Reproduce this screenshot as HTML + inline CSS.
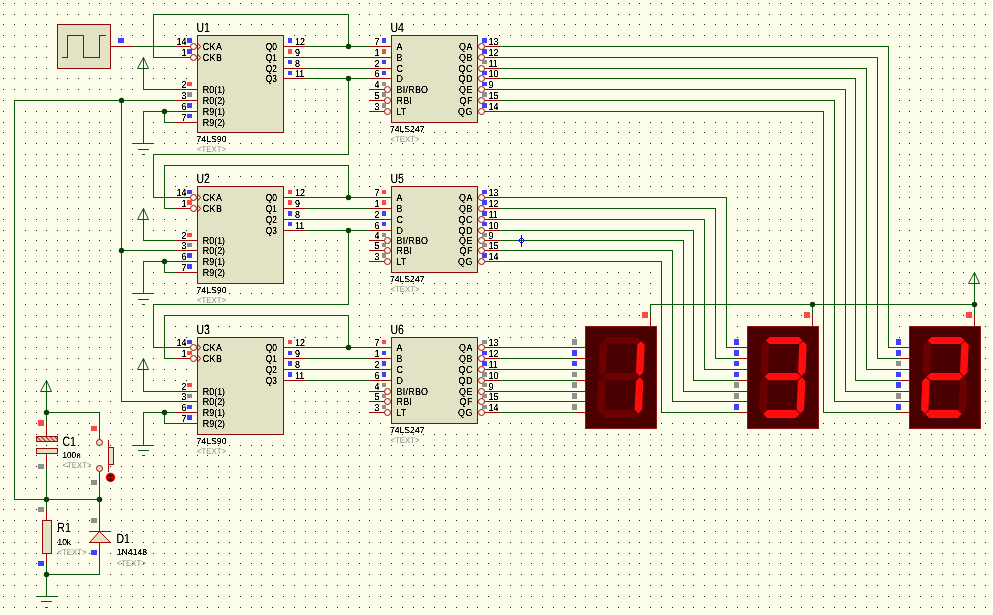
<!DOCTYPE html>
<html><head><meta charset="utf-8"><title>Schematic</title>
<style>
html,body{margin:0;padding:0;background:#fcfdea;}
body{width:993px;height:615px;overflow:hidden;}
svg{display:block;font-family:"Liberation Sans",sans-serif;}
text{text-rendering:geometricPrecision;}
</style></head><body>
<svg width="993" height="615" viewBox="0 0 993 615" shape-rendering="crispEdges">
<rect width="993" height="615" fill="#fcfdea"/>
<g id="dots" fill="#1c1c1c">
<path d="M3 3h1v1h-1zM3 14h1v1h-1zM3 24h1v1h-1zM3 35h1v1h-1zM3 46h1v1h-1zM3 57h1v1h-1zM3 68h1v1h-1zM3 78h1v1h-1zM3 89h1v1h-1zM3 100h1v1h-1zM3 111h1v1h-1zM3 122h1v1h-1zM3 132h1v1h-1zM3 143h1v1h-1zM3 154h1v1h-1zM3 165h1v1h-1zM3 176h1v1h-1zM3 186h1v1h-1zM3 197h1v1h-1zM3 208h1v1h-1zM3 219h1v1h-1zM3 230h1v1h-1zM3 240h1v1h-1zM3 250h1v1h-1zM3 261h1v1h-1zM3 272h1v1h-1zM3 283h1v1h-1zM3 293h1v1h-1zM3 304h1v1h-1zM3 315h1v1h-1zM3 326h1v1h-1zM3 337h1v1h-1zM3 347h1v1h-1zM3 358h1v1h-1zM3 369h1v1h-1zM3 380h1v1h-1zM3 391h1v1h-1zM3 401h1v1h-1zM3 412h1v1h-1zM3 423h1v1h-1zM3 434h1v1h-1zM3 445h1v1h-1zM3 455h1v1h-1zM3 466h1v1h-1zM3 477h1v1h-1zM3 488h1v1h-1zM3 499h1v1h-1zM3 509h1v1h-1zM3 520h1v1h-1zM3 531h1v1h-1zM3 542h1v1h-1zM3 553h1v1h-1zM3 563h1v1h-1zM3 574h1v1h-1zM3 585h1v1h-1zM3 596h1v1h-1zM3 607h1v1h-1zM14 3h1v1h-1zM14 14h1v1h-1zM14 24h1v1h-1zM14 35h1v1h-1zM14 46h1v1h-1zM14 57h1v1h-1zM14 68h1v1h-1zM14 78h1v1h-1zM14 89h1v1h-1zM14 100h1v1h-1zM14 111h1v1h-1zM14 122h1v1h-1zM14 132h1v1h-1zM14 143h1v1h-1zM14 154h1v1h-1zM14 165h1v1h-1zM14 176h1v1h-1zM14 186h1v1h-1zM14 197h1v1h-1zM14 208h1v1h-1zM14 219h1v1h-1zM14 230h1v1h-1zM14 240h1v1h-1zM14 250h1v1h-1zM14 261h1v1h-1zM14 272h1v1h-1zM14 283h1v1h-1zM14 293h1v1h-1zM14 304h1v1h-1zM14 315h1v1h-1zM14 326h1v1h-1zM14 337h1v1h-1zM14 347h1v1h-1zM14 358h1v1h-1zM14 369h1v1h-1zM14 380h1v1h-1zM14 391h1v1h-1zM14 401h1v1h-1zM14 412h1v1h-1zM14 423h1v1h-1zM14 434h1v1h-1zM14 445h1v1h-1zM14 455h1v1h-1zM14 466h1v1h-1zM14 477h1v1h-1zM14 488h1v1h-1zM14 499h1v1h-1zM14 509h1v1h-1zM14 520h1v1h-1zM14 531h1v1h-1zM14 542h1v1h-1zM14 553h1v1h-1zM14 563h1v1h-1zM14 574h1v1h-1zM14 585h1v1h-1zM14 596h1v1h-1zM14 607h1v1h-1zM25 3h1v1h-1zM25 14h1v1h-1zM25 24h1v1h-1zM25 35h1v1h-1zM25 46h1v1h-1zM25 57h1v1h-1zM25 68h1v1h-1zM25 78h1v1h-1zM25 89h1v1h-1zM25 100h1v1h-1zM25 111h1v1h-1zM25 122h1v1h-1zM25 132h1v1h-1zM25 143h1v1h-1zM25 154h1v1h-1zM25 165h1v1h-1zM25 176h1v1h-1zM25 186h1v1h-1zM25 197h1v1h-1zM25 208h1v1h-1zM25 219h1v1h-1zM25 230h1v1h-1zM25 240h1v1h-1zM25 250h1v1h-1zM25 261h1v1h-1zM25 272h1v1h-1zM25 283h1v1h-1zM25 293h1v1h-1zM25 304h1v1h-1zM25 315h1v1h-1zM25 326h1v1h-1zM25 337h1v1h-1zM25 347h1v1h-1zM25 358h1v1h-1zM25 369h1v1h-1zM25 380h1v1h-1zM25 391h1v1h-1zM25 401h1v1h-1zM25 412h1v1h-1zM25 423h1v1h-1zM25 434h1v1h-1zM25 445h1v1h-1zM25 455h1v1h-1zM25 466h1v1h-1zM25 477h1v1h-1zM25 488h1v1h-1zM25 499h1v1h-1zM25 509h1v1h-1zM25 520h1v1h-1zM25 531h1v1h-1zM25 542h1v1h-1zM25 553h1v1h-1zM25 563h1v1h-1zM25 574h1v1h-1zM25 585h1v1h-1zM25 596h1v1h-1zM25 607h1v1h-1zM36 3h1v1h-1zM36 14h1v1h-1zM36 24h1v1h-1zM36 35h1v1h-1zM36 46h1v1h-1zM36 57h1v1h-1zM36 68h1v1h-1zM36 78h1v1h-1zM36 89h1v1h-1zM36 100h1v1h-1zM36 111h1v1h-1zM36 122h1v1h-1zM36 132h1v1h-1zM36 143h1v1h-1zM36 154h1v1h-1zM36 165h1v1h-1zM36 176h1v1h-1zM36 186h1v1h-1zM36 197h1v1h-1zM36 208h1v1h-1zM36 219h1v1h-1zM36 230h1v1h-1zM36 240h1v1h-1zM36 250h1v1h-1zM36 261h1v1h-1zM36 272h1v1h-1zM36 283h1v1h-1zM36 293h1v1h-1zM36 304h1v1h-1zM36 315h1v1h-1zM36 326h1v1h-1zM36 337h1v1h-1zM36 347h1v1h-1zM36 358h1v1h-1zM36 369h1v1h-1zM36 380h1v1h-1zM36 391h1v1h-1zM36 401h1v1h-1zM36 412h1v1h-1zM36 423h1v1h-1zM36 434h1v1h-1zM36 445h1v1h-1zM36 455h1v1h-1zM36 466h1v1h-1zM36 477h1v1h-1zM36 488h1v1h-1zM36 499h1v1h-1zM36 509h1v1h-1zM36 520h1v1h-1zM36 531h1v1h-1zM36 542h1v1h-1zM36 553h1v1h-1zM36 563h1v1h-1zM36 574h1v1h-1zM36 585h1v1h-1zM36 596h1v1h-1zM36 607h1v1h-1zM46 3h1v1h-1zM46 14h1v1h-1zM46 24h1v1h-1zM46 35h1v1h-1zM46 46h1v1h-1zM46 57h1v1h-1zM46 68h1v1h-1zM46 78h1v1h-1zM46 89h1v1h-1zM46 100h1v1h-1zM46 111h1v1h-1zM46 122h1v1h-1zM46 132h1v1h-1zM46 143h1v1h-1zM46 154h1v1h-1zM46 165h1v1h-1zM46 176h1v1h-1zM46 186h1v1h-1zM46 197h1v1h-1zM46 208h1v1h-1zM46 219h1v1h-1zM46 230h1v1h-1zM46 240h1v1h-1zM46 250h1v1h-1zM46 261h1v1h-1zM46 272h1v1h-1zM46 283h1v1h-1zM46 293h1v1h-1zM46 304h1v1h-1zM46 315h1v1h-1zM46 326h1v1h-1zM46 337h1v1h-1zM46 347h1v1h-1zM46 358h1v1h-1zM46 369h1v1h-1zM46 380h1v1h-1zM46 391h1v1h-1zM46 401h1v1h-1zM46 412h1v1h-1zM46 423h1v1h-1zM46 434h1v1h-1zM46 445h1v1h-1zM46 455h1v1h-1zM46 466h1v1h-1zM46 477h1v1h-1zM46 488h1v1h-1zM46 499h1v1h-1zM46 509h1v1h-1zM46 520h1v1h-1zM46 531h1v1h-1zM46 542h1v1h-1zM46 553h1v1h-1zM46 563h1v1h-1zM46 574h1v1h-1zM46 585h1v1h-1zM46 596h1v1h-1zM46 607h1v1h-1zM57 3h1v1h-1zM57 14h1v1h-1zM57 24h1v1h-1zM57 35h1v1h-1zM57 46h1v1h-1zM57 57h1v1h-1zM57 68h1v1h-1zM57 78h1v1h-1zM57 89h1v1h-1zM57 100h1v1h-1zM57 111h1v1h-1zM57 122h1v1h-1zM57 132h1v1h-1zM57 143h1v1h-1zM57 154h1v1h-1zM57 165h1v1h-1zM57 176h1v1h-1zM57 186h1v1h-1zM57 197h1v1h-1zM57 208h1v1h-1zM57 219h1v1h-1zM57 230h1v1h-1zM57 240h1v1h-1zM57 250h1v1h-1zM57 261h1v1h-1zM57 272h1v1h-1zM57 283h1v1h-1zM57 293h1v1h-1zM57 304h1v1h-1zM57 315h1v1h-1zM57 326h1v1h-1zM57 337h1v1h-1zM57 347h1v1h-1zM57 358h1v1h-1zM57 369h1v1h-1zM57 380h1v1h-1zM57 391h1v1h-1zM57 401h1v1h-1zM57 412h1v1h-1zM57 423h1v1h-1zM57 434h1v1h-1zM57 445h1v1h-1zM57 455h1v1h-1zM57 466h1v1h-1zM57 477h1v1h-1zM57 488h1v1h-1zM57 499h1v1h-1zM57 509h1v1h-1zM57 520h1v1h-1zM57 531h1v1h-1zM57 542h1v1h-1zM57 553h1v1h-1zM57 563h1v1h-1zM57 574h1v1h-1zM57 585h1v1h-1zM57 596h1v1h-1zM57 607h1v1h-1zM67 3h1v1h-1zM67 14h1v1h-1zM67 24h1v1h-1zM67 35h1v1h-1zM67 46h1v1h-1zM67 57h1v1h-1zM67 68h1v1h-1zM67 78h1v1h-1zM67 89h1v1h-1zM67 100h1v1h-1zM67 111h1v1h-1zM67 122h1v1h-1zM67 132h1v1h-1zM67 143h1v1h-1zM67 154h1v1h-1zM67 165h1v1h-1zM67 176h1v1h-1zM67 186h1v1h-1zM67 197h1v1h-1zM67 208h1v1h-1zM67 219h1v1h-1zM67 230h1v1h-1zM67 240h1v1h-1zM67 250h1v1h-1zM67 261h1v1h-1zM67 272h1v1h-1zM67 283h1v1h-1zM67 293h1v1h-1zM67 304h1v1h-1zM67 315h1v1h-1zM67 326h1v1h-1zM67 337h1v1h-1zM67 347h1v1h-1zM67 358h1v1h-1zM67 369h1v1h-1zM67 380h1v1h-1zM67 391h1v1h-1zM67 401h1v1h-1zM67 412h1v1h-1zM67 423h1v1h-1zM67 434h1v1h-1zM67 445h1v1h-1zM67 455h1v1h-1zM67 466h1v1h-1zM67 477h1v1h-1zM67 488h1v1h-1zM67 499h1v1h-1zM67 509h1v1h-1zM67 520h1v1h-1zM67 531h1v1h-1zM67 542h1v1h-1zM67 553h1v1h-1zM67 563h1v1h-1zM67 574h1v1h-1zM67 585h1v1h-1zM67 596h1v1h-1zM67 607h1v1h-1zM78 3h1v1h-1zM78 14h1v1h-1zM78 24h1v1h-1zM78 35h1v1h-1zM78 46h1v1h-1zM78 57h1v1h-1zM78 68h1v1h-1zM78 78h1v1h-1zM78 89h1v1h-1zM78 100h1v1h-1zM78 111h1v1h-1zM78 122h1v1h-1zM78 132h1v1h-1zM78 143h1v1h-1zM78 154h1v1h-1zM78 165h1v1h-1zM78 176h1v1h-1zM78 186h1v1h-1zM78 197h1v1h-1zM78 208h1v1h-1zM78 219h1v1h-1zM78 230h1v1h-1zM78 240h1v1h-1zM78 250h1v1h-1zM78 261h1v1h-1zM78 272h1v1h-1zM78 283h1v1h-1zM78 293h1v1h-1zM78 304h1v1h-1zM78 315h1v1h-1zM78 326h1v1h-1zM78 337h1v1h-1zM78 347h1v1h-1zM78 358h1v1h-1zM78 369h1v1h-1zM78 380h1v1h-1zM78 391h1v1h-1zM78 401h1v1h-1zM78 412h1v1h-1zM78 423h1v1h-1zM78 434h1v1h-1zM78 445h1v1h-1zM78 455h1v1h-1zM78 466h1v1h-1zM78 477h1v1h-1zM78 488h1v1h-1zM78 499h1v1h-1zM78 509h1v1h-1zM78 520h1v1h-1zM78 531h1v1h-1zM78 542h1v1h-1zM78 553h1v1h-1zM78 563h1v1h-1zM78 574h1v1h-1zM78 585h1v1h-1zM78 596h1v1h-1zM78 607h1v1h-1zM89 3h1v1h-1zM89 14h1v1h-1zM89 24h1v1h-1zM89 35h1v1h-1zM89 46h1v1h-1zM89 57h1v1h-1zM89 68h1v1h-1zM89 78h1v1h-1zM89 89h1v1h-1zM89 100h1v1h-1zM89 111h1v1h-1zM89 122h1v1h-1zM89 132h1v1h-1zM89 143h1v1h-1zM89 154h1v1h-1zM89 165h1v1h-1zM89 176h1v1h-1zM89 186h1v1h-1zM89 197h1v1h-1zM89 208h1v1h-1zM89 219h1v1h-1zM89 230h1v1h-1zM89 240h1v1h-1zM89 250h1v1h-1zM89 261h1v1h-1zM89 272h1v1h-1zM89 283h1v1h-1zM89 293h1v1h-1zM89 304h1v1h-1zM89 315h1v1h-1zM89 326h1v1h-1zM89 337h1v1h-1zM89 347h1v1h-1zM89 358h1v1h-1zM89 369h1v1h-1zM89 380h1v1h-1zM89 391h1v1h-1zM89 401h1v1h-1zM89 412h1v1h-1zM89 423h1v1h-1zM89 434h1v1h-1zM89 445h1v1h-1zM89 455h1v1h-1zM89 466h1v1h-1zM89 477h1v1h-1zM89 488h1v1h-1zM89 499h1v1h-1zM89 509h1v1h-1zM89 520h1v1h-1zM89 531h1v1h-1zM89 542h1v1h-1zM89 553h1v1h-1zM89 563h1v1h-1zM89 574h1v1h-1zM89 585h1v1h-1zM89 596h1v1h-1zM89 607h1v1h-1zM99 3h1v1h-1zM99 14h1v1h-1zM99 24h1v1h-1zM99 35h1v1h-1zM99 46h1v1h-1zM99 57h1v1h-1zM99 68h1v1h-1zM99 78h1v1h-1zM99 89h1v1h-1zM99 100h1v1h-1zM99 111h1v1h-1zM99 122h1v1h-1zM99 132h1v1h-1zM99 143h1v1h-1zM99 154h1v1h-1zM99 165h1v1h-1zM99 176h1v1h-1zM99 186h1v1h-1zM99 197h1v1h-1zM99 208h1v1h-1zM99 219h1v1h-1zM99 230h1v1h-1zM99 240h1v1h-1zM99 250h1v1h-1zM99 261h1v1h-1zM99 272h1v1h-1zM99 283h1v1h-1zM99 293h1v1h-1zM99 304h1v1h-1zM99 315h1v1h-1zM99 326h1v1h-1zM99 337h1v1h-1zM99 347h1v1h-1zM99 358h1v1h-1zM99 369h1v1h-1zM99 380h1v1h-1zM99 391h1v1h-1zM99 401h1v1h-1zM99 412h1v1h-1zM99 423h1v1h-1zM99 434h1v1h-1zM99 445h1v1h-1zM99 455h1v1h-1zM99 466h1v1h-1zM99 477h1v1h-1zM99 488h1v1h-1zM99 499h1v1h-1zM99 509h1v1h-1zM99 520h1v1h-1zM99 531h1v1h-1zM99 542h1v1h-1zM99 553h1v1h-1zM99 563h1v1h-1zM99 574h1v1h-1zM99 585h1v1h-1zM99 596h1v1h-1zM99 607h1v1h-1zM110 3h1v1h-1zM110 14h1v1h-1zM110 24h1v1h-1zM110 35h1v1h-1zM110 46h1v1h-1zM110 57h1v1h-1zM110 68h1v1h-1zM110 78h1v1h-1zM110 89h1v1h-1zM110 100h1v1h-1zM110 111h1v1h-1zM110 122h1v1h-1zM110 132h1v1h-1zM110 143h1v1h-1zM110 154h1v1h-1zM110 165h1v1h-1zM110 176h1v1h-1zM110 186h1v1h-1zM110 197h1v1h-1zM110 208h1v1h-1zM110 219h1v1h-1zM110 230h1v1h-1zM110 240h1v1h-1zM110 250h1v1h-1zM110 261h1v1h-1zM110 272h1v1h-1zM110 283h1v1h-1zM110 293h1v1h-1zM110 304h1v1h-1zM110 315h1v1h-1zM110 326h1v1h-1zM110 337h1v1h-1zM110 347h1v1h-1zM110 358h1v1h-1zM110 369h1v1h-1zM110 380h1v1h-1zM110 391h1v1h-1zM110 401h1v1h-1zM110 412h1v1h-1zM110 423h1v1h-1zM110 434h1v1h-1zM110 445h1v1h-1zM110 455h1v1h-1zM110 466h1v1h-1zM110 477h1v1h-1zM110 488h1v1h-1zM110 499h1v1h-1zM110 509h1v1h-1zM110 520h1v1h-1zM110 531h1v1h-1zM110 542h1v1h-1zM110 553h1v1h-1zM110 563h1v1h-1zM110 574h1v1h-1zM110 585h1v1h-1zM110 596h1v1h-1zM110 607h1v1h-1zM121 3h1v1h-1zM121 14h1v1h-1zM121 24h1v1h-1zM121 35h1v1h-1zM121 46h1v1h-1zM121 57h1v1h-1zM121 68h1v1h-1zM121 78h1v1h-1zM121 89h1v1h-1zM121 100h1v1h-1zM121 111h1v1h-1zM121 122h1v1h-1zM121 132h1v1h-1zM121 143h1v1h-1zM121 154h1v1h-1zM121 165h1v1h-1zM121 176h1v1h-1zM121 186h1v1h-1zM121 197h1v1h-1zM121 208h1v1h-1zM121 219h1v1h-1zM121 230h1v1h-1zM121 240h1v1h-1zM121 250h1v1h-1zM121 261h1v1h-1zM121 272h1v1h-1zM121 283h1v1h-1zM121 293h1v1h-1zM121 304h1v1h-1zM121 315h1v1h-1zM121 326h1v1h-1zM121 337h1v1h-1zM121 347h1v1h-1zM121 358h1v1h-1zM121 369h1v1h-1zM121 380h1v1h-1zM121 391h1v1h-1zM121 401h1v1h-1zM121 412h1v1h-1zM121 423h1v1h-1zM121 434h1v1h-1zM121 445h1v1h-1zM121 455h1v1h-1zM121 466h1v1h-1zM121 477h1v1h-1zM121 488h1v1h-1zM121 499h1v1h-1zM121 509h1v1h-1zM121 520h1v1h-1zM121 531h1v1h-1zM121 542h1v1h-1zM121 553h1v1h-1zM121 563h1v1h-1zM121 574h1v1h-1zM121 585h1v1h-1zM121 596h1v1h-1zM121 607h1v1h-1zM132 3h1v1h-1zM132 14h1v1h-1zM132 24h1v1h-1zM132 35h1v1h-1zM132 46h1v1h-1zM132 57h1v1h-1zM132 68h1v1h-1zM132 78h1v1h-1zM132 89h1v1h-1zM132 100h1v1h-1zM132 111h1v1h-1zM132 122h1v1h-1zM132 132h1v1h-1zM132 143h1v1h-1zM132 154h1v1h-1zM132 165h1v1h-1zM132 176h1v1h-1zM132 186h1v1h-1zM132 197h1v1h-1zM132 208h1v1h-1zM132 219h1v1h-1zM132 230h1v1h-1zM132 240h1v1h-1zM132 250h1v1h-1zM132 261h1v1h-1zM132 272h1v1h-1zM132 283h1v1h-1zM132 293h1v1h-1zM132 304h1v1h-1zM132 315h1v1h-1zM132 326h1v1h-1zM132 337h1v1h-1zM132 347h1v1h-1zM132 358h1v1h-1zM132 369h1v1h-1zM132 380h1v1h-1zM132 391h1v1h-1zM132 401h1v1h-1zM132 412h1v1h-1zM132 423h1v1h-1zM132 434h1v1h-1zM132 445h1v1h-1zM132 455h1v1h-1zM132 466h1v1h-1zM132 477h1v1h-1zM132 488h1v1h-1zM132 499h1v1h-1zM132 509h1v1h-1zM132 520h1v1h-1zM132 531h1v1h-1zM132 542h1v1h-1zM132 553h1v1h-1zM132 563h1v1h-1zM132 574h1v1h-1zM132 585h1v1h-1zM132 596h1v1h-1zM132 607h1v1h-1zM143 3h1v1h-1zM143 14h1v1h-1zM143 24h1v1h-1zM143 35h1v1h-1zM143 46h1v1h-1zM143 57h1v1h-1zM143 68h1v1h-1zM143 78h1v1h-1zM143 89h1v1h-1zM143 100h1v1h-1zM143 111h1v1h-1zM143 122h1v1h-1zM143 132h1v1h-1zM143 143h1v1h-1zM143 154h1v1h-1zM143 165h1v1h-1zM143 176h1v1h-1zM143 186h1v1h-1zM143 197h1v1h-1zM143 208h1v1h-1zM143 219h1v1h-1zM143 230h1v1h-1zM143 240h1v1h-1zM143 250h1v1h-1zM143 261h1v1h-1zM143 272h1v1h-1zM143 283h1v1h-1zM143 293h1v1h-1zM143 304h1v1h-1zM143 315h1v1h-1zM143 326h1v1h-1zM143 337h1v1h-1zM143 347h1v1h-1zM143 358h1v1h-1zM143 369h1v1h-1zM143 380h1v1h-1zM143 391h1v1h-1zM143 401h1v1h-1zM143 412h1v1h-1zM143 423h1v1h-1zM143 434h1v1h-1zM143 445h1v1h-1zM143 455h1v1h-1zM143 466h1v1h-1zM143 477h1v1h-1zM143 488h1v1h-1zM143 499h1v1h-1zM143 509h1v1h-1zM143 520h1v1h-1zM143 531h1v1h-1zM143 542h1v1h-1zM143 553h1v1h-1zM143 563h1v1h-1zM143 574h1v1h-1zM143 585h1v1h-1zM143 596h1v1h-1zM143 607h1v1h-1zM153 3h1v1h-1zM153 14h1v1h-1zM153 24h1v1h-1zM153 35h1v1h-1zM153 46h1v1h-1zM153 57h1v1h-1zM153 68h1v1h-1zM153 78h1v1h-1zM153 89h1v1h-1zM153 100h1v1h-1zM153 111h1v1h-1zM153 122h1v1h-1zM153 132h1v1h-1zM153 143h1v1h-1zM153 154h1v1h-1zM153 165h1v1h-1zM153 176h1v1h-1zM153 186h1v1h-1zM153 197h1v1h-1zM153 208h1v1h-1zM153 219h1v1h-1zM153 230h1v1h-1zM153 240h1v1h-1zM153 250h1v1h-1zM153 261h1v1h-1zM153 272h1v1h-1zM153 283h1v1h-1zM153 293h1v1h-1zM153 304h1v1h-1zM153 315h1v1h-1zM153 326h1v1h-1zM153 337h1v1h-1zM153 347h1v1h-1zM153 358h1v1h-1zM153 369h1v1h-1zM153 380h1v1h-1zM153 391h1v1h-1zM153 401h1v1h-1zM153 412h1v1h-1zM153 423h1v1h-1zM153 434h1v1h-1zM153 445h1v1h-1zM153 455h1v1h-1zM153 466h1v1h-1zM153 477h1v1h-1zM153 488h1v1h-1zM153 499h1v1h-1zM153 509h1v1h-1zM153 520h1v1h-1zM153 531h1v1h-1zM153 542h1v1h-1zM153 553h1v1h-1zM153 563h1v1h-1zM153 574h1v1h-1zM153 585h1v1h-1zM153 596h1v1h-1zM153 607h1v1h-1zM164 3h1v1h-1zM164 14h1v1h-1zM164 24h1v1h-1zM164 35h1v1h-1zM164 46h1v1h-1zM164 57h1v1h-1zM164 68h1v1h-1zM164 78h1v1h-1zM164 89h1v1h-1zM164 100h1v1h-1zM164 111h1v1h-1zM164 122h1v1h-1zM164 132h1v1h-1zM164 143h1v1h-1zM164 154h1v1h-1zM164 165h1v1h-1zM164 176h1v1h-1zM164 186h1v1h-1zM164 197h1v1h-1zM164 208h1v1h-1zM164 219h1v1h-1zM164 230h1v1h-1zM164 240h1v1h-1zM164 250h1v1h-1zM164 261h1v1h-1zM164 272h1v1h-1zM164 283h1v1h-1zM164 293h1v1h-1zM164 304h1v1h-1zM164 315h1v1h-1zM164 326h1v1h-1zM164 337h1v1h-1zM164 347h1v1h-1zM164 358h1v1h-1zM164 369h1v1h-1zM164 380h1v1h-1zM164 391h1v1h-1zM164 401h1v1h-1zM164 412h1v1h-1zM164 423h1v1h-1zM164 434h1v1h-1zM164 445h1v1h-1zM164 455h1v1h-1zM164 466h1v1h-1zM164 477h1v1h-1zM164 488h1v1h-1zM164 499h1v1h-1zM164 509h1v1h-1zM164 520h1v1h-1zM164 531h1v1h-1zM164 542h1v1h-1zM164 553h1v1h-1zM164 563h1v1h-1zM164 574h1v1h-1zM164 585h1v1h-1zM164 596h1v1h-1zM164 607h1v1h-1zM175 3h1v1h-1zM175 14h1v1h-1zM175 24h1v1h-1zM175 35h1v1h-1zM175 46h1v1h-1zM175 57h1v1h-1zM175 68h1v1h-1zM175 78h1v1h-1zM175 89h1v1h-1zM175 100h1v1h-1zM175 111h1v1h-1zM175 122h1v1h-1zM175 132h1v1h-1zM175 143h1v1h-1zM175 154h1v1h-1zM175 165h1v1h-1zM175 176h1v1h-1zM175 186h1v1h-1zM175 197h1v1h-1zM175 208h1v1h-1zM175 219h1v1h-1zM175 230h1v1h-1zM175 240h1v1h-1zM175 250h1v1h-1zM175 261h1v1h-1zM175 272h1v1h-1zM175 283h1v1h-1zM175 293h1v1h-1zM175 304h1v1h-1zM175 315h1v1h-1zM175 326h1v1h-1zM175 337h1v1h-1zM175 347h1v1h-1zM175 358h1v1h-1zM175 369h1v1h-1zM175 380h1v1h-1zM175 391h1v1h-1zM175 401h1v1h-1zM175 412h1v1h-1zM175 423h1v1h-1zM175 434h1v1h-1zM175 445h1v1h-1zM175 455h1v1h-1zM175 466h1v1h-1zM175 477h1v1h-1zM175 488h1v1h-1zM175 499h1v1h-1zM175 509h1v1h-1zM175 520h1v1h-1zM175 531h1v1h-1zM175 542h1v1h-1zM175 553h1v1h-1zM175 563h1v1h-1zM175 574h1v1h-1zM175 585h1v1h-1zM175 596h1v1h-1zM175 607h1v1h-1zM186 3h1v1h-1zM186 14h1v1h-1zM186 24h1v1h-1zM186 35h1v1h-1zM186 46h1v1h-1zM186 57h1v1h-1zM186 68h1v1h-1zM186 78h1v1h-1zM186 89h1v1h-1zM186 100h1v1h-1zM186 111h1v1h-1zM186 122h1v1h-1zM186 132h1v1h-1zM186 143h1v1h-1zM186 154h1v1h-1zM186 165h1v1h-1zM186 176h1v1h-1zM186 186h1v1h-1zM186 197h1v1h-1zM186 208h1v1h-1zM186 219h1v1h-1zM186 230h1v1h-1zM186 240h1v1h-1zM186 250h1v1h-1zM186 261h1v1h-1zM186 272h1v1h-1zM186 283h1v1h-1zM186 293h1v1h-1zM186 304h1v1h-1zM186 315h1v1h-1zM186 326h1v1h-1zM186 337h1v1h-1zM186 347h1v1h-1zM186 358h1v1h-1zM186 369h1v1h-1zM186 380h1v1h-1zM186 391h1v1h-1zM186 401h1v1h-1zM186 412h1v1h-1zM186 423h1v1h-1zM186 434h1v1h-1zM186 445h1v1h-1zM186 455h1v1h-1zM186 466h1v1h-1zM186 477h1v1h-1zM186 488h1v1h-1zM186 499h1v1h-1zM186 509h1v1h-1zM186 520h1v1h-1zM186 531h1v1h-1zM186 542h1v1h-1zM186 553h1v1h-1zM186 563h1v1h-1zM186 574h1v1h-1zM186 585h1v1h-1zM186 596h1v1h-1zM186 607h1v1h-1zM197 3h1v1h-1zM197 14h1v1h-1zM197 24h1v1h-1zM197 35h1v1h-1zM197 46h1v1h-1zM197 57h1v1h-1zM197 68h1v1h-1zM197 78h1v1h-1zM197 89h1v1h-1zM197 100h1v1h-1zM197 111h1v1h-1zM197 122h1v1h-1zM197 132h1v1h-1zM197 143h1v1h-1zM197 154h1v1h-1zM197 165h1v1h-1zM197 176h1v1h-1zM197 186h1v1h-1zM197 197h1v1h-1zM197 208h1v1h-1zM197 219h1v1h-1zM197 230h1v1h-1zM197 240h1v1h-1zM197 250h1v1h-1zM197 261h1v1h-1zM197 272h1v1h-1zM197 283h1v1h-1zM197 293h1v1h-1zM197 304h1v1h-1zM197 315h1v1h-1zM197 326h1v1h-1zM197 337h1v1h-1zM197 347h1v1h-1zM197 358h1v1h-1zM197 369h1v1h-1zM197 380h1v1h-1zM197 391h1v1h-1zM197 401h1v1h-1zM197 412h1v1h-1zM197 423h1v1h-1zM197 434h1v1h-1zM197 445h1v1h-1zM197 455h1v1h-1zM197 466h1v1h-1zM197 477h1v1h-1zM197 488h1v1h-1zM197 499h1v1h-1zM197 509h1v1h-1zM197 520h1v1h-1zM197 531h1v1h-1zM197 542h1v1h-1zM197 553h1v1h-1zM197 563h1v1h-1zM197 574h1v1h-1zM197 585h1v1h-1zM197 596h1v1h-1zM197 607h1v1h-1zM207 3h1v1h-1zM207 14h1v1h-1zM207 24h1v1h-1zM207 35h1v1h-1zM207 46h1v1h-1zM207 57h1v1h-1zM207 68h1v1h-1zM207 78h1v1h-1zM207 89h1v1h-1zM207 100h1v1h-1zM207 111h1v1h-1zM207 122h1v1h-1zM207 132h1v1h-1zM207 143h1v1h-1zM207 154h1v1h-1zM207 165h1v1h-1zM207 176h1v1h-1zM207 186h1v1h-1zM207 197h1v1h-1zM207 208h1v1h-1zM207 219h1v1h-1zM207 230h1v1h-1zM207 240h1v1h-1zM207 250h1v1h-1zM207 261h1v1h-1zM207 272h1v1h-1zM207 283h1v1h-1zM207 293h1v1h-1zM207 304h1v1h-1zM207 315h1v1h-1zM207 326h1v1h-1zM207 337h1v1h-1zM207 347h1v1h-1zM207 358h1v1h-1zM207 369h1v1h-1zM207 380h1v1h-1zM207 391h1v1h-1zM207 401h1v1h-1zM207 412h1v1h-1zM207 423h1v1h-1zM207 434h1v1h-1zM207 445h1v1h-1zM207 455h1v1h-1zM207 466h1v1h-1zM207 477h1v1h-1zM207 488h1v1h-1zM207 499h1v1h-1zM207 509h1v1h-1zM207 520h1v1h-1zM207 531h1v1h-1zM207 542h1v1h-1zM207 553h1v1h-1zM207 563h1v1h-1zM207 574h1v1h-1zM207 585h1v1h-1zM207 596h1v1h-1zM207 607h1v1h-1zM218 3h1v1h-1zM218 14h1v1h-1zM218 24h1v1h-1zM218 35h1v1h-1zM218 46h1v1h-1zM218 57h1v1h-1zM218 68h1v1h-1zM218 78h1v1h-1zM218 89h1v1h-1zM218 100h1v1h-1zM218 111h1v1h-1zM218 122h1v1h-1zM218 132h1v1h-1zM218 143h1v1h-1zM218 154h1v1h-1zM218 165h1v1h-1zM218 176h1v1h-1zM218 186h1v1h-1zM218 197h1v1h-1zM218 208h1v1h-1zM218 219h1v1h-1zM218 230h1v1h-1zM218 240h1v1h-1zM218 250h1v1h-1zM218 261h1v1h-1zM218 272h1v1h-1zM218 283h1v1h-1zM218 293h1v1h-1zM218 304h1v1h-1zM218 315h1v1h-1zM218 326h1v1h-1zM218 337h1v1h-1zM218 347h1v1h-1zM218 358h1v1h-1zM218 369h1v1h-1zM218 380h1v1h-1zM218 391h1v1h-1zM218 401h1v1h-1zM218 412h1v1h-1zM218 423h1v1h-1zM218 434h1v1h-1zM218 445h1v1h-1zM218 455h1v1h-1zM218 466h1v1h-1zM218 477h1v1h-1zM218 488h1v1h-1zM218 499h1v1h-1zM218 509h1v1h-1zM218 520h1v1h-1zM218 531h1v1h-1zM218 542h1v1h-1zM218 553h1v1h-1zM218 563h1v1h-1zM218 574h1v1h-1zM218 585h1v1h-1zM218 596h1v1h-1zM218 607h1v1h-1zM229 3h1v1h-1zM229 14h1v1h-1zM229 24h1v1h-1zM229 35h1v1h-1zM229 46h1v1h-1zM229 57h1v1h-1zM229 68h1v1h-1zM229 78h1v1h-1zM229 89h1v1h-1zM229 100h1v1h-1zM229 111h1v1h-1zM229 122h1v1h-1zM229 132h1v1h-1zM229 143h1v1h-1zM229 154h1v1h-1zM229 165h1v1h-1zM229 176h1v1h-1zM229 186h1v1h-1zM229 197h1v1h-1zM229 208h1v1h-1zM229 219h1v1h-1zM229 230h1v1h-1zM229 240h1v1h-1zM229 250h1v1h-1zM229 261h1v1h-1zM229 272h1v1h-1zM229 283h1v1h-1zM229 293h1v1h-1zM229 304h1v1h-1zM229 315h1v1h-1zM229 326h1v1h-1zM229 337h1v1h-1zM229 347h1v1h-1zM229 358h1v1h-1zM229 369h1v1h-1zM229 380h1v1h-1zM229 391h1v1h-1zM229 401h1v1h-1zM229 412h1v1h-1zM229 423h1v1h-1zM229 434h1v1h-1zM229 445h1v1h-1zM229 455h1v1h-1zM229 466h1v1h-1zM229 477h1v1h-1zM229 488h1v1h-1zM229 499h1v1h-1zM229 509h1v1h-1zM229 520h1v1h-1zM229 531h1v1h-1zM229 542h1v1h-1zM229 553h1v1h-1zM229 563h1v1h-1zM229 574h1v1h-1zM229 585h1v1h-1zM229 596h1v1h-1zM229 607h1v1h-1zM240 3h1v1h-1zM240 14h1v1h-1zM240 24h1v1h-1zM240 35h1v1h-1zM240 46h1v1h-1zM240 57h1v1h-1zM240 68h1v1h-1zM240 78h1v1h-1zM240 89h1v1h-1zM240 100h1v1h-1zM240 111h1v1h-1zM240 122h1v1h-1zM240 132h1v1h-1zM240 143h1v1h-1zM240 154h1v1h-1zM240 165h1v1h-1zM240 176h1v1h-1zM240 186h1v1h-1zM240 197h1v1h-1zM240 208h1v1h-1zM240 219h1v1h-1zM240 230h1v1h-1zM240 240h1v1h-1zM240 250h1v1h-1zM240 261h1v1h-1zM240 272h1v1h-1zM240 283h1v1h-1zM240 293h1v1h-1zM240 304h1v1h-1zM240 315h1v1h-1zM240 326h1v1h-1zM240 337h1v1h-1zM240 347h1v1h-1zM240 358h1v1h-1zM240 369h1v1h-1zM240 380h1v1h-1zM240 391h1v1h-1zM240 401h1v1h-1zM240 412h1v1h-1zM240 423h1v1h-1zM240 434h1v1h-1zM240 445h1v1h-1zM240 455h1v1h-1zM240 466h1v1h-1zM240 477h1v1h-1zM240 488h1v1h-1zM240 499h1v1h-1zM240 509h1v1h-1zM240 520h1v1h-1zM240 531h1v1h-1zM240 542h1v1h-1zM240 553h1v1h-1zM240 563h1v1h-1zM240 574h1v1h-1zM240 585h1v1h-1zM240 596h1v1h-1zM240 607h1v1h-1zM251 3h1v1h-1zM251 14h1v1h-1zM251 24h1v1h-1zM251 35h1v1h-1zM251 46h1v1h-1zM251 57h1v1h-1zM251 68h1v1h-1zM251 78h1v1h-1zM251 89h1v1h-1zM251 100h1v1h-1zM251 111h1v1h-1zM251 122h1v1h-1zM251 132h1v1h-1zM251 143h1v1h-1zM251 154h1v1h-1zM251 165h1v1h-1zM251 176h1v1h-1zM251 186h1v1h-1zM251 197h1v1h-1zM251 208h1v1h-1zM251 219h1v1h-1zM251 230h1v1h-1zM251 240h1v1h-1zM251 250h1v1h-1zM251 261h1v1h-1zM251 272h1v1h-1zM251 283h1v1h-1zM251 293h1v1h-1zM251 304h1v1h-1zM251 315h1v1h-1zM251 326h1v1h-1zM251 337h1v1h-1zM251 347h1v1h-1zM251 358h1v1h-1zM251 369h1v1h-1zM251 380h1v1h-1zM251 391h1v1h-1zM251 401h1v1h-1zM251 412h1v1h-1zM251 423h1v1h-1zM251 434h1v1h-1zM251 445h1v1h-1zM251 455h1v1h-1zM251 466h1v1h-1zM251 477h1v1h-1zM251 488h1v1h-1zM251 499h1v1h-1zM251 509h1v1h-1zM251 520h1v1h-1zM251 531h1v1h-1zM251 542h1v1h-1zM251 553h1v1h-1zM251 563h1v1h-1zM251 574h1v1h-1zM251 585h1v1h-1zM251 596h1v1h-1zM251 607h1v1h-1zM261 3h1v1h-1zM261 14h1v1h-1zM261 24h1v1h-1zM261 35h1v1h-1zM261 46h1v1h-1zM261 57h1v1h-1zM261 68h1v1h-1zM261 78h1v1h-1zM261 89h1v1h-1zM261 100h1v1h-1zM261 111h1v1h-1zM261 122h1v1h-1zM261 132h1v1h-1zM261 143h1v1h-1zM261 154h1v1h-1zM261 165h1v1h-1zM261 176h1v1h-1zM261 186h1v1h-1zM261 197h1v1h-1zM261 208h1v1h-1zM261 219h1v1h-1zM261 230h1v1h-1zM261 240h1v1h-1zM261 250h1v1h-1zM261 261h1v1h-1zM261 272h1v1h-1zM261 283h1v1h-1zM261 293h1v1h-1zM261 304h1v1h-1zM261 315h1v1h-1zM261 326h1v1h-1zM261 337h1v1h-1zM261 347h1v1h-1zM261 358h1v1h-1zM261 369h1v1h-1zM261 380h1v1h-1zM261 391h1v1h-1zM261 401h1v1h-1zM261 412h1v1h-1zM261 423h1v1h-1zM261 434h1v1h-1zM261 445h1v1h-1zM261 455h1v1h-1zM261 466h1v1h-1zM261 477h1v1h-1zM261 488h1v1h-1zM261 499h1v1h-1zM261 509h1v1h-1zM261 520h1v1h-1zM261 531h1v1h-1zM261 542h1v1h-1zM261 553h1v1h-1zM261 563h1v1h-1zM261 574h1v1h-1zM261 585h1v1h-1zM261 596h1v1h-1zM261 607h1v1h-1zM272 3h1v1h-1zM272 14h1v1h-1zM272 24h1v1h-1zM272 35h1v1h-1zM272 46h1v1h-1zM272 57h1v1h-1zM272 68h1v1h-1zM272 78h1v1h-1zM272 89h1v1h-1zM272 100h1v1h-1zM272 111h1v1h-1zM272 122h1v1h-1zM272 132h1v1h-1zM272 143h1v1h-1zM272 154h1v1h-1zM272 165h1v1h-1zM272 176h1v1h-1zM272 186h1v1h-1zM272 197h1v1h-1zM272 208h1v1h-1zM272 219h1v1h-1zM272 230h1v1h-1zM272 240h1v1h-1zM272 250h1v1h-1zM272 261h1v1h-1zM272 272h1v1h-1zM272 283h1v1h-1zM272 293h1v1h-1zM272 304h1v1h-1zM272 315h1v1h-1zM272 326h1v1h-1zM272 337h1v1h-1zM272 347h1v1h-1zM272 358h1v1h-1zM272 369h1v1h-1zM272 380h1v1h-1zM272 391h1v1h-1zM272 401h1v1h-1zM272 412h1v1h-1zM272 423h1v1h-1zM272 434h1v1h-1zM272 445h1v1h-1zM272 455h1v1h-1zM272 466h1v1h-1zM272 477h1v1h-1zM272 488h1v1h-1zM272 499h1v1h-1zM272 509h1v1h-1zM272 520h1v1h-1zM272 531h1v1h-1zM272 542h1v1h-1zM272 553h1v1h-1zM272 563h1v1h-1zM272 574h1v1h-1zM272 585h1v1h-1zM272 596h1v1h-1zM272 607h1v1h-1zM283 3h1v1h-1zM283 14h1v1h-1zM283 24h1v1h-1zM283 35h1v1h-1zM283 46h1v1h-1zM283 57h1v1h-1zM283 68h1v1h-1zM283 78h1v1h-1zM283 89h1v1h-1zM283 100h1v1h-1zM283 111h1v1h-1zM283 122h1v1h-1zM283 132h1v1h-1zM283 143h1v1h-1zM283 154h1v1h-1zM283 165h1v1h-1zM283 176h1v1h-1zM283 186h1v1h-1zM283 197h1v1h-1zM283 208h1v1h-1zM283 219h1v1h-1zM283 230h1v1h-1zM283 240h1v1h-1zM283 250h1v1h-1zM283 261h1v1h-1zM283 272h1v1h-1zM283 283h1v1h-1zM283 293h1v1h-1zM283 304h1v1h-1zM283 315h1v1h-1zM283 326h1v1h-1zM283 337h1v1h-1zM283 347h1v1h-1zM283 358h1v1h-1zM283 369h1v1h-1zM283 380h1v1h-1zM283 391h1v1h-1zM283 401h1v1h-1zM283 412h1v1h-1zM283 423h1v1h-1zM283 434h1v1h-1zM283 445h1v1h-1zM283 455h1v1h-1zM283 466h1v1h-1zM283 477h1v1h-1zM283 488h1v1h-1zM283 499h1v1h-1zM283 509h1v1h-1zM283 520h1v1h-1zM283 531h1v1h-1zM283 542h1v1h-1zM283 553h1v1h-1zM283 563h1v1h-1zM283 574h1v1h-1zM283 585h1v1h-1zM283 596h1v1h-1zM283 607h1v1h-1zM294 3h1v1h-1zM294 14h1v1h-1zM294 24h1v1h-1zM294 35h1v1h-1zM294 46h1v1h-1zM294 57h1v1h-1zM294 68h1v1h-1zM294 78h1v1h-1zM294 89h1v1h-1zM294 100h1v1h-1zM294 111h1v1h-1zM294 122h1v1h-1zM294 132h1v1h-1zM294 143h1v1h-1zM294 154h1v1h-1zM294 165h1v1h-1zM294 176h1v1h-1zM294 186h1v1h-1zM294 197h1v1h-1zM294 208h1v1h-1zM294 219h1v1h-1zM294 230h1v1h-1zM294 240h1v1h-1zM294 250h1v1h-1zM294 261h1v1h-1zM294 272h1v1h-1zM294 283h1v1h-1zM294 293h1v1h-1zM294 304h1v1h-1zM294 315h1v1h-1zM294 326h1v1h-1zM294 337h1v1h-1zM294 347h1v1h-1zM294 358h1v1h-1zM294 369h1v1h-1zM294 380h1v1h-1zM294 391h1v1h-1zM294 401h1v1h-1zM294 412h1v1h-1zM294 423h1v1h-1zM294 434h1v1h-1zM294 445h1v1h-1zM294 455h1v1h-1zM294 466h1v1h-1zM294 477h1v1h-1zM294 488h1v1h-1zM294 499h1v1h-1zM294 509h1v1h-1zM294 520h1v1h-1zM294 531h1v1h-1zM294 542h1v1h-1zM294 553h1v1h-1zM294 563h1v1h-1zM294 574h1v1h-1zM294 585h1v1h-1zM294 596h1v1h-1zM294 607h1v1h-1zM305 3h1v1h-1zM305 14h1v1h-1zM305 24h1v1h-1zM305 35h1v1h-1zM305 46h1v1h-1zM305 57h1v1h-1zM305 68h1v1h-1zM305 78h1v1h-1zM305 89h1v1h-1zM305 100h1v1h-1zM305 111h1v1h-1zM305 122h1v1h-1zM305 132h1v1h-1zM305 143h1v1h-1zM305 154h1v1h-1zM305 165h1v1h-1zM305 176h1v1h-1zM305 186h1v1h-1zM305 197h1v1h-1zM305 208h1v1h-1zM305 219h1v1h-1zM305 230h1v1h-1zM305 240h1v1h-1zM305 250h1v1h-1zM305 261h1v1h-1zM305 272h1v1h-1zM305 283h1v1h-1zM305 293h1v1h-1zM305 304h1v1h-1zM305 315h1v1h-1zM305 326h1v1h-1zM305 337h1v1h-1zM305 347h1v1h-1zM305 358h1v1h-1zM305 369h1v1h-1zM305 380h1v1h-1zM305 391h1v1h-1zM305 401h1v1h-1zM305 412h1v1h-1zM305 423h1v1h-1zM305 434h1v1h-1zM305 445h1v1h-1zM305 455h1v1h-1zM305 466h1v1h-1zM305 477h1v1h-1zM305 488h1v1h-1zM305 499h1v1h-1zM305 509h1v1h-1zM305 520h1v1h-1zM305 531h1v1h-1zM305 542h1v1h-1zM305 553h1v1h-1zM305 563h1v1h-1zM305 574h1v1h-1zM305 585h1v1h-1zM305 596h1v1h-1zM305 607h1v1h-1zM315 3h1v1h-1zM315 14h1v1h-1zM315 24h1v1h-1zM315 35h1v1h-1zM315 46h1v1h-1zM315 57h1v1h-1zM315 68h1v1h-1zM315 78h1v1h-1zM315 89h1v1h-1zM315 100h1v1h-1zM315 111h1v1h-1zM315 122h1v1h-1zM315 132h1v1h-1zM315 143h1v1h-1zM315 154h1v1h-1zM315 165h1v1h-1zM315 176h1v1h-1zM315 186h1v1h-1zM315 197h1v1h-1zM315 208h1v1h-1zM315 219h1v1h-1zM315 230h1v1h-1zM315 240h1v1h-1zM315 250h1v1h-1zM315 261h1v1h-1zM315 272h1v1h-1zM315 283h1v1h-1zM315 293h1v1h-1zM315 304h1v1h-1zM315 315h1v1h-1zM315 326h1v1h-1zM315 337h1v1h-1zM315 347h1v1h-1zM315 358h1v1h-1zM315 369h1v1h-1zM315 380h1v1h-1zM315 391h1v1h-1zM315 401h1v1h-1zM315 412h1v1h-1zM315 423h1v1h-1zM315 434h1v1h-1zM315 445h1v1h-1zM315 455h1v1h-1zM315 466h1v1h-1zM315 477h1v1h-1zM315 488h1v1h-1zM315 499h1v1h-1zM315 509h1v1h-1zM315 520h1v1h-1zM315 531h1v1h-1zM315 542h1v1h-1zM315 553h1v1h-1zM315 563h1v1h-1zM315 574h1v1h-1zM315 585h1v1h-1zM315 596h1v1h-1zM315 607h1v1h-1zM326 3h1v1h-1zM326 14h1v1h-1zM326 24h1v1h-1zM326 35h1v1h-1zM326 46h1v1h-1zM326 57h1v1h-1zM326 68h1v1h-1zM326 78h1v1h-1zM326 89h1v1h-1zM326 100h1v1h-1zM326 111h1v1h-1zM326 122h1v1h-1zM326 132h1v1h-1zM326 143h1v1h-1zM326 154h1v1h-1zM326 165h1v1h-1zM326 176h1v1h-1zM326 186h1v1h-1zM326 197h1v1h-1zM326 208h1v1h-1zM326 219h1v1h-1zM326 230h1v1h-1zM326 240h1v1h-1zM326 250h1v1h-1zM326 261h1v1h-1zM326 272h1v1h-1zM326 283h1v1h-1zM326 293h1v1h-1zM326 304h1v1h-1zM326 315h1v1h-1zM326 326h1v1h-1zM326 337h1v1h-1zM326 347h1v1h-1zM326 358h1v1h-1zM326 369h1v1h-1zM326 380h1v1h-1zM326 391h1v1h-1zM326 401h1v1h-1zM326 412h1v1h-1zM326 423h1v1h-1zM326 434h1v1h-1zM326 445h1v1h-1zM326 455h1v1h-1zM326 466h1v1h-1zM326 477h1v1h-1zM326 488h1v1h-1zM326 499h1v1h-1zM326 509h1v1h-1zM326 520h1v1h-1zM326 531h1v1h-1zM326 542h1v1h-1zM326 553h1v1h-1zM326 563h1v1h-1zM326 574h1v1h-1zM326 585h1v1h-1zM326 596h1v1h-1zM326 607h1v1h-1zM337 3h1v1h-1zM337 14h1v1h-1zM337 24h1v1h-1zM337 35h1v1h-1zM337 46h1v1h-1zM337 57h1v1h-1zM337 68h1v1h-1zM337 78h1v1h-1zM337 89h1v1h-1zM337 100h1v1h-1zM337 111h1v1h-1zM337 122h1v1h-1zM337 132h1v1h-1zM337 143h1v1h-1zM337 154h1v1h-1zM337 165h1v1h-1zM337 176h1v1h-1zM337 186h1v1h-1zM337 197h1v1h-1zM337 208h1v1h-1zM337 219h1v1h-1zM337 230h1v1h-1zM337 240h1v1h-1zM337 250h1v1h-1zM337 261h1v1h-1zM337 272h1v1h-1zM337 283h1v1h-1zM337 293h1v1h-1zM337 304h1v1h-1zM337 315h1v1h-1zM337 326h1v1h-1zM337 337h1v1h-1zM337 347h1v1h-1zM337 358h1v1h-1zM337 369h1v1h-1zM337 380h1v1h-1zM337 391h1v1h-1zM337 401h1v1h-1zM337 412h1v1h-1zM337 423h1v1h-1zM337 434h1v1h-1zM337 445h1v1h-1zM337 455h1v1h-1zM337 466h1v1h-1zM337 477h1v1h-1zM337 488h1v1h-1zM337 499h1v1h-1zM337 509h1v1h-1zM337 520h1v1h-1zM337 531h1v1h-1zM337 542h1v1h-1zM337 553h1v1h-1zM337 563h1v1h-1zM337 574h1v1h-1zM337 585h1v1h-1zM337 596h1v1h-1zM337 607h1v1h-1zM348 3h1v1h-1zM348 14h1v1h-1zM348 24h1v1h-1zM348 35h1v1h-1zM348 46h1v1h-1zM348 57h1v1h-1zM348 68h1v1h-1zM348 78h1v1h-1zM348 89h1v1h-1zM348 100h1v1h-1zM348 111h1v1h-1zM348 122h1v1h-1zM348 132h1v1h-1zM348 143h1v1h-1zM348 154h1v1h-1zM348 165h1v1h-1zM348 176h1v1h-1zM348 186h1v1h-1zM348 197h1v1h-1zM348 208h1v1h-1zM348 219h1v1h-1zM348 230h1v1h-1zM348 240h1v1h-1zM348 250h1v1h-1zM348 261h1v1h-1zM348 272h1v1h-1zM348 283h1v1h-1zM348 293h1v1h-1zM348 304h1v1h-1zM348 315h1v1h-1zM348 326h1v1h-1zM348 337h1v1h-1zM348 347h1v1h-1zM348 358h1v1h-1zM348 369h1v1h-1zM348 380h1v1h-1zM348 391h1v1h-1zM348 401h1v1h-1zM348 412h1v1h-1zM348 423h1v1h-1zM348 434h1v1h-1zM348 445h1v1h-1zM348 455h1v1h-1zM348 466h1v1h-1zM348 477h1v1h-1zM348 488h1v1h-1zM348 499h1v1h-1zM348 509h1v1h-1zM348 520h1v1h-1zM348 531h1v1h-1zM348 542h1v1h-1zM348 553h1v1h-1zM348 563h1v1h-1zM348 574h1v1h-1zM348 585h1v1h-1zM348 596h1v1h-1zM348 607h1v1h-1zM359 3h1v1h-1zM359 14h1v1h-1zM359 24h1v1h-1zM359 35h1v1h-1zM359 46h1v1h-1zM359 57h1v1h-1zM359 68h1v1h-1zM359 78h1v1h-1zM359 89h1v1h-1zM359 100h1v1h-1zM359 111h1v1h-1zM359 122h1v1h-1zM359 132h1v1h-1zM359 143h1v1h-1zM359 154h1v1h-1zM359 165h1v1h-1zM359 176h1v1h-1zM359 186h1v1h-1zM359 197h1v1h-1zM359 208h1v1h-1zM359 219h1v1h-1zM359 230h1v1h-1zM359 240h1v1h-1zM359 250h1v1h-1zM359 261h1v1h-1zM359 272h1v1h-1zM359 283h1v1h-1zM359 293h1v1h-1zM359 304h1v1h-1zM359 315h1v1h-1zM359 326h1v1h-1zM359 337h1v1h-1zM359 347h1v1h-1zM359 358h1v1h-1zM359 369h1v1h-1zM359 380h1v1h-1zM359 391h1v1h-1zM359 401h1v1h-1zM359 412h1v1h-1zM359 423h1v1h-1zM359 434h1v1h-1zM359 445h1v1h-1zM359 455h1v1h-1zM359 466h1v1h-1zM359 477h1v1h-1zM359 488h1v1h-1zM359 499h1v1h-1zM359 509h1v1h-1zM359 520h1v1h-1zM359 531h1v1h-1zM359 542h1v1h-1zM359 553h1v1h-1zM359 563h1v1h-1zM359 574h1v1h-1zM359 585h1v1h-1zM359 596h1v1h-1zM359 607h1v1h-1zM369 3h1v1h-1zM369 14h1v1h-1zM369 24h1v1h-1zM369 35h1v1h-1zM369 46h1v1h-1zM369 57h1v1h-1zM369 68h1v1h-1zM369 78h1v1h-1zM369 89h1v1h-1zM369 100h1v1h-1zM369 111h1v1h-1zM369 122h1v1h-1zM369 132h1v1h-1zM369 143h1v1h-1zM369 154h1v1h-1zM369 165h1v1h-1zM369 176h1v1h-1zM369 186h1v1h-1zM369 197h1v1h-1zM369 208h1v1h-1zM369 219h1v1h-1zM369 230h1v1h-1zM369 240h1v1h-1zM369 250h1v1h-1zM369 261h1v1h-1zM369 272h1v1h-1zM369 283h1v1h-1zM369 293h1v1h-1zM369 304h1v1h-1zM369 315h1v1h-1zM369 326h1v1h-1zM369 337h1v1h-1zM369 347h1v1h-1zM369 358h1v1h-1zM369 369h1v1h-1zM369 380h1v1h-1zM369 391h1v1h-1zM369 401h1v1h-1zM369 412h1v1h-1zM369 423h1v1h-1zM369 434h1v1h-1zM369 445h1v1h-1zM369 455h1v1h-1zM369 466h1v1h-1zM369 477h1v1h-1zM369 488h1v1h-1zM369 499h1v1h-1zM369 509h1v1h-1zM369 520h1v1h-1zM369 531h1v1h-1zM369 542h1v1h-1zM369 553h1v1h-1zM369 563h1v1h-1zM369 574h1v1h-1zM369 585h1v1h-1zM369 596h1v1h-1zM369 607h1v1h-1zM380 3h1v1h-1zM380 14h1v1h-1zM380 24h1v1h-1zM380 35h1v1h-1zM380 46h1v1h-1zM380 57h1v1h-1zM380 68h1v1h-1zM380 78h1v1h-1zM380 89h1v1h-1zM380 100h1v1h-1zM380 111h1v1h-1zM380 122h1v1h-1zM380 132h1v1h-1zM380 143h1v1h-1zM380 154h1v1h-1zM380 165h1v1h-1zM380 176h1v1h-1zM380 186h1v1h-1zM380 197h1v1h-1zM380 208h1v1h-1zM380 219h1v1h-1zM380 230h1v1h-1zM380 240h1v1h-1zM380 250h1v1h-1zM380 261h1v1h-1zM380 272h1v1h-1zM380 283h1v1h-1zM380 293h1v1h-1zM380 304h1v1h-1zM380 315h1v1h-1zM380 326h1v1h-1zM380 337h1v1h-1zM380 347h1v1h-1zM380 358h1v1h-1zM380 369h1v1h-1zM380 380h1v1h-1zM380 391h1v1h-1zM380 401h1v1h-1zM380 412h1v1h-1zM380 423h1v1h-1zM380 434h1v1h-1zM380 445h1v1h-1zM380 455h1v1h-1zM380 466h1v1h-1zM380 477h1v1h-1zM380 488h1v1h-1zM380 499h1v1h-1zM380 509h1v1h-1zM380 520h1v1h-1zM380 531h1v1h-1zM380 542h1v1h-1zM380 553h1v1h-1zM380 563h1v1h-1zM380 574h1v1h-1zM380 585h1v1h-1zM380 596h1v1h-1zM380 607h1v1h-1zM391 3h1v1h-1zM391 14h1v1h-1zM391 24h1v1h-1zM391 35h1v1h-1zM391 46h1v1h-1zM391 57h1v1h-1zM391 68h1v1h-1zM391 78h1v1h-1zM391 89h1v1h-1zM391 100h1v1h-1zM391 111h1v1h-1zM391 122h1v1h-1zM391 132h1v1h-1zM391 143h1v1h-1zM391 154h1v1h-1zM391 165h1v1h-1zM391 176h1v1h-1zM391 186h1v1h-1zM391 197h1v1h-1zM391 208h1v1h-1zM391 219h1v1h-1zM391 230h1v1h-1zM391 240h1v1h-1zM391 250h1v1h-1zM391 261h1v1h-1zM391 272h1v1h-1zM391 283h1v1h-1zM391 293h1v1h-1zM391 304h1v1h-1zM391 315h1v1h-1zM391 326h1v1h-1zM391 337h1v1h-1zM391 347h1v1h-1zM391 358h1v1h-1zM391 369h1v1h-1zM391 380h1v1h-1zM391 391h1v1h-1zM391 401h1v1h-1zM391 412h1v1h-1zM391 423h1v1h-1zM391 434h1v1h-1zM391 445h1v1h-1zM391 455h1v1h-1zM391 466h1v1h-1zM391 477h1v1h-1zM391 488h1v1h-1zM391 499h1v1h-1zM391 509h1v1h-1zM391 520h1v1h-1zM391 531h1v1h-1zM391 542h1v1h-1zM391 553h1v1h-1zM391 563h1v1h-1zM391 574h1v1h-1zM391 585h1v1h-1zM391 596h1v1h-1zM391 607h1v1h-1zM402 3h1v1h-1zM402 14h1v1h-1zM402 24h1v1h-1zM402 35h1v1h-1zM402 46h1v1h-1zM402 57h1v1h-1zM402 68h1v1h-1zM402 78h1v1h-1zM402 89h1v1h-1zM402 100h1v1h-1zM402 111h1v1h-1zM402 122h1v1h-1zM402 132h1v1h-1zM402 143h1v1h-1zM402 154h1v1h-1zM402 165h1v1h-1zM402 176h1v1h-1zM402 186h1v1h-1zM402 197h1v1h-1zM402 208h1v1h-1zM402 219h1v1h-1zM402 230h1v1h-1zM402 240h1v1h-1zM402 250h1v1h-1zM402 261h1v1h-1zM402 272h1v1h-1zM402 283h1v1h-1zM402 293h1v1h-1zM402 304h1v1h-1zM402 315h1v1h-1zM402 326h1v1h-1zM402 337h1v1h-1zM402 347h1v1h-1zM402 358h1v1h-1zM402 369h1v1h-1zM402 380h1v1h-1zM402 391h1v1h-1zM402 401h1v1h-1zM402 412h1v1h-1zM402 423h1v1h-1zM402 434h1v1h-1zM402 445h1v1h-1zM402 455h1v1h-1zM402 466h1v1h-1zM402 477h1v1h-1zM402 488h1v1h-1zM402 499h1v1h-1zM402 509h1v1h-1zM402 520h1v1h-1zM402 531h1v1h-1zM402 542h1v1h-1zM402 553h1v1h-1zM402 563h1v1h-1zM402 574h1v1h-1zM402 585h1v1h-1zM402 596h1v1h-1zM402 607h1v1h-1zM413 3h1v1h-1zM413 14h1v1h-1zM413 24h1v1h-1zM413 35h1v1h-1zM413 46h1v1h-1zM413 57h1v1h-1zM413 68h1v1h-1zM413 78h1v1h-1zM413 89h1v1h-1zM413 100h1v1h-1zM413 111h1v1h-1zM413 122h1v1h-1zM413 132h1v1h-1zM413 143h1v1h-1zM413 154h1v1h-1zM413 165h1v1h-1zM413 176h1v1h-1zM413 186h1v1h-1zM413 197h1v1h-1zM413 208h1v1h-1zM413 219h1v1h-1zM413 230h1v1h-1zM413 240h1v1h-1zM413 250h1v1h-1zM413 261h1v1h-1zM413 272h1v1h-1zM413 283h1v1h-1zM413 293h1v1h-1zM413 304h1v1h-1zM413 315h1v1h-1zM413 326h1v1h-1zM413 337h1v1h-1zM413 347h1v1h-1zM413 358h1v1h-1zM413 369h1v1h-1zM413 380h1v1h-1zM413 391h1v1h-1zM413 401h1v1h-1zM413 412h1v1h-1zM413 423h1v1h-1zM413 434h1v1h-1zM413 445h1v1h-1zM413 455h1v1h-1zM413 466h1v1h-1zM413 477h1v1h-1zM413 488h1v1h-1zM413 499h1v1h-1zM413 509h1v1h-1zM413 520h1v1h-1zM413 531h1v1h-1zM413 542h1v1h-1zM413 553h1v1h-1zM413 563h1v1h-1zM413 574h1v1h-1zM413 585h1v1h-1zM413 596h1v1h-1zM413 607h1v1h-1zM423 3h1v1h-1zM423 14h1v1h-1zM423 24h1v1h-1zM423 35h1v1h-1zM423 46h1v1h-1zM423 57h1v1h-1zM423 68h1v1h-1zM423 78h1v1h-1zM423 89h1v1h-1zM423 100h1v1h-1zM423 111h1v1h-1zM423 122h1v1h-1zM423 132h1v1h-1zM423 143h1v1h-1zM423 154h1v1h-1zM423 165h1v1h-1zM423 176h1v1h-1zM423 186h1v1h-1zM423 197h1v1h-1zM423 208h1v1h-1zM423 219h1v1h-1zM423 230h1v1h-1zM423 240h1v1h-1zM423 250h1v1h-1zM423 261h1v1h-1zM423 272h1v1h-1zM423 283h1v1h-1zM423 293h1v1h-1zM423 304h1v1h-1zM423 315h1v1h-1zM423 326h1v1h-1zM423 337h1v1h-1zM423 347h1v1h-1zM423 358h1v1h-1zM423 369h1v1h-1zM423 380h1v1h-1zM423 391h1v1h-1zM423 401h1v1h-1zM423 412h1v1h-1zM423 423h1v1h-1zM423 434h1v1h-1zM423 445h1v1h-1zM423 455h1v1h-1zM423 466h1v1h-1zM423 477h1v1h-1zM423 488h1v1h-1zM423 499h1v1h-1zM423 509h1v1h-1zM423 520h1v1h-1zM423 531h1v1h-1zM423 542h1v1h-1zM423 553h1v1h-1zM423 563h1v1h-1zM423 574h1v1h-1zM423 585h1v1h-1zM423 596h1v1h-1zM423 607h1v1h-1zM434 3h1v1h-1zM434 14h1v1h-1zM434 24h1v1h-1zM434 35h1v1h-1zM434 46h1v1h-1zM434 57h1v1h-1zM434 68h1v1h-1zM434 78h1v1h-1zM434 89h1v1h-1zM434 100h1v1h-1zM434 111h1v1h-1zM434 122h1v1h-1zM434 132h1v1h-1zM434 143h1v1h-1zM434 154h1v1h-1zM434 165h1v1h-1zM434 176h1v1h-1zM434 186h1v1h-1zM434 197h1v1h-1zM434 208h1v1h-1zM434 219h1v1h-1zM434 230h1v1h-1zM434 240h1v1h-1zM434 250h1v1h-1zM434 261h1v1h-1zM434 272h1v1h-1zM434 283h1v1h-1zM434 293h1v1h-1zM434 304h1v1h-1zM434 315h1v1h-1zM434 326h1v1h-1zM434 337h1v1h-1zM434 347h1v1h-1zM434 358h1v1h-1zM434 369h1v1h-1zM434 380h1v1h-1zM434 391h1v1h-1zM434 401h1v1h-1zM434 412h1v1h-1zM434 423h1v1h-1zM434 434h1v1h-1zM434 445h1v1h-1zM434 455h1v1h-1zM434 466h1v1h-1zM434 477h1v1h-1zM434 488h1v1h-1zM434 499h1v1h-1zM434 509h1v1h-1zM434 520h1v1h-1zM434 531h1v1h-1zM434 542h1v1h-1zM434 553h1v1h-1zM434 563h1v1h-1zM434 574h1v1h-1zM434 585h1v1h-1zM434 596h1v1h-1zM434 607h1v1h-1zM445 3h1v1h-1zM445 14h1v1h-1zM445 24h1v1h-1zM445 35h1v1h-1zM445 46h1v1h-1zM445 57h1v1h-1zM445 68h1v1h-1zM445 78h1v1h-1zM445 89h1v1h-1zM445 100h1v1h-1zM445 111h1v1h-1zM445 122h1v1h-1zM445 132h1v1h-1zM445 143h1v1h-1zM445 154h1v1h-1zM445 165h1v1h-1zM445 176h1v1h-1zM445 186h1v1h-1zM445 197h1v1h-1zM445 208h1v1h-1zM445 219h1v1h-1zM445 230h1v1h-1zM445 240h1v1h-1zM445 250h1v1h-1zM445 261h1v1h-1zM445 272h1v1h-1zM445 283h1v1h-1zM445 293h1v1h-1zM445 304h1v1h-1zM445 315h1v1h-1zM445 326h1v1h-1zM445 337h1v1h-1zM445 347h1v1h-1zM445 358h1v1h-1zM445 369h1v1h-1zM445 380h1v1h-1zM445 391h1v1h-1zM445 401h1v1h-1zM445 412h1v1h-1zM445 423h1v1h-1zM445 434h1v1h-1zM445 445h1v1h-1zM445 455h1v1h-1zM445 466h1v1h-1zM445 477h1v1h-1zM445 488h1v1h-1zM445 499h1v1h-1zM445 509h1v1h-1zM445 520h1v1h-1zM445 531h1v1h-1zM445 542h1v1h-1zM445 553h1v1h-1zM445 563h1v1h-1zM445 574h1v1h-1zM445 585h1v1h-1zM445 596h1v1h-1zM445 607h1v1h-1zM456 3h1v1h-1zM456 14h1v1h-1zM456 24h1v1h-1zM456 35h1v1h-1zM456 46h1v1h-1zM456 57h1v1h-1zM456 68h1v1h-1zM456 78h1v1h-1zM456 89h1v1h-1zM456 100h1v1h-1zM456 111h1v1h-1zM456 122h1v1h-1zM456 132h1v1h-1zM456 143h1v1h-1zM456 154h1v1h-1zM456 165h1v1h-1zM456 176h1v1h-1zM456 186h1v1h-1zM456 197h1v1h-1zM456 208h1v1h-1zM456 219h1v1h-1zM456 230h1v1h-1zM456 240h1v1h-1zM456 250h1v1h-1zM456 261h1v1h-1zM456 272h1v1h-1zM456 283h1v1h-1zM456 293h1v1h-1zM456 304h1v1h-1zM456 315h1v1h-1zM456 326h1v1h-1zM456 337h1v1h-1zM456 347h1v1h-1zM456 358h1v1h-1zM456 369h1v1h-1zM456 380h1v1h-1zM456 391h1v1h-1zM456 401h1v1h-1zM456 412h1v1h-1zM456 423h1v1h-1zM456 434h1v1h-1zM456 445h1v1h-1zM456 455h1v1h-1zM456 466h1v1h-1zM456 477h1v1h-1zM456 488h1v1h-1zM456 499h1v1h-1zM456 509h1v1h-1zM456 520h1v1h-1zM456 531h1v1h-1zM456 542h1v1h-1zM456 553h1v1h-1zM456 563h1v1h-1zM456 574h1v1h-1zM456 585h1v1h-1zM456 596h1v1h-1zM456 607h1v1h-1zM467 3h1v1h-1zM467 14h1v1h-1zM467 24h1v1h-1zM467 35h1v1h-1zM467 46h1v1h-1zM467 57h1v1h-1zM467 68h1v1h-1zM467 78h1v1h-1zM467 89h1v1h-1zM467 100h1v1h-1zM467 111h1v1h-1zM467 122h1v1h-1zM467 132h1v1h-1zM467 143h1v1h-1zM467 154h1v1h-1zM467 165h1v1h-1zM467 176h1v1h-1zM467 186h1v1h-1zM467 197h1v1h-1zM467 208h1v1h-1zM467 219h1v1h-1zM467 230h1v1h-1zM467 240h1v1h-1zM467 250h1v1h-1zM467 261h1v1h-1zM467 272h1v1h-1zM467 283h1v1h-1zM467 293h1v1h-1zM467 304h1v1h-1zM467 315h1v1h-1zM467 326h1v1h-1zM467 337h1v1h-1zM467 347h1v1h-1zM467 358h1v1h-1zM467 369h1v1h-1zM467 380h1v1h-1zM467 391h1v1h-1zM467 401h1v1h-1zM467 412h1v1h-1zM467 423h1v1h-1zM467 434h1v1h-1zM467 445h1v1h-1zM467 455h1v1h-1zM467 466h1v1h-1zM467 477h1v1h-1zM467 488h1v1h-1zM467 499h1v1h-1zM467 509h1v1h-1zM467 520h1v1h-1zM467 531h1v1h-1zM467 542h1v1h-1zM467 553h1v1h-1zM467 563h1v1h-1zM467 574h1v1h-1zM467 585h1v1h-1zM467 596h1v1h-1zM467 607h1v1h-1zM477 3h1v1h-1zM477 14h1v1h-1zM477 24h1v1h-1zM477 35h1v1h-1zM477 46h1v1h-1zM477 57h1v1h-1zM477 68h1v1h-1zM477 78h1v1h-1zM477 89h1v1h-1zM477 100h1v1h-1zM477 111h1v1h-1zM477 122h1v1h-1zM477 132h1v1h-1zM477 143h1v1h-1zM477 154h1v1h-1zM477 165h1v1h-1zM477 176h1v1h-1zM477 186h1v1h-1zM477 197h1v1h-1zM477 208h1v1h-1zM477 219h1v1h-1zM477 230h1v1h-1zM477 240h1v1h-1zM477 250h1v1h-1zM477 261h1v1h-1zM477 272h1v1h-1zM477 283h1v1h-1zM477 293h1v1h-1zM477 304h1v1h-1zM477 315h1v1h-1zM477 326h1v1h-1zM477 337h1v1h-1zM477 347h1v1h-1zM477 358h1v1h-1zM477 369h1v1h-1zM477 380h1v1h-1zM477 391h1v1h-1zM477 401h1v1h-1zM477 412h1v1h-1zM477 423h1v1h-1zM477 434h1v1h-1zM477 445h1v1h-1zM477 455h1v1h-1zM477 466h1v1h-1zM477 477h1v1h-1zM477 488h1v1h-1zM477 499h1v1h-1zM477 509h1v1h-1zM477 520h1v1h-1zM477 531h1v1h-1zM477 542h1v1h-1zM477 553h1v1h-1zM477 563h1v1h-1zM477 574h1v1h-1zM477 585h1v1h-1zM477 596h1v1h-1zM477 607h1v1h-1zM488 3h1v1h-1zM488 14h1v1h-1zM488 24h1v1h-1zM488 35h1v1h-1zM488 46h1v1h-1zM488 57h1v1h-1zM488 68h1v1h-1zM488 78h1v1h-1zM488 89h1v1h-1zM488 100h1v1h-1zM488 111h1v1h-1zM488 122h1v1h-1zM488 132h1v1h-1zM488 143h1v1h-1zM488 154h1v1h-1zM488 165h1v1h-1zM488 176h1v1h-1zM488 186h1v1h-1zM488 197h1v1h-1zM488 208h1v1h-1zM488 219h1v1h-1zM488 230h1v1h-1zM488 240h1v1h-1zM488 250h1v1h-1zM488 261h1v1h-1zM488 272h1v1h-1zM488 283h1v1h-1zM488 293h1v1h-1zM488 304h1v1h-1zM488 315h1v1h-1zM488 326h1v1h-1zM488 337h1v1h-1zM488 347h1v1h-1zM488 358h1v1h-1zM488 369h1v1h-1zM488 380h1v1h-1zM488 391h1v1h-1zM488 401h1v1h-1zM488 412h1v1h-1zM488 423h1v1h-1zM488 434h1v1h-1zM488 445h1v1h-1zM488 455h1v1h-1zM488 466h1v1h-1zM488 477h1v1h-1zM488 488h1v1h-1zM488 499h1v1h-1zM488 509h1v1h-1zM488 520h1v1h-1zM488 531h1v1h-1zM488 542h1v1h-1zM488 553h1v1h-1zM488 563h1v1h-1zM488 574h1v1h-1zM488 585h1v1h-1zM488 596h1v1h-1zM488 607h1v1h-1zM499 3h1v1h-1zM499 14h1v1h-1zM499 24h1v1h-1zM499 35h1v1h-1zM499 46h1v1h-1zM499 57h1v1h-1zM499 68h1v1h-1zM499 78h1v1h-1zM499 89h1v1h-1zM499 100h1v1h-1zM499 111h1v1h-1zM499 122h1v1h-1zM499 132h1v1h-1zM499 143h1v1h-1zM499 154h1v1h-1zM499 165h1v1h-1zM499 176h1v1h-1zM499 186h1v1h-1zM499 197h1v1h-1zM499 208h1v1h-1zM499 219h1v1h-1zM499 230h1v1h-1zM499 240h1v1h-1zM499 250h1v1h-1zM499 261h1v1h-1zM499 272h1v1h-1zM499 283h1v1h-1zM499 293h1v1h-1zM499 304h1v1h-1zM499 315h1v1h-1zM499 326h1v1h-1zM499 337h1v1h-1zM499 347h1v1h-1zM499 358h1v1h-1zM499 369h1v1h-1zM499 380h1v1h-1zM499 391h1v1h-1zM499 401h1v1h-1zM499 412h1v1h-1zM499 423h1v1h-1zM499 434h1v1h-1zM499 445h1v1h-1zM499 455h1v1h-1zM499 466h1v1h-1zM499 477h1v1h-1zM499 488h1v1h-1zM499 499h1v1h-1zM499 509h1v1h-1zM499 520h1v1h-1zM499 531h1v1h-1zM499 542h1v1h-1zM499 553h1v1h-1zM499 563h1v1h-1zM499 574h1v1h-1zM499 585h1v1h-1zM499 596h1v1h-1zM499 607h1v1h-1zM510 3h1v1h-1zM510 14h1v1h-1zM510 24h1v1h-1zM510 35h1v1h-1zM510 46h1v1h-1zM510 57h1v1h-1zM510 68h1v1h-1zM510 78h1v1h-1zM510 89h1v1h-1zM510 100h1v1h-1zM510 111h1v1h-1zM510 122h1v1h-1zM510 132h1v1h-1zM510 143h1v1h-1zM510 154h1v1h-1zM510 165h1v1h-1zM510 176h1v1h-1zM510 186h1v1h-1zM510 197h1v1h-1zM510 208h1v1h-1zM510 219h1v1h-1zM510 230h1v1h-1zM510 240h1v1h-1zM510 250h1v1h-1zM510 261h1v1h-1zM510 272h1v1h-1zM510 283h1v1h-1zM510 293h1v1h-1zM510 304h1v1h-1zM510 315h1v1h-1zM510 326h1v1h-1zM510 337h1v1h-1zM510 347h1v1h-1zM510 358h1v1h-1zM510 369h1v1h-1zM510 380h1v1h-1zM510 391h1v1h-1zM510 401h1v1h-1zM510 412h1v1h-1zM510 423h1v1h-1zM510 434h1v1h-1zM510 445h1v1h-1zM510 455h1v1h-1zM510 466h1v1h-1zM510 477h1v1h-1zM510 488h1v1h-1zM510 499h1v1h-1zM510 509h1v1h-1zM510 520h1v1h-1zM510 531h1v1h-1zM510 542h1v1h-1zM510 553h1v1h-1zM510 563h1v1h-1zM510 574h1v1h-1zM510 585h1v1h-1zM510 596h1v1h-1zM510 607h1v1h-1zM521 3h1v1h-1zM521 14h1v1h-1zM521 24h1v1h-1zM521 35h1v1h-1zM521 46h1v1h-1zM521 57h1v1h-1zM521 68h1v1h-1zM521 78h1v1h-1zM521 89h1v1h-1zM521 100h1v1h-1zM521 111h1v1h-1zM521 122h1v1h-1zM521 132h1v1h-1zM521 143h1v1h-1zM521 154h1v1h-1zM521 165h1v1h-1zM521 176h1v1h-1zM521 186h1v1h-1zM521 197h1v1h-1zM521 208h1v1h-1zM521 219h1v1h-1zM521 230h1v1h-1zM521 240h1v1h-1zM521 250h1v1h-1zM521 261h1v1h-1zM521 272h1v1h-1zM521 283h1v1h-1zM521 293h1v1h-1zM521 304h1v1h-1zM521 315h1v1h-1zM521 326h1v1h-1zM521 337h1v1h-1zM521 347h1v1h-1zM521 358h1v1h-1zM521 369h1v1h-1zM521 380h1v1h-1zM521 391h1v1h-1zM521 401h1v1h-1zM521 412h1v1h-1zM521 423h1v1h-1zM521 434h1v1h-1zM521 445h1v1h-1zM521 455h1v1h-1zM521 466h1v1h-1zM521 477h1v1h-1zM521 488h1v1h-1zM521 499h1v1h-1zM521 509h1v1h-1zM521 520h1v1h-1zM521 531h1v1h-1zM521 542h1v1h-1zM521 553h1v1h-1zM521 563h1v1h-1zM521 574h1v1h-1zM521 585h1v1h-1zM521 596h1v1h-1zM521 607h1v1h-1zM531 3h1v1h-1zM531 14h1v1h-1zM531 24h1v1h-1zM531 35h1v1h-1zM531 46h1v1h-1zM531 57h1v1h-1zM531 68h1v1h-1zM531 78h1v1h-1zM531 89h1v1h-1zM531 100h1v1h-1zM531 111h1v1h-1zM531 122h1v1h-1zM531 132h1v1h-1zM531 143h1v1h-1zM531 154h1v1h-1zM531 165h1v1h-1zM531 176h1v1h-1zM531 186h1v1h-1zM531 197h1v1h-1zM531 208h1v1h-1zM531 219h1v1h-1zM531 230h1v1h-1zM531 240h1v1h-1zM531 250h1v1h-1zM531 261h1v1h-1zM531 272h1v1h-1zM531 283h1v1h-1zM531 293h1v1h-1zM531 304h1v1h-1zM531 315h1v1h-1zM531 326h1v1h-1zM531 337h1v1h-1zM531 347h1v1h-1zM531 358h1v1h-1zM531 369h1v1h-1zM531 380h1v1h-1zM531 391h1v1h-1zM531 401h1v1h-1zM531 412h1v1h-1zM531 423h1v1h-1zM531 434h1v1h-1zM531 445h1v1h-1zM531 455h1v1h-1zM531 466h1v1h-1zM531 477h1v1h-1zM531 488h1v1h-1zM531 499h1v1h-1zM531 509h1v1h-1zM531 520h1v1h-1zM531 531h1v1h-1zM531 542h1v1h-1zM531 553h1v1h-1zM531 563h1v1h-1zM531 574h1v1h-1zM531 585h1v1h-1zM531 596h1v1h-1zM531 607h1v1h-1zM542 3h1v1h-1zM542 14h1v1h-1zM542 24h1v1h-1zM542 35h1v1h-1zM542 46h1v1h-1zM542 57h1v1h-1zM542 68h1v1h-1zM542 78h1v1h-1zM542 89h1v1h-1zM542 100h1v1h-1zM542 111h1v1h-1zM542 122h1v1h-1zM542 132h1v1h-1zM542 143h1v1h-1zM542 154h1v1h-1zM542 165h1v1h-1zM542 176h1v1h-1zM542 186h1v1h-1zM542 197h1v1h-1zM542 208h1v1h-1zM542 219h1v1h-1zM542 230h1v1h-1zM542 240h1v1h-1zM542 250h1v1h-1zM542 261h1v1h-1zM542 272h1v1h-1zM542 283h1v1h-1zM542 293h1v1h-1zM542 304h1v1h-1zM542 315h1v1h-1zM542 326h1v1h-1zM542 337h1v1h-1zM542 347h1v1h-1zM542 358h1v1h-1zM542 369h1v1h-1zM542 380h1v1h-1zM542 391h1v1h-1zM542 401h1v1h-1zM542 412h1v1h-1zM542 423h1v1h-1zM542 434h1v1h-1zM542 445h1v1h-1zM542 455h1v1h-1zM542 466h1v1h-1zM542 477h1v1h-1zM542 488h1v1h-1zM542 499h1v1h-1zM542 509h1v1h-1zM542 520h1v1h-1zM542 531h1v1h-1zM542 542h1v1h-1zM542 553h1v1h-1zM542 563h1v1h-1zM542 574h1v1h-1zM542 585h1v1h-1zM542 596h1v1h-1zM542 607h1v1h-1zM553 3h1v1h-1zM553 14h1v1h-1zM553 24h1v1h-1zM553 35h1v1h-1zM553 46h1v1h-1zM553 57h1v1h-1zM553 68h1v1h-1zM553 78h1v1h-1zM553 89h1v1h-1zM553 100h1v1h-1zM553 111h1v1h-1zM553 122h1v1h-1zM553 132h1v1h-1zM553 143h1v1h-1zM553 154h1v1h-1zM553 165h1v1h-1zM553 176h1v1h-1zM553 186h1v1h-1zM553 197h1v1h-1zM553 208h1v1h-1zM553 219h1v1h-1zM553 230h1v1h-1zM553 240h1v1h-1zM553 250h1v1h-1zM553 261h1v1h-1zM553 272h1v1h-1zM553 283h1v1h-1zM553 293h1v1h-1zM553 304h1v1h-1zM553 315h1v1h-1zM553 326h1v1h-1zM553 337h1v1h-1zM553 347h1v1h-1zM553 358h1v1h-1zM553 369h1v1h-1zM553 380h1v1h-1zM553 391h1v1h-1zM553 401h1v1h-1zM553 412h1v1h-1zM553 423h1v1h-1zM553 434h1v1h-1zM553 445h1v1h-1zM553 455h1v1h-1zM553 466h1v1h-1zM553 477h1v1h-1zM553 488h1v1h-1zM553 499h1v1h-1zM553 509h1v1h-1zM553 520h1v1h-1zM553 531h1v1h-1zM553 542h1v1h-1zM553 553h1v1h-1zM553 563h1v1h-1zM553 574h1v1h-1zM553 585h1v1h-1zM553 596h1v1h-1zM553 607h1v1h-1zM564 3h1v1h-1zM564 14h1v1h-1zM564 24h1v1h-1zM564 35h1v1h-1zM564 46h1v1h-1zM564 57h1v1h-1zM564 68h1v1h-1zM564 78h1v1h-1zM564 89h1v1h-1zM564 100h1v1h-1zM564 111h1v1h-1zM564 122h1v1h-1zM564 132h1v1h-1zM564 143h1v1h-1zM564 154h1v1h-1zM564 165h1v1h-1zM564 176h1v1h-1zM564 186h1v1h-1zM564 197h1v1h-1zM564 208h1v1h-1zM564 219h1v1h-1zM564 230h1v1h-1zM564 240h1v1h-1zM564 250h1v1h-1zM564 261h1v1h-1zM564 272h1v1h-1zM564 283h1v1h-1zM564 293h1v1h-1zM564 304h1v1h-1zM564 315h1v1h-1zM564 326h1v1h-1zM564 337h1v1h-1zM564 347h1v1h-1zM564 358h1v1h-1zM564 369h1v1h-1zM564 380h1v1h-1zM564 391h1v1h-1zM564 401h1v1h-1zM564 412h1v1h-1zM564 423h1v1h-1zM564 434h1v1h-1zM564 445h1v1h-1zM564 455h1v1h-1zM564 466h1v1h-1zM564 477h1v1h-1zM564 488h1v1h-1zM564 499h1v1h-1zM564 509h1v1h-1zM564 520h1v1h-1zM564 531h1v1h-1zM564 542h1v1h-1zM564 553h1v1h-1zM564 563h1v1h-1zM564 574h1v1h-1zM564 585h1v1h-1zM564 596h1v1h-1zM564 607h1v1h-1zM575 3h1v1h-1zM575 14h1v1h-1zM575 24h1v1h-1zM575 35h1v1h-1zM575 46h1v1h-1zM575 57h1v1h-1zM575 68h1v1h-1zM575 78h1v1h-1zM575 89h1v1h-1zM575 100h1v1h-1zM575 111h1v1h-1zM575 122h1v1h-1zM575 132h1v1h-1zM575 143h1v1h-1zM575 154h1v1h-1zM575 165h1v1h-1zM575 176h1v1h-1zM575 186h1v1h-1zM575 197h1v1h-1zM575 208h1v1h-1zM575 219h1v1h-1zM575 230h1v1h-1zM575 240h1v1h-1zM575 250h1v1h-1zM575 261h1v1h-1zM575 272h1v1h-1zM575 283h1v1h-1zM575 293h1v1h-1zM575 304h1v1h-1zM575 315h1v1h-1zM575 326h1v1h-1zM575 337h1v1h-1zM575 347h1v1h-1zM575 358h1v1h-1zM575 369h1v1h-1zM575 380h1v1h-1zM575 391h1v1h-1zM575 401h1v1h-1zM575 412h1v1h-1zM575 423h1v1h-1zM575 434h1v1h-1zM575 445h1v1h-1zM575 455h1v1h-1zM575 466h1v1h-1zM575 477h1v1h-1zM575 488h1v1h-1zM575 499h1v1h-1zM575 509h1v1h-1zM575 520h1v1h-1zM575 531h1v1h-1zM575 542h1v1h-1zM575 553h1v1h-1zM575 563h1v1h-1zM575 574h1v1h-1zM575 585h1v1h-1zM575 596h1v1h-1zM575 607h1v1h-1zM585 3h1v1h-1zM585 14h1v1h-1zM585 24h1v1h-1zM585 35h1v1h-1zM585 46h1v1h-1zM585 57h1v1h-1zM585 68h1v1h-1zM585 78h1v1h-1zM585 89h1v1h-1zM585 100h1v1h-1zM585 111h1v1h-1zM585 122h1v1h-1zM585 132h1v1h-1zM585 143h1v1h-1zM585 154h1v1h-1zM585 165h1v1h-1zM585 176h1v1h-1zM585 186h1v1h-1zM585 197h1v1h-1zM585 208h1v1h-1zM585 219h1v1h-1zM585 230h1v1h-1zM585 240h1v1h-1zM585 250h1v1h-1zM585 261h1v1h-1zM585 272h1v1h-1zM585 283h1v1h-1zM585 293h1v1h-1zM585 304h1v1h-1zM585 315h1v1h-1zM585 326h1v1h-1zM585 337h1v1h-1zM585 347h1v1h-1zM585 358h1v1h-1zM585 369h1v1h-1zM585 380h1v1h-1zM585 391h1v1h-1zM585 401h1v1h-1zM585 412h1v1h-1zM585 423h1v1h-1zM585 434h1v1h-1zM585 445h1v1h-1zM585 455h1v1h-1zM585 466h1v1h-1zM585 477h1v1h-1zM585 488h1v1h-1zM585 499h1v1h-1zM585 509h1v1h-1zM585 520h1v1h-1zM585 531h1v1h-1zM585 542h1v1h-1zM585 553h1v1h-1zM585 563h1v1h-1zM585 574h1v1h-1zM585 585h1v1h-1zM585 596h1v1h-1zM585 607h1v1h-1zM596 3h1v1h-1zM596 14h1v1h-1zM596 24h1v1h-1zM596 35h1v1h-1zM596 46h1v1h-1zM596 57h1v1h-1zM596 68h1v1h-1zM596 78h1v1h-1zM596 89h1v1h-1zM596 100h1v1h-1zM596 111h1v1h-1zM596 122h1v1h-1zM596 132h1v1h-1zM596 143h1v1h-1zM596 154h1v1h-1zM596 165h1v1h-1zM596 176h1v1h-1zM596 186h1v1h-1zM596 197h1v1h-1zM596 208h1v1h-1zM596 219h1v1h-1zM596 230h1v1h-1zM596 240h1v1h-1zM596 250h1v1h-1zM596 261h1v1h-1zM596 272h1v1h-1zM596 283h1v1h-1zM596 293h1v1h-1zM596 304h1v1h-1zM596 315h1v1h-1zM596 326h1v1h-1zM596 337h1v1h-1zM596 347h1v1h-1zM596 358h1v1h-1zM596 369h1v1h-1zM596 380h1v1h-1zM596 391h1v1h-1zM596 401h1v1h-1zM596 412h1v1h-1zM596 423h1v1h-1zM596 434h1v1h-1zM596 445h1v1h-1zM596 455h1v1h-1zM596 466h1v1h-1zM596 477h1v1h-1zM596 488h1v1h-1zM596 499h1v1h-1zM596 509h1v1h-1zM596 520h1v1h-1zM596 531h1v1h-1zM596 542h1v1h-1zM596 553h1v1h-1zM596 563h1v1h-1zM596 574h1v1h-1zM596 585h1v1h-1zM596 596h1v1h-1zM596 607h1v1h-1zM607 3h1v1h-1zM607 14h1v1h-1zM607 24h1v1h-1zM607 35h1v1h-1zM607 46h1v1h-1zM607 57h1v1h-1zM607 68h1v1h-1zM607 78h1v1h-1zM607 89h1v1h-1zM607 100h1v1h-1zM607 111h1v1h-1zM607 122h1v1h-1zM607 132h1v1h-1zM607 143h1v1h-1zM607 154h1v1h-1zM607 165h1v1h-1zM607 176h1v1h-1zM607 186h1v1h-1zM607 197h1v1h-1zM607 208h1v1h-1zM607 219h1v1h-1zM607 230h1v1h-1zM607 240h1v1h-1zM607 250h1v1h-1zM607 261h1v1h-1zM607 272h1v1h-1zM607 283h1v1h-1zM607 293h1v1h-1zM607 304h1v1h-1zM607 315h1v1h-1zM607 326h1v1h-1zM607 337h1v1h-1zM607 347h1v1h-1zM607 358h1v1h-1zM607 369h1v1h-1zM607 380h1v1h-1zM607 391h1v1h-1zM607 401h1v1h-1zM607 412h1v1h-1zM607 423h1v1h-1zM607 434h1v1h-1zM607 445h1v1h-1zM607 455h1v1h-1zM607 466h1v1h-1zM607 477h1v1h-1zM607 488h1v1h-1zM607 499h1v1h-1zM607 509h1v1h-1zM607 520h1v1h-1zM607 531h1v1h-1zM607 542h1v1h-1zM607 553h1v1h-1zM607 563h1v1h-1zM607 574h1v1h-1zM607 585h1v1h-1zM607 596h1v1h-1zM607 607h1v1h-1zM618 3h1v1h-1zM618 14h1v1h-1zM618 24h1v1h-1zM618 35h1v1h-1zM618 46h1v1h-1zM618 57h1v1h-1zM618 68h1v1h-1zM618 78h1v1h-1zM618 89h1v1h-1zM618 100h1v1h-1zM618 111h1v1h-1zM618 122h1v1h-1zM618 132h1v1h-1zM618 143h1v1h-1zM618 154h1v1h-1zM618 165h1v1h-1zM618 176h1v1h-1zM618 186h1v1h-1zM618 197h1v1h-1zM618 208h1v1h-1zM618 219h1v1h-1zM618 230h1v1h-1zM618 240h1v1h-1zM618 250h1v1h-1zM618 261h1v1h-1zM618 272h1v1h-1zM618 283h1v1h-1zM618 293h1v1h-1zM618 304h1v1h-1zM618 315h1v1h-1zM618 326h1v1h-1zM618 337h1v1h-1zM618 347h1v1h-1zM618 358h1v1h-1zM618 369h1v1h-1zM618 380h1v1h-1zM618 391h1v1h-1zM618 401h1v1h-1zM618 412h1v1h-1zM618 423h1v1h-1zM618 434h1v1h-1zM618 445h1v1h-1zM618 455h1v1h-1zM618 466h1v1h-1zM618 477h1v1h-1zM618 488h1v1h-1zM618 499h1v1h-1zM618 509h1v1h-1zM618 520h1v1h-1zM618 531h1v1h-1zM618 542h1v1h-1zM618 553h1v1h-1zM618 563h1v1h-1zM618 574h1v1h-1zM618 585h1v1h-1zM618 596h1v1h-1zM618 607h1v1h-1zM629 3h1v1h-1zM629 14h1v1h-1zM629 24h1v1h-1zM629 35h1v1h-1zM629 46h1v1h-1zM629 57h1v1h-1zM629 68h1v1h-1zM629 78h1v1h-1zM629 89h1v1h-1zM629 100h1v1h-1zM629 111h1v1h-1zM629 122h1v1h-1zM629 132h1v1h-1zM629 143h1v1h-1zM629 154h1v1h-1zM629 165h1v1h-1zM629 176h1v1h-1zM629 186h1v1h-1zM629 197h1v1h-1zM629 208h1v1h-1zM629 219h1v1h-1zM629 230h1v1h-1zM629 240h1v1h-1zM629 250h1v1h-1zM629 261h1v1h-1zM629 272h1v1h-1zM629 283h1v1h-1zM629 293h1v1h-1zM629 304h1v1h-1zM629 315h1v1h-1zM629 326h1v1h-1zM629 337h1v1h-1zM629 347h1v1h-1zM629 358h1v1h-1zM629 369h1v1h-1zM629 380h1v1h-1zM629 391h1v1h-1zM629 401h1v1h-1zM629 412h1v1h-1zM629 423h1v1h-1zM629 434h1v1h-1zM629 445h1v1h-1zM629 455h1v1h-1zM629 466h1v1h-1zM629 477h1v1h-1zM629 488h1v1h-1zM629 499h1v1h-1zM629 509h1v1h-1zM629 520h1v1h-1zM629 531h1v1h-1zM629 542h1v1h-1zM629 553h1v1h-1zM629 563h1v1h-1zM629 574h1v1h-1zM629 585h1v1h-1zM629 596h1v1h-1zM629 607h1v1h-1zM639 3h1v1h-1zM639 14h1v1h-1zM639 24h1v1h-1zM639 35h1v1h-1zM639 46h1v1h-1zM639 57h1v1h-1zM639 68h1v1h-1zM639 78h1v1h-1zM639 89h1v1h-1zM639 100h1v1h-1zM639 111h1v1h-1zM639 122h1v1h-1zM639 132h1v1h-1zM639 143h1v1h-1zM639 154h1v1h-1zM639 165h1v1h-1zM639 176h1v1h-1zM639 186h1v1h-1zM639 197h1v1h-1zM639 208h1v1h-1zM639 219h1v1h-1zM639 230h1v1h-1zM639 240h1v1h-1zM639 250h1v1h-1zM639 261h1v1h-1zM639 272h1v1h-1zM639 283h1v1h-1zM639 293h1v1h-1zM639 304h1v1h-1zM639 315h1v1h-1zM639 326h1v1h-1zM639 337h1v1h-1zM639 347h1v1h-1zM639 358h1v1h-1zM639 369h1v1h-1zM639 380h1v1h-1zM639 391h1v1h-1zM639 401h1v1h-1zM639 412h1v1h-1zM639 423h1v1h-1zM639 434h1v1h-1zM639 445h1v1h-1zM639 455h1v1h-1zM639 466h1v1h-1zM639 477h1v1h-1zM639 488h1v1h-1zM639 499h1v1h-1zM639 509h1v1h-1zM639 520h1v1h-1zM639 531h1v1h-1zM639 542h1v1h-1zM639 553h1v1h-1zM639 563h1v1h-1zM639 574h1v1h-1zM639 585h1v1h-1zM639 596h1v1h-1zM639 607h1v1h-1zM650 3h1v1h-1zM650 14h1v1h-1zM650 24h1v1h-1zM650 35h1v1h-1zM650 46h1v1h-1zM650 57h1v1h-1zM650 68h1v1h-1zM650 78h1v1h-1zM650 89h1v1h-1zM650 100h1v1h-1zM650 111h1v1h-1zM650 122h1v1h-1zM650 132h1v1h-1zM650 143h1v1h-1zM650 154h1v1h-1zM650 165h1v1h-1zM650 176h1v1h-1zM650 186h1v1h-1zM650 197h1v1h-1zM650 208h1v1h-1zM650 219h1v1h-1zM650 230h1v1h-1zM650 240h1v1h-1zM650 250h1v1h-1zM650 261h1v1h-1zM650 272h1v1h-1zM650 283h1v1h-1zM650 293h1v1h-1zM650 304h1v1h-1zM650 315h1v1h-1zM650 326h1v1h-1zM650 337h1v1h-1zM650 347h1v1h-1zM650 358h1v1h-1zM650 369h1v1h-1zM650 380h1v1h-1zM650 391h1v1h-1zM650 401h1v1h-1zM650 412h1v1h-1zM650 423h1v1h-1zM650 434h1v1h-1zM650 445h1v1h-1zM650 455h1v1h-1zM650 466h1v1h-1zM650 477h1v1h-1zM650 488h1v1h-1zM650 499h1v1h-1zM650 509h1v1h-1zM650 520h1v1h-1zM650 531h1v1h-1zM650 542h1v1h-1zM650 553h1v1h-1zM650 563h1v1h-1zM650 574h1v1h-1zM650 585h1v1h-1zM650 596h1v1h-1zM650 607h1v1h-1zM661 3h1v1h-1zM661 14h1v1h-1zM661 24h1v1h-1zM661 35h1v1h-1zM661 46h1v1h-1zM661 57h1v1h-1zM661 68h1v1h-1zM661 78h1v1h-1zM661 89h1v1h-1zM661 100h1v1h-1zM661 111h1v1h-1zM661 122h1v1h-1zM661 132h1v1h-1zM661 143h1v1h-1zM661 154h1v1h-1zM661 165h1v1h-1zM661 176h1v1h-1zM661 186h1v1h-1zM661 197h1v1h-1zM661 208h1v1h-1zM661 219h1v1h-1zM661 230h1v1h-1zM661 240h1v1h-1zM661 250h1v1h-1zM661 261h1v1h-1zM661 272h1v1h-1zM661 283h1v1h-1zM661 293h1v1h-1zM661 304h1v1h-1zM661 315h1v1h-1zM661 326h1v1h-1zM661 337h1v1h-1zM661 347h1v1h-1zM661 358h1v1h-1zM661 369h1v1h-1zM661 380h1v1h-1zM661 391h1v1h-1zM661 401h1v1h-1zM661 412h1v1h-1zM661 423h1v1h-1zM661 434h1v1h-1zM661 445h1v1h-1zM661 455h1v1h-1zM661 466h1v1h-1zM661 477h1v1h-1zM661 488h1v1h-1zM661 499h1v1h-1zM661 509h1v1h-1zM661 520h1v1h-1zM661 531h1v1h-1zM661 542h1v1h-1zM661 553h1v1h-1zM661 563h1v1h-1zM661 574h1v1h-1zM661 585h1v1h-1zM661 596h1v1h-1zM661 607h1v1h-1zM672 3h1v1h-1zM672 14h1v1h-1zM672 24h1v1h-1zM672 35h1v1h-1zM672 46h1v1h-1zM672 57h1v1h-1zM672 68h1v1h-1zM672 78h1v1h-1zM672 89h1v1h-1zM672 100h1v1h-1zM672 111h1v1h-1zM672 122h1v1h-1zM672 132h1v1h-1zM672 143h1v1h-1zM672 154h1v1h-1zM672 165h1v1h-1zM672 176h1v1h-1zM672 186h1v1h-1zM672 197h1v1h-1zM672 208h1v1h-1zM672 219h1v1h-1zM672 230h1v1h-1zM672 240h1v1h-1zM672 250h1v1h-1zM672 261h1v1h-1zM672 272h1v1h-1zM672 283h1v1h-1zM672 293h1v1h-1zM672 304h1v1h-1zM672 315h1v1h-1zM672 326h1v1h-1zM672 337h1v1h-1zM672 347h1v1h-1zM672 358h1v1h-1zM672 369h1v1h-1zM672 380h1v1h-1zM672 391h1v1h-1zM672 401h1v1h-1zM672 412h1v1h-1zM672 423h1v1h-1zM672 434h1v1h-1zM672 445h1v1h-1zM672 455h1v1h-1zM672 466h1v1h-1zM672 477h1v1h-1zM672 488h1v1h-1zM672 499h1v1h-1zM672 509h1v1h-1zM672 520h1v1h-1zM672 531h1v1h-1zM672 542h1v1h-1zM672 553h1v1h-1zM672 563h1v1h-1zM672 574h1v1h-1zM672 585h1v1h-1zM672 596h1v1h-1zM672 607h1v1h-1zM683 3h1v1h-1zM683 14h1v1h-1zM683 24h1v1h-1zM683 35h1v1h-1zM683 46h1v1h-1zM683 57h1v1h-1zM683 68h1v1h-1zM683 78h1v1h-1zM683 89h1v1h-1zM683 100h1v1h-1zM683 111h1v1h-1zM683 122h1v1h-1zM683 132h1v1h-1zM683 143h1v1h-1zM683 154h1v1h-1zM683 165h1v1h-1zM683 176h1v1h-1zM683 186h1v1h-1zM683 197h1v1h-1zM683 208h1v1h-1zM683 219h1v1h-1zM683 230h1v1h-1zM683 240h1v1h-1zM683 250h1v1h-1zM683 261h1v1h-1zM683 272h1v1h-1zM683 283h1v1h-1zM683 293h1v1h-1zM683 304h1v1h-1zM683 315h1v1h-1zM683 326h1v1h-1zM683 337h1v1h-1zM683 347h1v1h-1zM683 358h1v1h-1zM683 369h1v1h-1zM683 380h1v1h-1zM683 391h1v1h-1zM683 401h1v1h-1zM683 412h1v1h-1zM683 423h1v1h-1zM683 434h1v1h-1zM683 445h1v1h-1zM683 455h1v1h-1zM683 466h1v1h-1zM683 477h1v1h-1zM683 488h1v1h-1zM683 499h1v1h-1zM683 509h1v1h-1zM683 520h1v1h-1zM683 531h1v1h-1zM683 542h1v1h-1zM683 553h1v1h-1zM683 563h1v1h-1zM683 574h1v1h-1zM683 585h1v1h-1zM683 596h1v1h-1zM683 607h1v1h-1zM693 3h1v1h-1zM693 14h1v1h-1zM693 24h1v1h-1zM693 35h1v1h-1zM693 46h1v1h-1zM693 57h1v1h-1zM693 68h1v1h-1zM693 78h1v1h-1zM693 89h1v1h-1zM693 100h1v1h-1zM693 111h1v1h-1zM693 122h1v1h-1zM693 132h1v1h-1zM693 143h1v1h-1zM693 154h1v1h-1zM693 165h1v1h-1zM693 176h1v1h-1zM693 186h1v1h-1zM693 197h1v1h-1zM693 208h1v1h-1zM693 219h1v1h-1zM693 230h1v1h-1zM693 240h1v1h-1zM693 250h1v1h-1zM693 261h1v1h-1zM693 272h1v1h-1zM693 283h1v1h-1zM693 293h1v1h-1zM693 304h1v1h-1zM693 315h1v1h-1zM693 326h1v1h-1zM693 337h1v1h-1zM693 347h1v1h-1zM693 358h1v1h-1zM693 369h1v1h-1zM693 380h1v1h-1zM693 391h1v1h-1zM693 401h1v1h-1zM693 412h1v1h-1zM693 423h1v1h-1zM693 434h1v1h-1zM693 445h1v1h-1zM693 455h1v1h-1zM693 466h1v1h-1zM693 477h1v1h-1zM693 488h1v1h-1zM693 499h1v1h-1zM693 509h1v1h-1zM693 520h1v1h-1zM693 531h1v1h-1zM693 542h1v1h-1zM693 553h1v1h-1zM693 563h1v1h-1zM693 574h1v1h-1zM693 585h1v1h-1zM693 596h1v1h-1zM693 607h1v1h-1zM704 3h1v1h-1zM704 14h1v1h-1zM704 24h1v1h-1zM704 35h1v1h-1zM704 46h1v1h-1zM704 57h1v1h-1zM704 68h1v1h-1zM704 78h1v1h-1zM704 89h1v1h-1zM704 100h1v1h-1zM704 111h1v1h-1zM704 122h1v1h-1zM704 132h1v1h-1zM704 143h1v1h-1zM704 154h1v1h-1zM704 165h1v1h-1zM704 176h1v1h-1zM704 186h1v1h-1zM704 197h1v1h-1zM704 208h1v1h-1zM704 219h1v1h-1zM704 230h1v1h-1zM704 240h1v1h-1zM704 250h1v1h-1zM704 261h1v1h-1zM704 272h1v1h-1zM704 283h1v1h-1zM704 293h1v1h-1zM704 304h1v1h-1zM704 315h1v1h-1zM704 326h1v1h-1zM704 337h1v1h-1zM704 347h1v1h-1zM704 358h1v1h-1zM704 369h1v1h-1zM704 380h1v1h-1zM704 391h1v1h-1zM704 401h1v1h-1zM704 412h1v1h-1zM704 423h1v1h-1zM704 434h1v1h-1zM704 445h1v1h-1zM704 455h1v1h-1zM704 466h1v1h-1zM704 477h1v1h-1zM704 488h1v1h-1zM704 499h1v1h-1zM704 509h1v1h-1zM704 520h1v1h-1zM704 531h1v1h-1zM704 542h1v1h-1zM704 553h1v1h-1zM704 563h1v1h-1zM704 574h1v1h-1zM704 585h1v1h-1zM704 596h1v1h-1zM704 607h1v1h-1zM715 3h1v1h-1zM715 14h1v1h-1zM715 24h1v1h-1zM715 35h1v1h-1zM715 46h1v1h-1zM715 57h1v1h-1zM715 68h1v1h-1zM715 78h1v1h-1zM715 89h1v1h-1zM715 100h1v1h-1zM715 111h1v1h-1zM715 122h1v1h-1zM715 132h1v1h-1zM715 143h1v1h-1zM715 154h1v1h-1zM715 165h1v1h-1zM715 176h1v1h-1zM715 186h1v1h-1zM715 197h1v1h-1zM715 208h1v1h-1zM715 219h1v1h-1zM715 230h1v1h-1zM715 240h1v1h-1zM715 250h1v1h-1zM715 261h1v1h-1zM715 272h1v1h-1zM715 283h1v1h-1zM715 293h1v1h-1zM715 304h1v1h-1zM715 315h1v1h-1zM715 326h1v1h-1zM715 337h1v1h-1zM715 347h1v1h-1zM715 358h1v1h-1zM715 369h1v1h-1zM715 380h1v1h-1zM715 391h1v1h-1zM715 401h1v1h-1zM715 412h1v1h-1zM715 423h1v1h-1zM715 434h1v1h-1zM715 445h1v1h-1zM715 455h1v1h-1zM715 466h1v1h-1zM715 477h1v1h-1zM715 488h1v1h-1zM715 499h1v1h-1zM715 509h1v1h-1zM715 520h1v1h-1zM715 531h1v1h-1zM715 542h1v1h-1zM715 553h1v1h-1zM715 563h1v1h-1zM715 574h1v1h-1zM715 585h1v1h-1zM715 596h1v1h-1zM715 607h1v1h-1zM726 3h1v1h-1zM726 14h1v1h-1zM726 24h1v1h-1zM726 35h1v1h-1zM726 46h1v1h-1zM726 57h1v1h-1zM726 68h1v1h-1zM726 78h1v1h-1zM726 89h1v1h-1zM726 100h1v1h-1zM726 111h1v1h-1zM726 122h1v1h-1zM726 132h1v1h-1zM726 143h1v1h-1zM726 154h1v1h-1zM726 165h1v1h-1zM726 176h1v1h-1zM726 186h1v1h-1zM726 197h1v1h-1zM726 208h1v1h-1zM726 219h1v1h-1zM726 230h1v1h-1zM726 240h1v1h-1zM726 250h1v1h-1zM726 261h1v1h-1zM726 272h1v1h-1zM726 283h1v1h-1zM726 293h1v1h-1zM726 304h1v1h-1zM726 315h1v1h-1zM726 326h1v1h-1zM726 337h1v1h-1zM726 347h1v1h-1zM726 358h1v1h-1zM726 369h1v1h-1zM726 380h1v1h-1zM726 391h1v1h-1zM726 401h1v1h-1zM726 412h1v1h-1zM726 423h1v1h-1zM726 434h1v1h-1zM726 445h1v1h-1zM726 455h1v1h-1zM726 466h1v1h-1zM726 477h1v1h-1zM726 488h1v1h-1zM726 499h1v1h-1zM726 509h1v1h-1zM726 520h1v1h-1zM726 531h1v1h-1zM726 542h1v1h-1zM726 553h1v1h-1zM726 563h1v1h-1zM726 574h1v1h-1zM726 585h1v1h-1zM726 596h1v1h-1zM726 607h1v1h-1zM737 3h1v1h-1zM737 14h1v1h-1zM737 24h1v1h-1zM737 35h1v1h-1zM737 46h1v1h-1zM737 57h1v1h-1zM737 68h1v1h-1zM737 78h1v1h-1zM737 89h1v1h-1zM737 100h1v1h-1zM737 111h1v1h-1zM737 122h1v1h-1zM737 132h1v1h-1zM737 143h1v1h-1zM737 154h1v1h-1zM737 165h1v1h-1zM737 176h1v1h-1zM737 186h1v1h-1zM737 197h1v1h-1zM737 208h1v1h-1zM737 219h1v1h-1zM737 230h1v1h-1zM737 240h1v1h-1zM737 250h1v1h-1zM737 261h1v1h-1zM737 272h1v1h-1zM737 283h1v1h-1zM737 293h1v1h-1zM737 304h1v1h-1zM737 315h1v1h-1zM737 326h1v1h-1zM737 337h1v1h-1zM737 347h1v1h-1zM737 358h1v1h-1zM737 369h1v1h-1zM737 380h1v1h-1zM737 391h1v1h-1zM737 401h1v1h-1zM737 412h1v1h-1zM737 423h1v1h-1zM737 434h1v1h-1zM737 445h1v1h-1zM737 455h1v1h-1zM737 466h1v1h-1zM737 477h1v1h-1zM737 488h1v1h-1zM737 499h1v1h-1zM737 509h1v1h-1zM737 520h1v1h-1zM737 531h1v1h-1zM737 542h1v1h-1zM737 553h1v1h-1zM737 563h1v1h-1zM737 574h1v1h-1zM737 585h1v1h-1zM737 596h1v1h-1zM737 607h1v1h-1zM747 3h1v1h-1zM747 14h1v1h-1zM747 24h1v1h-1zM747 35h1v1h-1zM747 46h1v1h-1zM747 57h1v1h-1zM747 68h1v1h-1zM747 78h1v1h-1zM747 89h1v1h-1zM747 100h1v1h-1zM747 111h1v1h-1zM747 122h1v1h-1zM747 132h1v1h-1zM747 143h1v1h-1zM747 154h1v1h-1zM747 165h1v1h-1zM747 176h1v1h-1zM747 186h1v1h-1zM747 197h1v1h-1zM747 208h1v1h-1zM747 219h1v1h-1zM747 230h1v1h-1zM747 240h1v1h-1zM747 250h1v1h-1zM747 261h1v1h-1zM747 272h1v1h-1zM747 283h1v1h-1zM747 293h1v1h-1zM747 304h1v1h-1zM747 315h1v1h-1zM747 326h1v1h-1zM747 337h1v1h-1zM747 347h1v1h-1zM747 358h1v1h-1zM747 369h1v1h-1zM747 380h1v1h-1zM747 391h1v1h-1zM747 401h1v1h-1zM747 412h1v1h-1zM747 423h1v1h-1zM747 434h1v1h-1zM747 445h1v1h-1zM747 455h1v1h-1zM747 466h1v1h-1zM747 477h1v1h-1zM747 488h1v1h-1zM747 499h1v1h-1zM747 509h1v1h-1zM747 520h1v1h-1zM747 531h1v1h-1zM747 542h1v1h-1zM747 553h1v1h-1zM747 563h1v1h-1zM747 574h1v1h-1zM747 585h1v1h-1zM747 596h1v1h-1zM747 607h1v1h-1zM758 3h1v1h-1zM758 14h1v1h-1zM758 24h1v1h-1zM758 35h1v1h-1zM758 46h1v1h-1zM758 57h1v1h-1zM758 68h1v1h-1zM758 78h1v1h-1zM758 89h1v1h-1zM758 100h1v1h-1zM758 111h1v1h-1zM758 122h1v1h-1zM758 132h1v1h-1zM758 143h1v1h-1zM758 154h1v1h-1zM758 165h1v1h-1zM758 176h1v1h-1zM758 186h1v1h-1zM758 197h1v1h-1zM758 208h1v1h-1zM758 219h1v1h-1zM758 230h1v1h-1zM758 240h1v1h-1zM758 250h1v1h-1zM758 261h1v1h-1zM758 272h1v1h-1zM758 283h1v1h-1zM758 293h1v1h-1zM758 304h1v1h-1zM758 315h1v1h-1zM758 326h1v1h-1zM758 337h1v1h-1zM758 347h1v1h-1zM758 358h1v1h-1zM758 369h1v1h-1zM758 380h1v1h-1zM758 391h1v1h-1zM758 401h1v1h-1zM758 412h1v1h-1zM758 423h1v1h-1zM758 434h1v1h-1zM758 445h1v1h-1zM758 455h1v1h-1zM758 466h1v1h-1zM758 477h1v1h-1zM758 488h1v1h-1zM758 499h1v1h-1zM758 509h1v1h-1zM758 520h1v1h-1zM758 531h1v1h-1zM758 542h1v1h-1zM758 553h1v1h-1zM758 563h1v1h-1zM758 574h1v1h-1zM758 585h1v1h-1zM758 596h1v1h-1zM758 607h1v1h-1zM769 3h1v1h-1zM769 14h1v1h-1zM769 24h1v1h-1zM769 35h1v1h-1zM769 46h1v1h-1zM769 57h1v1h-1zM769 68h1v1h-1zM769 78h1v1h-1zM769 89h1v1h-1zM769 100h1v1h-1zM769 111h1v1h-1zM769 122h1v1h-1zM769 132h1v1h-1zM769 143h1v1h-1zM769 154h1v1h-1zM769 165h1v1h-1zM769 176h1v1h-1zM769 186h1v1h-1zM769 197h1v1h-1zM769 208h1v1h-1zM769 219h1v1h-1zM769 230h1v1h-1zM769 240h1v1h-1zM769 250h1v1h-1zM769 261h1v1h-1zM769 272h1v1h-1zM769 283h1v1h-1zM769 293h1v1h-1zM769 304h1v1h-1zM769 315h1v1h-1zM769 326h1v1h-1zM769 337h1v1h-1zM769 347h1v1h-1zM769 358h1v1h-1zM769 369h1v1h-1zM769 380h1v1h-1zM769 391h1v1h-1zM769 401h1v1h-1zM769 412h1v1h-1zM769 423h1v1h-1zM769 434h1v1h-1zM769 445h1v1h-1zM769 455h1v1h-1zM769 466h1v1h-1zM769 477h1v1h-1zM769 488h1v1h-1zM769 499h1v1h-1zM769 509h1v1h-1zM769 520h1v1h-1zM769 531h1v1h-1zM769 542h1v1h-1zM769 553h1v1h-1zM769 563h1v1h-1zM769 574h1v1h-1zM769 585h1v1h-1zM769 596h1v1h-1zM769 607h1v1h-1zM780 3h1v1h-1zM780 14h1v1h-1zM780 24h1v1h-1zM780 35h1v1h-1zM780 46h1v1h-1zM780 57h1v1h-1zM780 68h1v1h-1zM780 78h1v1h-1zM780 89h1v1h-1zM780 100h1v1h-1zM780 111h1v1h-1zM780 122h1v1h-1zM780 132h1v1h-1zM780 143h1v1h-1zM780 154h1v1h-1zM780 165h1v1h-1zM780 176h1v1h-1zM780 186h1v1h-1zM780 197h1v1h-1zM780 208h1v1h-1zM780 219h1v1h-1zM780 230h1v1h-1zM780 240h1v1h-1zM780 250h1v1h-1zM780 261h1v1h-1zM780 272h1v1h-1zM780 283h1v1h-1zM780 293h1v1h-1zM780 304h1v1h-1zM780 315h1v1h-1zM780 326h1v1h-1zM780 337h1v1h-1zM780 347h1v1h-1zM780 358h1v1h-1zM780 369h1v1h-1zM780 380h1v1h-1zM780 391h1v1h-1zM780 401h1v1h-1zM780 412h1v1h-1zM780 423h1v1h-1zM780 434h1v1h-1zM780 445h1v1h-1zM780 455h1v1h-1zM780 466h1v1h-1zM780 477h1v1h-1zM780 488h1v1h-1zM780 499h1v1h-1zM780 509h1v1h-1zM780 520h1v1h-1zM780 531h1v1h-1zM780 542h1v1h-1zM780 553h1v1h-1zM780 563h1v1h-1zM780 574h1v1h-1zM780 585h1v1h-1zM780 596h1v1h-1zM780 607h1v1h-1zM791 3h1v1h-1zM791 14h1v1h-1zM791 24h1v1h-1zM791 35h1v1h-1zM791 46h1v1h-1zM791 57h1v1h-1zM791 68h1v1h-1zM791 78h1v1h-1zM791 89h1v1h-1zM791 100h1v1h-1zM791 111h1v1h-1zM791 122h1v1h-1zM791 132h1v1h-1zM791 143h1v1h-1zM791 154h1v1h-1zM791 165h1v1h-1zM791 176h1v1h-1zM791 186h1v1h-1zM791 197h1v1h-1zM791 208h1v1h-1zM791 219h1v1h-1zM791 230h1v1h-1zM791 240h1v1h-1zM791 250h1v1h-1zM791 261h1v1h-1zM791 272h1v1h-1zM791 283h1v1h-1zM791 293h1v1h-1zM791 304h1v1h-1zM791 315h1v1h-1zM791 326h1v1h-1zM791 337h1v1h-1zM791 347h1v1h-1zM791 358h1v1h-1zM791 369h1v1h-1zM791 380h1v1h-1zM791 391h1v1h-1zM791 401h1v1h-1zM791 412h1v1h-1zM791 423h1v1h-1zM791 434h1v1h-1zM791 445h1v1h-1zM791 455h1v1h-1zM791 466h1v1h-1zM791 477h1v1h-1zM791 488h1v1h-1zM791 499h1v1h-1zM791 509h1v1h-1zM791 520h1v1h-1zM791 531h1v1h-1zM791 542h1v1h-1zM791 553h1v1h-1zM791 563h1v1h-1zM791 574h1v1h-1zM791 585h1v1h-1zM791 596h1v1h-1zM791 607h1v1h-1zM801 3h1v1h-1zM801 14h1v1h-1zM801 24h1v1h-1zM801 35h1v1h-1zM801 46h1v1h-1zM801 57h1v1h-1zM801 68h1v1h-1zM801 78h1v1h-1zM801 89h1v1h-1zM801 100h1v1h-1zM801 111h1v1h-1zM801 122h1v1h-1zM801 132h1v1h-1zM801 143h1v1h-1zM801 154h1v1h-1zM801 165h1v1h-1zM801 176h1v1h-1zM801 186h1v1h-1zM801 197h1v1h-1zM801 208h1v1h-1zM801 219h1v1h-1zM801 230h1v1h-1zM801 240h1v1h-1zM801 250h1v1h-1zM801 261h1v1h-1zM801 272h1v1h-1zM801 283h1v1h-1zM801 293h1v1h-1zM801 304h1v1h-1zM801 315h1v1h-1zM801 326h1v1h-1zM801 337h1v1h-1zM801 347h1v1h-1zM801 358h1v1h-1zM801 369h1v1h-1zM801 380h1v1h-1zM801 391h1v1h-1zM801 401h1v1h-1zM801 412h1v1h-1zM801 423h1v1h-1zM801 434h1v1h-1zM801 445h1v1h-1zM801 455h1v1h-1zM801 466h1v1h-1zM801 477h1v1h-1zM801 488h1v1h-1zM801 499h1v1h-1zM801 509h1v1h-1zM801 520h1v1h-1zM801 531h1v1h-1zM801 542h1v1h-1zM801 553h1v1h-1zM801 563h1v1h-1zM801 574h1v1h-1zM801 585h1v1h-1zM801 596h1v1h-1zM801 607h1v1h-1zM812 3h1v1h-1zM812 14h1v1h-1zM812 24h1v1h-1zM812 35h1v1h-1zM812 46h1v1h-1zM812 57h1v1h-1zM812 68h1v1h-1zM812 78h1v1h-1zM812 89h1v1h-1zM812 100h1v1h-1zM812 111h1v1h-1zM812 122h1v1h-1zM812 132h1v1h-1zM812 143h1v1h-1zM812 154h1v1h-1zM812 165h1v1h-1zM812 176h1v1h-1zM812 186h1v1h-1zM812 197h1v1h-1zM812 208h1v1h-1zM812 219h1v1h-1zM812 230h1v1h-1zM812 240h1v1h-1zM812 250h1v1h-1zM812 261h1v1h-1zM812 272h1v1h-1zM812 283h1v1h-1zM812 293h1v1h-1zM812 304h1v1h-1zM812 315h1v1h-1zM812 326h1v1h-1zM812 337h1v1h-1zM812 347h1v1h-1zM812 358h1v1h-1zM812 369h1v1h-1zM812 380h1v1h-1zM812 391h1v1h-1zM812 401h1v1h-1zM812 412h1v1h-1zM812 423h1v1h-1zM812 434h1v1h-1zM812 445h1v1h-1zM812 455h1v1h-1zM812 466h1v1h-1zM812 477h1v1h-1zM812 488h1v1h-1zM812 499h1v1h-1zM812 509h1v1h-1zM812 520h1v1h-1zM812 531h1v1h-1zM812 542h1v1h-1zM812 553h1v1h-1zM812 563h1v1h-1zM812 574h1v1h-1zM812 585h1v1h-1zM812 596h1v1h-1zM812 607h1v1h-1zM823 3h1v1h-1zM823 14h1v1h-1zM823 24h1v1h-1zM823 35h1v1h-1zM823 46h1v1h-1zM823 57h1v1h-1zM823 68h1v1h-1zM823 78h1v1h-1zM823 89h1v1h-1zM823 100h1v1h-1zM823 111h1v1h-1zM823 122h1v1h-1zM823 132h1v1h-1zM823 143h1v1h-1zM823 154h1v1h-1zM823 165h1v1h-1zM823 176h1v1h-1zM823 186h1v1h-1zM823 197h1v1h-1zM823 208h1v1h-1zM823 219h1v1h-1zM823 230h1v1h-1zM823 240h1v1h-1zM823 250h1v1h-1zM823 261h1v1h-1zM823 272h1v1h-1zM823 283h1v1h-1zM823 293h1v1h-1zM823 304h1v1h-1zM823 315h1v1h-1zM823 326h1v1h-1zM823 337h1v1h-1zM823 347h1v1h-1zM823 358h1v1h-1zM823 369h1v1h-1zM823 380h1v1h-1zM823 391h1v1h-1zM823 401h1v1h-1zM823 412h1v1h-1zM823 423h1v1h-1zM823 434h1v1h-1zM823 445h1v1h-1zM823 455h1v1h-1zM823 466h1v1h-1zM823 477h1v1h-1zM823 488h1v1h-1zM823 499h1v1h-1zM823 509h1v1h-1zM823 520h1v1h-1zM823 531h1v1h-1zM823 542h1v1h-1zM823 553h1v1h-1zM823 563h1v1h-1zM823 574h1v1h-1zM823 585h1v1h-1zM823 596h1v1h-1zM823 607h1v1h-1zM834 3h1v1h-1zM834 14h1v1h-1zM834 24h1v1h-1zM834 35h1v1h-1zM834 46h1v1h-1zM834 57h1v1h-1zM834 68h1v1h-1zM834 78h1v1h-1zM834 89h1v1h-1zM834 100h1v1h-1zM834 111h1v1h-1zM834 122h1v1h-1zM834 132h1v1h-1zM834 143h1v1h-1zM834 154h1v1h-1zM834 165h1v1h-1zM834 176h1v1h-1zM834 186h1v1h-1zM834 197h1v1h-1zM834 208h1v1h-1zM834 219h1v1h-1zM834 230h1v1h-1zM834 240h1v1h-1zM834 250h1v1h-1zM834 261h1v1h-1zM834 272h1v1h-1zM834 283h1v1h-1zM834 293h1v1h-1zM834 304h1v1h-1zM834 315h1v1h-1zM834 326h1v1h-1zM834 337h1v1h-1zM834 347h1v1h-1zM834 358h1v1h-1zM834 369h1v1h-1zM834 380h1v1h-1zM834 391h1v1h-1zM834 401h1v1h-1zM834 412h1v1h-1zM834 423h1v1h-1zM834 434h1v1h-1zM834 445h1v1h-1zM834 455h1v1h-1zM834 466h1v1h-1zM834 477h1v1h-1zM834 488h1v1h-1zM834 499h1v1h-1zM834 509h1v1h-1zM834 520h1v1h-1zM834 531h1v1h-1zM834 542h1v1h-1zM834 553h1v1h-1zM834 563h1v1h-1zM834 574h1v1h-1zM834 585h1v1h-1zM834 596h1v1h-1zM834 607h1v1h-1zM845 3h1v1h-1zM845 14h1v1h-1zM845 24h1v1h-1zM845 35h1v1h-1zM845 46h1v1h-1zM845 57h1v1h-1zM845 68h1v1h-1zM845 78h1v1h-1zM845 89h1v1h-1zM845 100h1v1h-1zM845 111h1v1h-1zM845 122h1v1h-1zM845 132h1v1h-1zM845 143h1v1h-1zM845 154h1v1h-1zM845 165h1v1h-1zM845 176h1v1h-1zM845 186h1v1h-1zM845 197h1v1h-1zM845 208h1v1h-1zM845 219h1v1h-1zM845 230h1v1h-1zM845 240h1v1h-1zM845 250h1v1h-1zM845 261h1v1h-1zM845 272h1v1h-1zM845 283h1v1h-1zM845 293h1v1h-1zM845 304h1v1h-1zM845 315h1v1h-1zM845 326h1v1h-1zM845 337h1v1h-1zM845 347h1v1h-1zM845 358h1v1h-1zM845 369h1v1h-1zM845 380h1v1h-1zM845 391h1v1h-1zM845 401h1v1h-1zM845 412h1v1h-1zM845 423h1v1h-1zM845 434h1v1h-1zM845 445h1v1h-1zM845 455h1v1h-1zM845 466h1v1h-1zM845 477h1v1h-1zM845 488h1v1h-1zM845 499h1v1h-1zM845 509h1v1h-1zM845 520h1v1h-1zM845 531h1v1h-1zM845 542h1v1h-1zM845 553h1v1h-1zM845 563h1v1h-1zM845 574h1v1h-1zM845 585h1v1h-1zM845 596h1v1h-1zM845 607h1v1h-1zM855 3h1v1h-1zM855 14h1v1h-1zM855 24h1v1h-1zM855 35h1v1h-1zM855 46h1v1h-1zM855 57h1v1h-1zM855 68h1v1h-1zM855 78h1v1h-1zM855 89h1v1h-1zM855 100h1v1h-1zM855 111h1v1h-1zM855 122h1v1h-1zM855 132h1v1h-1zM855 143h1v1h-1zM855 154h1v1h-1zM855 165h1v1h-1zM855 176h1v1h-1zM855 186h1v1h-1zM855 197h1v1h-1zM855 208h1v1h-1zM855 219h1v1h-1zM855 230h1v1h-1zM855 240h1v1h-1zM855 250h1v1h-1zM855 261h1v1h-1zM855 272h1v1h-1zM855 283h1v1h-1zM855 293h1v1h-1zM855 304h1v1h-1zM855 315h1v1h-1zM855 326h1v1h-1zM855 337h1v1h-1zM855 347h1v1h-1zM855 358h1v1h-1zM855 369h1v1h-1zM855 380h1v1h-1zM855 391h1v1h-1zM855 401h1v1h-1zM855 412h1v1h-1zM855 423h1v1h-1zM855 434h1v1h-1zM855 445h1v1h-1zM855 455h1v1h-1zM855 466h1v1h-1zM855 477h1v1h-1zM855 488h1v1h-1zM855 499h1v1h-1zM855 509h1v1h-1zM855 520h1v1h-1zM855 531h1v1h-1zM855 542h1v1h-1zM855 553h1v1h-1zM855 563h1v1h-1zM855 574h1v1h-1zM855 585h1v1h-1zM855 596h1v1h-1zM855 607h1v1h-1zM866 3h1v1h-1zM866 14h1v1h-1zM866 24h1v1h-1zM866 35h1v1h-1zM866 46h1v1h-1zM866 57h1v1h-1zM866 68h1v1h-1zM866 78h1v1h-1zM866 89h1v1h-1zM866 100h1v1h-1zM866 111h1v1h-1zM866 122h1v1h-1zM866 132h1v1h-1zM866 143h1v1h-1zM866 154h1v1h-1zM866 165h1v1h-1zM866 176h1v1h-1zM866 186h1v1h-1zM866 197h1v1h-1zM866 208h1v1h-1zM866 219h1v1h-1zM866 230h1v1h-1zM866 240h1v1h-1zM866 250h1v1h-1zM866 261h1v1h-1zM866 272h1v1h-1zM866 283h1v1h-1zM866 293h1v1h-1zM866 304h1v1h-1zM866 315h1v1h-1zM866 326h1v1h-1zM866 337h1v1h-1zM866 347h1v1h-1zM866 358h1v1h-1zM866 369h1v1h-1zM866 380h1v1h-1zM866 391h1v1h-1zM866 401h1v1h-1zM866 412h1v1h-1zM866 423h1v1h-1zM866 434h1v1h-1zM866 445h1v1h-1zM866 455h1v1h-1zM866 466h1v1h-1zM866 477h1v1h-1zM866 488h1v1h-1zM866 499h1v1h-1zM866 509h1v1h-1zM866 520h1v1h-1zM866 531h1v1h-1zM866 542h1v1h-1zM866 553h1v1h-1zM866 563h1v1h-1zM866 574h1v1h-1zM866 585h1v1h-1zM866 596h1v1h-1zM866 607h1v1h-1zM877 3h1v1h-1zM877 14h1v1h-1zM877 24h1v1h-1zM877 35h1v1h-1zM877 46h1v1h-1zM877 57h1v1h-1zM877 68h1v1h-1zM877 78h1v1h-1zM877 89h1v1h-1zM877 100h1v1h-1zM877 111h1v1h-1zM877 122h1v1h-1zM877 132h1v1h-1zM877 143h1v1h-1zM877 154h1v1h-1zM877 165h1v1h-1zM877 176h1v1h-1zM877 186h1v1h-1zM877 197h1v1h-1zM877 208h1v1h-1zM877 219h1v1h-1zM877 230h1v1h-1zM877 240h1v1h-1zM877 250h1v1h-1zM877 261h1v1h-1zM877 272h1v1h-1zM877 283h1v1h-1zM877 293h1v1h-1zM877 304h1v1h-1zM877 315h1v1h-1zM877 326h1v1h-1zM877 337h1v1h-1zM877 347h1v1h-1zM877 358h1v1h-1zM877 369h1v1h-1zM877 380h1v1h-1zM877 391h1v1h-1zM877 401h1v1h-1zM877 412h1v1h-1zM877 423h1v1h-1zM877 434h1v1h-1zM877 445h1v1h-1zM877 455h1v1h-1zM877 466h1v1h-1zM877 477h1v1h-1zM877 488h1v1h-1zM877 499h1v1h-1zM877 509h1v1h-1zM877 520h1v1h-1zM877 531h1v1h-1zM877 542h1v1h-1zM877 553h1v1h-1zM877 563h1v1h-1zM877 574h1v1h-1zM877 585h1v1h-1zM877 596h1v1h-1zM877 607h1v1h-1zM888 3h1v1h-1zM888 14h1v1h-1zM888 24h1v1h-1zM888 35h1v1h-1zM888 46h1v1h-1zM888 57h1v1h-1zM888 68h1v1h-1zM888 78h1v1h-1zM888 89h1v1h-1zM888 100h1v1h-1zM888 111h1v1h-1zM888 122h1v1h-1zM888 132h1v1h-1zM888 143h1v1h-1zM888 154h1v1h-1zM888 165h1v1h-1zM888 176h1v1h-1zM888 186h1v1h-1zM888 197h1v1h-1zM888 208h1v1h-1zM888 219h1v1h-1zM888 230h1v1h-1zM888 240h1v1h-1zM888 250h1v1h-1zM888 261h1v1h-1zM888 272h1v1h-1zM888 283h1v1h-1zM888 293h1v1h-1zM888 304h1v1h-1zM888 315h1v1h-1zM888 326h1v1h-1zM888 337h1v1h-1zM888 347h1v1h-1zM888 358h1v1h-1zM888 369h1v1h-1zM888 380h1v1h-1zM888 391h1v1h-1zM888 401h1v1h-1zM888 412h1v1h-1zM888 423h1v1h-1zM888 434h1v1h-1zM888 445h1v1h-1zM888 455h1v1h-1zM888 466h1v1h-1zM888 477h1v1h-1zM888 488h1v1h-1zM888 499h1v1h-1zM888 509h1v1h-1zM888 520h1v1h-1zM888 531h1v1h-1zM888 542h1v1h-1zM888 553h1v1h-1zM888 563h1v1h-1zM888 574h1v1h-1zM888 585h1v1h-1zM888 596h1v1h-1zM888 607h1v1h-1zM899 3h1v1h-1zM899 14h1v1h-1zM899 24h1v1h-1zM899 35h1v1h-1zM899 46h1v1h-1zM899 57h1v1h-1zM899 68h1v1h-1zM899 78h1v1h-1zM899 89h1v1h-1zM899 100h1v1h-1zM899 111h1v1h-1zM899 122h1v1h-1zM899 132h1v1h-1zM899 143h1v1h-1zM899 154h1v1h-1zM899 165h1v1h-1zM899 176h1v1h-1zM899 186h1v1h-1zM899 197h1v1h-1zM899 208h1v1h-1zM899 219h1v1h-1zM899 230h1v1h-1zM899 240h1v1h-1zM899 250h1v1h-1zM899 261h1v1h-1zM899 272h1v1h-1zM899 283h1v1h-1zM899 293h1v1h-1zM899 304h1v1h-1zM899 315h1v1h-1zM899 326h1v1h-1zM899 337h1v1h-1zM899 347h1v1h-1zM899 358h1v1h-1zM899 369h1v1h-1zM899 380h1v1h-1zM899 391h1v1h-1zM899 401h1v1h-1zM899 412h1v1h-1zM899 423h1v1h-1zM899 434h1v1h-1zM899 445h1v1h-1zM899 455h1v1h-1zM899 466h1v1h-1zM899 477h1v1h-1zM899 488h1v1h-1zM899 499h1v1h-1zM899 509h1v1h-1zM899 520h1v1h-1zM899 531h1v1h-1zM899 542h1v1h-1zM899 553h1v1h-1zM899 563h1v1h-1zM899 574h1v1h-1zM899 585h1v1h-1zM899 596h1v1h-1zM899 607h1v1h-1zM909 3h1v1h-1zM909 14h1v1h-1zM909 24h1v1h-1zM909 35h1v1h-1zM909 46h1v1h-1zM909 57h1v1h-1zM909 68h1v1h-1zM909 78h1v1h-1zM909 89h1v1h-1zM909 100h1v1h-1zM909 111h1v1h-1zM909 122h1v1h-1zM909 132h1v1h-1zM909 143h1v1h-1zM909 154h1v1h-1zM909 165h1v1h-1zM909 176h1v1h-1zM909 186h1v1h-1zM909 197h1v1h-1zM909 208h1v1h-1zM909 219h1v1h-1zM909 230h1v1h-1zM909 240h1v1h-1zM909 250h1v1h-1zM909 261h1v1h-1zM909 272h1v1h-1zM909 283h1v1h-1zM909 293h1v1h-1zM909 304h1v1h-1zM909 315h1v1h-1zM909 326h1v1h-1zM909 337h1v1h-1zM909 347h1v1h-1zM909 358h1v1h-1zM909 369h1v1h-1zM909 380h1v1h-1zM909 391h1v1h-1zM909 401h1v1h-1zM909 412h1v1h-1zM909 423h1v1h-1zM909 434h1v1h-1zM909 445h1v1h-1zM909 455h1v1h-1zM909 466h1v1h-1zM909 477h1v1h-1zM909 488h1v1h-1zM909 499h1v1h-1zM909 509h1v1h-1zM909 520h1v1h-1zM909 531h1v1h-1zM909 542h1v1h-1zM909 553h1v1h-1zM909 563h1v1h-1zM909 574h1v1h-1zM909 585h1v1h-1zM909 596h1v1h-1zM909 607h1v1h-1zM920 3h1v1h-1zM920 14h1v1h-1zM920 24h1v1h-1zM920 35h1v1h-1zM920 46h1v1h-1zM920 57h1v1h-1zM920 68h1v1h-1zM920 78h1v1h-1zM920 89h1v1h-1zM920 100h1v1h-1zM920 111h1v1h-1zM920 122h1v1h-1zM920 132h1v1h-1zM920 143h1v1h-1zM920 154h1v1h-1zM920 165h1v1h-1zM920 176h1v1h-1zM920 186h1v1h-1zM920 197h1v1h-1zM920 208h1v1h-1zM920 219h1v1h-1zM920 230h1v1h-1zM920 240h1v1h-1zM920 250h1v1h-1zM920 261h1v1h-1zM920 272h1v1h-1zM920 283h1v1h-1zM920 293h1v1h-1zM920 304h1v1h-1zM920 315h1v1h-1zM920 326h1v1h-1zM920 337h1v1h-1zM920 347h1v1h-1zM920 358h1v1h-1zM920 369h1v1h-1zM920 380h1v1h-1zM920 391h1v1h-1zM920 401h1v1h-1zM920 412h1v1h-1zM920 423h1v1h-1zM920 434h1v1h-1zM920 445h1v1h-1zM920 455h1v1h-1zM920 466h1v1h-1zM920 477h1v1h-1zM920 488h1v1h-1zM920 499h1v1h-1zM920 509h1v1h-1zM920 520h1v1h-1zM920 531h1v1h-1zM920 542h1v1h-1zM920 553h1v1h-1zM920 563h1v1h-1zM920 574h1v1h-1zM920 585h1v1h-1zM920 596h1v1h-1zM920 607h1v1h-1zM931 3h1v1h-1zM931 14h1v1h-1zM931 24h1v1h-1zM931 35h1v1h-1zM931 46h1v1h-1zM931 57h1v1h-1zM931 68h1v1h-1zM931 78h1v1h-1zM931 89h1v1h-1zM931 100h1v1h-1zM931 111h1v1h-1zM931 122h1v1h-1zM931 132h1v1h-1zM931 143h1v1h-1zM931 154h1v1h-1zM931 165h1v1h-1zM931 176h1v1h-1zM931 186h1v1h-1zM931 197h1v1h-1zM931 208h1v1h-1zM931 219h1v1h-1zM931 230h1v1h-1zM931 240h1v1h-1zM931 250h1v1h-1zM931 261h1v1h-1zM931 272h1v1h-1zM931 283h1v1h-1zM931 293h1v1h-1zM931 304h1v1h-1zM931 315h1v1h-1zM931 326h1v1h-1zM931 337h1v1h-1zM931 347h1v1h-1zM931 358h1v1h-1zM931 369h1v1h-1zM931 380h1v1h-1zM931 391h1v1h-1zM931 401h1v1h-1zM931 412h1v1h-1zM931 423h1v1h-1zM931 434h1v1h-1zM931 445h1v1h-1zM931 455h1v1h-1zM931 466h1v1h-1zM931 477h1v1h-1zM931 488h1v1h-1zM931 499h1v1h-1zM931 509h1v1h-1zM931 520h1v1h-1zM931 531h1v1h-1zM931 542h1v1h-1zM931 553h1v1h-1zM931 563h1v1h-1zM931 574h1v1h-1zM931 585h1v1h-1zM931 596h1v1h-1zM931 607h1v1h-1zM942 3h1v1h-1zM942 14h1v1h-1zM942 24h1v1h-1zM942 35h1v1h-1zM942 46h1v1h-1zM942 57h1v1h-1zM942 68h1v1h-1zM942 78h1v1h-1zM942 89h1v1h-1zM942 100h1v1h-1zM942 111h1v1h-1zM942 122h1v1h-1zM942 132h1v1h-1zM942 143h1v1h-1zM942 154h1v1h-1zM942 165h1v1h-1zM942 176h1v1h-1zM942 186h1v1h-1zM942 197h1v1h-1zM942 208h1v1h-1zM942 219h1v1h-1zM942 230h1v1h-1zM942 240h1v1h-1zM942 250h1v1h-1zM942 261h1v1h-1zM942 272h1v1h-1zM942 283h1v1h-1zM942 293h1v1h-1zM942 304h1v1h-1zM942 315h1v1h-1zM942 326h1v1h-1zM942 337h1v1h-1zM942 347h1v1h-1zM942 358h1v1h-1zM942 369h1v1h-1zM942 380h1v1h-1zM942 391h1v1h-1zM942 401h1v1h-1zM942 412h1v1h-1zM942 423h1v1h-1zM942 434h1v1h-1zM942 445h1v1h-1zM942 455h1v1h-1zM942 466h1v1h-1zM942 477h1v1h-1zM942 488h1v1h-1zM942 499h1v1h-1zM942 509h1v1h-1zM942 520h1v1h-1zM942 531h1v1h-1zM942 542h1v1h-1zM942 553h1v1h-1zM942 563h1v1h-1zM942 574h1v1h-1zM942 585h1v1h-1zM942 596h1v1h-1zM942 607h1v1h-1zM953 3h1v1h-1zM953 14h1v1h-1zM953 24h1v1h-1zM953 35h1v1h-1zM953 46h1v1h-1zM953 57h1v1h-1zM953 68h1v1h-1zM953 78h1v1h-1zM953 89h1v1h-1zM953 100h1v1h-1zM953 111h1v1h-1zM953 122h1v1h-1zM953 132h1v1h-1zM953 143h1v1h-1zM953 154h1v1h-1zM953 165h1v1h-1zM953 176h1v1h-1zM953 186h1v1h-1zM953 197h1v1h-1zM953 208h1v1h-1zM953 219h1v1h-1zM953 230h1v1h-1zM953 240h1v1h-1zM953 250h1v1h-1zM953 261h1v1h-1zM953 272h1v1h-1zM953 283h1v1h-1zM953 293h1v1h-1zM953 304h1v1h-1zM953 315h1v1h-1zM953 326h1v1h-1zM953 337h1v1h-1zM953 347h1v1h-1zM953 358h1v1h-1zM953 369h1v1h-1zM953 380h1v1h-1zM953 391h1v1h-1zM953 401h1v1h-1zM953 412h1v1h-1zM953 423h1v1h-1zM953 434h1v1h-1zM953 445h1v1h-1zM953 455h1v1h-1zM953 466h1v1h-1zM953 477h1v1h-1zM953 488h1v1h-1zM953 499h1v1h-1zM953 509h1v1h-1zM953 520h1v1h-1zM953 531h1v1h-1zM953 542h1v1h-1zM953 553h1v1h-1zM953 563h1v1h-1zM953 574h1v1h-1zM953 585h1v1h-1zM953 596h1v1h-1zM953 607h1v1h-1zM963 3h1v1h-1zM963 14h1v1h-1zM963 24h1v1h-1zM963 35h1v1h-1zM963 46h1v1h-1zM963 57h1v1h-1zM963 68h1v1h-1zM963 78h1v1h-1zM963 89h1v1h-1zM963 100h1v1h-1zM963 111h1v1h-1zM963 122h1v1h-1zM963 132h1v1h-1zM963 143h1v1h-1zM963 154h1v1h-1zM963 165h1v1h-1zM963 176h1v1h-1zM963 186h1v1h-1zM963 197h1v1h-1zM963 208h1v1h-1zM963 219h1v1h-1zM963 230h1v1h-1zM963 240h1v1h-1zM963 250h1v1h-1zM963 261h1v1h-1zM963 272h1v1h-1zM963 283h1v1h-1zM963 293h1v1h-1zM963 304h1v1h-1zM963 315h1v1h-1zM963 326h1v1h-1zM963 337h1v1h-1zM963 347h1v1h-1zM963 358h1v1h-1zM963 369h1v1h-1zM963 380h1v1h-1zM963 391h1v1h-1zM963 401h1v1h-1zM963 412h1v1h-1zM963 423h1v1h-1zM963 434h1v1h-1zM963 445h1v1h-1zM963 455h1v1h-1zM963 466h1v1h-1zM963 477h1v1h-1zM963 488h1v1h-1zM963 499h1v1h-1zM963 509h1v1h-1zM963 520h1v1h-1zM963 531h1v1h-1zM963 542h1v1h-1zM963 553h1v1h-1zM963 563h1v1h-1zM963 574h1v1h-1zM963 585h1v1h-1zM963 596h1v1h-1zM963 607h1v1h-1zM974 3h1v1h-1zM974 14h1v1h-1zM974 24h1v1h-1zM974 35h1v1h-1zM974 46h1v1h-1zM974 57h1v1h-1zM974 68h1v1h-1zM974 78h1v1h-1zM974 89h1v1h-1zM974 100h1v1h-1zM974 111h1v1h-1zM974 122h1v1h-1zM974 132h1v1h-1zM974 143h1v1h-1zM974 154h1v1h-1zM974 165h1v1h-1zM974 176h1v1h-1zM974 186h1v1h-1zM974 197h1v1h-1zM974 208h1v1h-1zM974 219h1v1h-1zM974 230h1v1h-1zM974 240h1v1h-1zM974 250h1v1h-1zM974 261h1v1h-1zM974 272h1v1h-1zM974 283h1v1h-1zM974 293h1v1h-1zM974 304h1v1h-1zM974 315h1v1h-1zM974 326h1v1h-1zM974 337h1v1h-1zM974 347h1v1h-1zM974 358h1v1h-1zM974 369h1v1h-1zM974 380h1v1h-1zM974 391h1v1h-1zM974 401h1v1h-1zM974 412h1v1h-1zM974 423h1v1h-1zM974 434h1v1h-1zM974 445h1v1h-1zM974 455h1v1h-1zM974 466h1v1h-1zM974 477h1v1h-1zM974 488h1v1h-1zM974 499h1v1h-1zM974 509h1v1h-1zM974 520h1v1h-1zM974 531h1v1h-1zM974 542h1v1h-1zM974 553h1v1h-1zM974 563h1v1h-1zM974 574h1v1h-1zM974 585h1v1h-1zM974 596h1v1h-1zM974 607h1v1h-1zM985 3h1v1h-1zM985 14h1v1h-1zM985 24h1v1h-1zM985 35h1v1h-1zM985 46h1v1h-1zM985 57h1v1h-1zM985 68h1v1h-1zM985 78h1v1h-1zM985 89h1v1h-1zM985 100h1v1h-1zM985 111h1v1h-1zM985 122h1v1h-1zM985 132h1v1h-1zM985 143h1v1h-1zM985 154h1v1h-1zM985 165h1v1h-1zM985 176h1v1h-1zM985 186h1v1h-1zM985 197h1v1h-1zM985 208h1v1h-1zM985 219h1v1h-1zM985 230h1v1h-1zM985 240h1v1h-1zM985 250h1v1h-1zM985 261h1v1h-1zM985 272h1v1h-1zM985 283h1v1h-1zM985 293h1v1h-1zM985 304h1v1h-1zM985 315h1v1h-1zM985 326h1v1h-1zM985 337h1v1h-1zM985 347h1v1h-1zM985 358h1v1h-1zM985 369h1v1h-1zM985 380h1v1h-1zM985 391h1v1h-1zM985 401h1v1h-1zM985 412h1v1h-1zM985 423h1v1h-1zM985 434h1v1h-1zM985 445h1v1h-1zM985 455h1v1h-1zM985 466h1v1h-1zM985 477h1v1h-1zM985 488h1v1h-1zM985 499h1v1h-1zM985 509h1v1h-1zM985 520h1v1h-1zM985 531h1v1h-1zM985 542h1v1h-1zM985 553h1v1h-1zM985 563h1v1h-1zM985 574h1v1h-1zM985 585h1v1h-1zM985 596h1v1h-1zM985 607h1v1h-1z"/>
</g>
<rect x="110" y="46" width="23" height="1" fill="#a00808" />
<rect x="133" y="46" width="42" height="1" fill="#0a5a0a" />
<rect x="306" y="46" width="63" height="1" fill="#0a5a0a" />
<rect x="306" y="57" width="63" height="1" fill="#0a5a0a" />
<rect x="306" y="68" width="63" height="1" fill="#0a5a0a" />
<rect x="306" y="78" width="63" height="1" fill="#0a5a0a" />
<path d="M143.5 57.5 L137.5 68.5 L148.5 68.5 Z" fill="none" stroke="#0a5a0a" stroke-width="1" shape-rendering="auto"/>
<rect x="143" y="57" width="1" height="33" fill="#0a5a0a" />
<rect x="143" y="89" width="32" height="1" fill="#0a5a0a" />
<rect x="143" y="111" width="32" height="1" fill="#0a5a0a" />
<rect x="164" y="111" width="1" height="12" fill="#0a5a0a" />
<rect x="164" y="122" width="11" height="1" fill="#0a5a0a" />
<rect x="143" y="111" width="1" height="33" fill="#0a5a0a" />
<rect x="132" y="143" width="22" height="1" fill="#0a5a0a" />
<rect x="138" y="149" width="11" height="1" fill="#0a5a0a" />
<rect x="142" y="154" width="3" height="1" fill="#0a5a0a" />
<circle cx="164.5" cy="111.5" r="2.7" fill="#054005" shape-rendering="auto"/>
<rect x="306" y="197" width="63" height="1" fill="#0a5a0a" />
<rect x="306" y="208" width="63" height="1" fill="#0a5a0a" />
<rect x="306" y="219" width="63" height="1" fill="#0a5a0a" />
<rect x="306" y="230" width="63" height="1" fill="#0a5a0a" />
<path d="M143.5 208.5 L137.5 219.5 L148.5 219.5 Z" fill="none" stroke="#0a5a0a" stroke-width="1" shape-rendering="auto"/>
<rect x="143" y="208" width="1" height="33" fill="#0a5a0a" />
<rect x="143" y="240" width="32" height="1" fill="#0a5a0a" />
<rect x="143" y="261" width="32" height="1" fill="#0a5a0a" />
<rect x="164" y="261" width="1" height="12" fill="#0a5a0a" />
<rect x="164" y="272" width="11" height="1" fill="#0a5a0a" />
<rect x="143" y="261" width="1" height="33" fill="#0a5a0a" />
<rect x="132" y="293" width="22" height="1" fill="#0a5a0a" />
<rect x="138" y="299" width="11" height="1" fill="#0a5a0a" />
<rect x="142" y="304" width="3" height="1" fill="#0a5a0a" />
<circle cx="164.5" cy="261.5" r="2.7" fill="#054005" shape-rendering="auto"/>
<rect x="306" y="347" width="63" height="1" fill="#0a5a0a" />
<rect x="306" y="358" width="63" height="1" fill="#0a5a0a" />
<rect x="306" y="369" width="63" height="1" fill="#0a5a0a" />
<rect x="306" y="380" width="63" height="1" fill="#0a5a0a" />
<path d="M143.5 358.5 L137.5 369.5 L148.5 369.5 Z" fill="none" stroke="#0a5a0a" stroke-width="1" shape-rendering="auto"/>
<rect x="143" y="358" width="1" height="34" fill="#0a5a0a" />
<rect x="143" y="391" width="32" height="1" fill="#0a5a0a" />
<rect x="143" y="412" width="32" height="1" fill="#0a5a0a" />
<rect x="164" y="412" width="1" height="12" fill="#0a5a0a" />
<rect x="164" y="423" width="11" height="1" fill="#0a5a0a" />
<rect x="143" y="412" width="1" height="34" fill="#0a5a0a" />
<rect x="132" y="445" width="22" height="1" fill="#0a5a0a" />
<rect x="138" y="450" width="11" height="1" fill="#0a5a0a" />
<rect x="142" y="455" width="3" height="1" fill="#0a5a0a" />
<circle cx="164.5" cy="412.5" r="2.7" fill="#054005" shape-rendering="auto"/>
<rect x="348" y="14" width="1" height="33" fill="#0a5a0a" />
<rect x="153" y="14" width="196" height="1" fill="#0a5a0a" />
<rect x="153" y="14" width="1" height="44" fill="#0a5a0a" />
<rect x="153" y="57" width="22" height="1" fill="#0a5a0a" />
<circle cx="348.5" cy="46.5" r="2.7" fill="#054005" shape-rendering="auto"/>
<rect x="348" y="78" width="1" height="77" fill="#0a5a0a" />
<rect x="153" y="154" width="196" height="1" fill="#0a5a0a" />
<rect x="153" y="154" width="1" height="44" fill="#0a5a0a" />
<rect x="153" y="197" width="22" height="1" fill="#0a5a0a" />
<circle cx="348.5" cy="78.5" r="2.7" fill="#054005" shape-rendering="auto"/>
<rect x="348" y="165" width="1" height="33" fill="#0a5a0a" />
<rect x="164" y="165" width="185" height="1" fill="#0a5a0a" />
<rect x="164" y="165" width="1" height="44" fill="#0a5a0a" />
<rect x="164" y="208" width="11" height="1" fill="#0a5a0a" />
<circle cx="348.5" cy="197.5" r="2.7" fill="#054005" shape-rendering="auto"/>
<rect x="348" y="230" width="1" height="75" fill="#0a5a0a" />
<rect x="153" y="304" width="196" height="1" fill="#0a5a0a" />
<rect x="153" y="304" width="1" height="44" fill="#0a5a0a" />
<rect x="153" y="347" width="22" height="1" fill="#0a5a0a" />
<circle cx="348.5" cy="230.5" r="2.7" fill="#054005" shape-rendering="auto"/>
<rect x="348" y="315" width="1" height="33" fill="#0a5a0a" />
<rect x="164" y="315" width="185" height="1" fill="#0a5a0a" />
<rect x="164" y="315" width="1" height="44" fill="#0a5a0a" />
<rect x="164" y="358" width="11" height="1" fill="#0a5a0a" />
<circle cx="348.5" cy="347.5" r="2.7" fill="#054005" shape-rendering="auto"/>
<rect x="14" y="100" width="161" height="1" fill="#0a5a0a" />
<rect x="14" y="100" width="1" height="400" fill="#0a5a0a" />
<rect x="14" y="499" width="86" height="1" fill="#0a5a0a" />
<rect x="121" y="100" width="1" height="302" fill="#0a5a0a" />
<rect x="121" y="401" width="54" height="1" fill="#0a5a0a" />
<rect x="121" y="250" width="54" height="1" fill="#0a5a0a" />
<circle cx="121.5" cy="100.5" r="2.7" fill="#054005" shape-rendering="auto"/>
<circle cx="121.5" cy="250.5" r="2.7" fill="#054005" shape-rendering="auto"/>
<rect x="500" y="46" width="389" height="1" fill="#0a5a0a" />
<rect x="888" y="46" width="1" height="302" fill="#0a5a0a" />
<rect x="888" y="347" width="11" height="1" fill="#0a5a0a" />
<rect x="500" y="197" width="227" height="1" fill="#0a5a0a" />
<rect x="726" y="197" width="1" height="151" fill="#0a5a0a" />
<rect x="726" y="347" width="11" height="1" fill="#0a5a0a" />
<rect x="500" y="347" width="75" height="1" fill="#0a5a0a" />
<rect x="500" y="57" width="378" height="1" fill="#0a5a0a" />
<rect x="877" y="57" width="1" height="302" fill="#0a5a0a" />
<rect x="877" y="358" width="22" height="1" fill="#0a5a0a" />
<rect x="500" y="208" width="216" height="1" fill="#0a5a0a" />
<rect x="715" y="208" width="1" height="151" fill="#0a5a0a" />
<rect x="715" y="358" width="22" height="1" fill="#0a5a0a" />
<rect x="500" y="358" width="75" height="1" fill="#0a5a0a" />
<rect x="500" y="68" width="367" height="1" fill="#0a5a0a" />
<rect x="866" y="68" width="1" height="302" fill="#0a5a0a" />
<rect x="866" y="369" width="33" height="1" fill="#0a5a0a" />
<rect x="500" y="219" width="205" height="1" fill="#0a5a0a" />
<rect x="704" y="219" width="1" height="151" fill="#0a5a0a" />
<rect x="704" y="369" width="33" height="1" fill="#0a5a0a" />
<rect x="500" y="369" width="75" height="1" fill="#0a5a0a" />
<rect x="500" y="78" width="356" height="1" fill="#0a5a0a" />
<rect x="855" y="78" width="1" height="303" fill="#0a5a0a" />
<rect x="855" y="380" width="44" height="1" fill="#0a5a0a" />
<rect x="500" y="230" width="194" height="1" fill="#0a5a0a" />
<rect x="693" y="230" width="1" height="151" fill="#0a5a0a" />
<rect x="693" y="380" width="44" height="1" fill="#0a5a0a" />
<rect x="500" y="380" width="75" height="1" fill="#0a5a0a" />
<rect x="500" y="89" width="346" height="1" fill="#0a5a0a" />
<rect x="845" y="89" width="1" height="303" fill="#0a5a0a" />
<rect x="845" y="391" width="54" height="1" fill="#0a5a0a" />
<rect x="500" y="240" width="184" height="1" fill="#0a5a0a" />
<rect x="683" y="240" width="1" height="152" fill="#0a5a0a" />
<rect x="683" y="391" width="54" height="1" fill="#0a5a0a" />
<rect x="500" y="391" width="75" height="1" fill="#0a5a0a" />
<rect x="500" y="100" width="335" height="1" fill="#0a5a0a" />
<rect x="834" y="100" width="1" height="302" fill="#0a5a0a" />
<rect x="834" y="401" width="65" height="1" fill="#0a5a0a" />
<rect x="500" y="250" width="173" height="1" fill="#0a5a0a" />
<rect x="672" y="250" width="1" height="152" fill="#0a5a0a" />
<rect x="672" y="401" width="65" height="1" fill="#0a5a0a" />
<rect x="500" y="401" width="75" height="1" fill="#0a5a0a" />
<rect x="500" y="111" width="324" height="1" fill="#0a5a0a" />
<rect x="823" y="111" width="1" height="302" fill="#0a5a0a" />
<rect x="823" y="412" width="76" height="1" fill="#0a5a0a" />
<rect x="500" y="261" width="162" height="1" fill="#0a5a0a" />
<rect x="661" y="261" width="1" height="152" fill="#0a5a0a" />
<rect x="661" y="412" width="76" height="1" fill="#0a5a0a" />
<rect x="500" y="412" width="75" height="1" fill="#0a5a0a" />
<rect x="650" y="304" width="1" height="12" fill="#0a5a0a" />
<rect x="650" y="304" width="325" height="1" fill="#0a5a0a" />
<rect x="812" y="304" width="1" height="12" fill="#0a5a0a" />
<rect x="974" y="272" width="1" height="44" fill="#0a5a0a" />
<rect x="650" y="315" width="1" height="12" fill="#a00808" />
<rect x="812" y="315" width="1" height="12" fill="#a00808" />
<rect x="974" y="315" width="1" height="12" fill="#a00808" />
<circle cx="812.5" cy="304.5" r="2.7" fill="#054005" shape-rendering="auto"/>
<circle cx="974.5" cy="304.5" r="2.7" fill="#054005" shape-rendering="auto"/>
<path d="M974.5 272.5 L968.5 283.5 L979.5 283.5 Z" fill="none" stroke="#0a5a0a" stroke-width="1" shape-rendering="auto"/>
<path d="M46.5 380.5 L40.5 391.5 L51.5 391.5 Z" fill="none" stroke="#0a5a0a" stroke-width="1" shape-rendering="auto"/>
<rect x="46" y="380" width="1" height="44" fill="#0a5a0a" />
<rect x="46" y="412" width="54" height="1" fill="#0a5a0a" />
<rect x="99" y="412" width="1" height="16" fill="#0a5a0a" />
<circle cx="46.5" cy="412.5" r="2.7" fill="#054005" shape-rendering="auto"/>
<rect x="46" y="423" width="1" height="13" fill="#a00808" />
<rect x="46" y="454" width="1" height="13" fill="#a00808" />
<rect x="46" y="467" width="1" height="33" fill="#0a5a0a" />
<defs><pattern id="hat" x="37" y="437" width="4.5" height="4.5" patternUnits="userSpaceOnUse"><rect width="4.5" height="4.5" fill="#e2e2c4"/><path d="M-1 -1 L5.5 5.5 M-1 3.5 L1 5.5 M3.5 -1 L5.5 1" stroke="#a00808" stroke-width="1.1" shape-rendering="auto"/></pattern></defs>
<rect x="36.5" y="436.5" width="21" height="5" fill="url(#hat)" stroke="#a00808" stroke-width="1"/>
<rect x="36.5" y="448.5" width="21" height="5" fill="#e2e2c4" stroke="#a00808" stroke-width="1"/>
<rect x="38" y="420" width="6" height="6" fill="#ff4848" />
<rect x="38" y="464" width="6" height="5" fill="#909090" />
<rect x="99" y="428" width="1" height="12" fill="#a00808" />
<rect x="99" y="472" width="1" height="11" fill="#a00808" />
<rect x="99" y="483" width="1" height="17" fill="#0a5a0a" />
<circle cx="99.5" cy="442.5" r="3" fill="#e2e2c4" stroke="#a00808" stroke-width="1" shape-rendering="auto"/>
<circle cx="99.5" cy="468.5" r="3" fill="#e2e2c4" stroke="#a00808" stroke-width="1" shape-rendering="auto"/>
<rect x="108" y="440" width="1" height="32" fill="#a00808" />
<rect x="108.5" y="447.5" width="5" height="17" fill="#e2e2c4" stroke="#a00808" stroke-width="1"/>
<rect x="91" y="426" width="6" height="5" fill="#ff4848" />
<rect x="91" y="480" width="6" height="5" fill="#909090" />
<circle cx="110.5" cy="477.5" r="4.7" fill="#ff0000" shape-rendering="auto"/><circle cx="110.5" cy="477.5" r="3" fill="#ff0000" stroke="#4a0000" stroke-width="1.1" shape-rendering="auto"/><rect x="110" y="475" width="1" height="5" fill="#4a0000"/><rect x="109" y="476" width="3" height="1" fill="#4a0000"/><rect x="109" y="478" width="3" height="1" fill="#4a0000"/><rect x="108" y="477" width="5" height="1" fill="#ff0000"/>
<circle cx="46.5" cy="499.5" r="2.7" fill="#054005" shape-rendering="auto"/>
<circle cx="99.5" cy="499.5" r="2.7" fill="#054005" shape-rendering="auto"/>
<rect x="46" y="499" width="1" height="10" fill="#0a5a0a" />
<rect x="46" y="509" width="1" height="12" fill="#a00808" />
<rect x="46" y="553" width="1" height="11" fill="#a00808" />
<rect x="46" y="564" width="1" height="33" fill="#0a5a0a" />
<rect x="42.5" y="520.5" width="9" height="33" fill="#e2e2c4" stroke="#a00808" stroke-width="1"/>
<rect x="38" y="507" width="6" height="5" fill="#909090" />
<rect x="38" y="561" width="6" height="5" fill="#4040ff" />
<rect x="46" y="574" width="54" height="1" fill="#0a5a0a" />
<circle cx="46.5" cy="574.5" r="2.7" fill="#054005" shape-rendering="auto"/>
<rect x="36" y="596" width="22" height="1" fill="#0a5a0a" />
<rect x="41" y="601" width="11" height="1" fill="#0a5a0a" />
<rect x="45" y="607" width="3" height="1" fill="#0a5a0a" />
<rect x="99" y="499" width="1" height="21" fill="#0a5a0a" />
<rect x="99" y="520" width="1" height="12" fill="#a00808" />
<rect x="99" y="542" width="1" height="12" fill="#a00808" />
<rect x="99" y="554" width="1" height="21" fill="#0a5a0a" />
<path d="M99.5 531.5 L110.5 542.5 L89.5 542.5 Z" fill="#e2e2c4" stroke="#a00808" stroke-width="1" shape-rendering="auto"/>
<rect x="89" y="531" width="22" height="1" fill="#a00808" />
<rect x="91" y="518" width="6" height="5" fill="#909090" />
<rect x="91" y="550" width="6" height="5" fill="#4040ff" />
<rect x="57.5" y="24.5" width="53" height="44" fill="#e2e2c4" stroke="#900808" stroke-width="1"/>
<rect x="62" y="57" width="6" height="1" fill="#a00808" />
<rect x="67" y="35" width="1" height="23" fill="#a00808" />
<rect x="67" y="35" width="17" height="1" fill="#a00808" />
<rect x="83" y="35" width="1" height="23" fill="#a00808" />
<rect x="83" y="57" width="17" height="1" fill="#a00808" />
<rect x="99" y="35" width="1" height="23" fill="#a00808" />
<rect x="99" y="35" width="7" height="1" fill="#a00808" />
<rect x="118" y="38" width="6" height="5" fill="#4040ff" />
<rect x="197.5" y="35.5" width="86" height="97" fill="#e2e2c4" stroke="#900808" stroke-width="1"/>
<rect x="175" y="46" width="16" height="1" fill="#a00808" />
<circle cx="193.5" cy="46.5" r="3" fill="#fcfdea" stroke="#a00808" stroke-width="1" shape-rendering="auto"/>
<path d="M197.5 43 L200.5 46.5 L197.5 50" fill="none" stroke="#a00808" stroke-width="1" shape-rendering="auto"/>
<rect x="187" y="38" width="5" height="5" fill="#4040ff" />
<rect x="175" y="57" width="16" height="1" fill="#a00808" />
<circle cx="193.5" cy="57.5" r="3" fill="#fcfdea" stroke="#a00808" stroke-width="1" shape-rendering="auto"/>
<path d="M197.5 54 L200.5 57.5 L197.5 61" fill="none" stroke="#a00808" stroke-width="1" shape-rendering="auto"/>
<rect x="187" y="49" width="5" height="5" fill="#4040ff" />
<rect x="175" y="89" width="23" height="1" fill="#a00808" />
<rect x="187" y="82" width="5" height="4" fill="#ff4848" />
<rect x="175" y="100" width="23" height="1" fill="#a00808" />
<rect x="187" y="92" width="5" height="5" fill="#909090" />
<rect x="175" y="111" width="23" height="1" fill="#a00808" />
<rect x="187" y="103" width="5" height="5" fill="#4040ff" />
<rect x="175" y="122" width="23" height="1" fill="#a00808" />
<rect x="187" y="114" width="5" height="4" fill="#4040ff" />
<rect x="283" y="46" width="23" height="1" fill="#a00808" />
<rect x="288" y="38" width="4" height="5" fill="#4040ff" />
<rect x="283" y="57" width="23" height="1" fill="#a00808" />
<rect x="288" y="49" width="4" height="5" fill="#ff4848" />
<rect x="283" y="68" width="23" height="1" fill="#a00808" />
<rect x="288" y="60" width="4" height="4" fill="#4040ff" />
<rect x="283" y="78" width="23" height="1" fill="#a00808" />
<rect x="288" y="71" width="4" height="4" fill="#4040ff" />
<rect x="197.5" y="186.5" width="86" height="97" fill="#e2e2c4" stroke="#900808" stroke-width="1"/>
<rect x="175" y="197" width="16" height="1" fill="#a00808" />
<circle cx="193.5" cy="197.5" r="3" fill="#fcfdea" stroke="#a00808" stroke-width="1" shape-rendering="auto"/>
<path d="M197.5 194 L200.5 197.5 L197.5 201" fill="none" stroke="#a00808" stroke-width="1" shape-rendering="auto"/>
<rect x="187" y="190" width="5" height="4" fill="#4040ff" />
<rect x="175" y="208" width="16" height="1" fill="#a00808" />
<circle cx="193.5" cy="208.5" r="3" fill="#fcfdea" stroke="#a00808" stroke-width="1" shape-rendering="auto"/>
<path d="M197.5 205 L200.5 208.5 L197.5 212" fill="none" stroke="#a00808" stroke-width="1" shape-rendering="auto"/>
<rect x="187" y="200" width="5" height="5" fill="#ff4848" />
<rect x="175" y="240" width="23" height="1" fill="#a00808" />
<rect x="187" y="233" width="5" height="4" fill="#ff4848" />
<rect x="175" y="250" width="23" height="1" fill="#a00808" />
<rect x="187" y="243" width="5" height="4" fill="#909090" />
<rect x="175" y="261" width="23" height="1" fill="#a00808" />
<rect x="187" y="253" width="5" height="5" fill="#4040ff" />
<rect x="175" y="272" width="23" height="1" fill="#a00808" />
<rect x="187" y="264" width="5" height="5" fill="#4040ff" />
<rect x="283" y="197" width="23" height="1" fill="#a00808" />
<rect x="288" y="190" width="4" height="4" fill="#ff4848" />
<rect x="283" y="208" width="23" height="1" fill="#a00808" />
<rect x="288" y="200" width="4" height="5" fill="#ff4848" />
<rect x="283" y="219" width="23" height="1" fill="#a00808" />
<rect x="288" y="211" width="4" height="5" fill="#4040ff" />
<rect x="283" y="230" width="23" height="1" fill="#a00808" />
<rect x="288" y="222" width="4" height="4" fill="#4040ff" />
<rect x="197.5" y="337.5" width="86" height="97" fill="#e2e2c4" stroke="#900808" stroke-width="1"/>
<rect x="175" y="347" width="16" height="1" fill="#a00808" />
<circle cx="193.5" cy="347.5" r="3" fill="#fcfdea" stroke="#a00808" stroke-width="1" shape-rendering="auto"/>
<path d="M197.5 344 L200.5 347.5 L197.5 351" fill="none" stroke="#a00808" stroke-width="1" shape-rendering="auto"/>
<rect x="187" y="340" width="5" height="4" fill="#4040ff" />
<rect x="175" y="358" width="16" height="1" fill="#a00808" />
<circle cx="193.5" cy="358.5" r="3" fill="#fcfdea" stroke="#a00808" stroke-width="1" shape-rendering="auto"/>
<path d="M197.5 355 L200.5 358.5 L197.5 362" fill="none" stroke="#a00808" stroke-width="1" shape-rendering="auto"/>
<rect x="187" y="351" width="5" height="4" fill="#ff4848" />
<rect x="175" y="391" width="23" height="1" fill="#a00808" />
<rect x="187" y="383" width="5" height="4" fill="#ff4848" />
<rect x="175" y="401" width="23" height="1" fill="#a00808" />
<rect x="187" y="394" width="5" height="4" fill="#909090" />
<rect x="175" y="412" width="23" height="1" fill="#a00808" />
<rect x="187" y="405" width="5" height="4" fill="#4040ff" />
<rect x="175" y="423" width="23" height="1" fill="#a00808" />
<rect x="187" y="415" width="5" height="5" fill="#4040ff" />
<rect x="283" y="347" width="23" height="1" fill="#a00808" />
<rect x="288" y="340" width="4" height="4" fill="#ff4848" />
<rect x="283" y="358" width="23" height="1" fill="#a00808" />
<rect x="288" y="351" width="4" height="4" fill="#4040ff" />
<rect x="283" y="369" width="23" height="1" fill="#a00808" />
<rect x="288" y="361" width="4" height="5" fill="#4040ff" />
<rect x="283" y="380" width="23" height="1" fill="#a00808" />
<rect x="288" y="372" width="4" height="5" fill="#4040ff" />
<rect x="391.5" y="35.5" width="86" height="87" fill="#e2e2c4" stroke="#900808" stroke-width="1"/>
<rect x="369" y="46" width="23" height="1" fill="#a00808" />
<rect x="382" y="38" width="4" height="5" fill="#4040ff" />
<rect x="369" y="57" width="23" height="1" fill="#a00808" />
<rect x="382" y="49" width="4" height="5" fill="#ff4848" />
<rect x="369" y="68" width="23" height="1" fill="#a00808" />
<rect x="382" y="60" width="4" height="4" fill="#4040ff" />
<rect x="369" y="78" width="23" height="1" fill="#a00808" />
<rect x="382" y="71" width="4" height="4" fill="#4040ff" />
<rect x="369" y="89" width="16" height="1" fill="#a00808" />
<circle cx="387.5" cy="89.5" r="3" fill="#fcfdea" stroke="#a00808" stroke-width="1" shape-rendering="auto"/>
<rect x="382" y="82" width="4" height="4" fill="#909090" />
<rect x="369" y="100" width="16" height="1" fill="#a00808" />
<circle cx="387.5" cy="100.5" r="3" fill="#fcfdea" stroke="#a00808" stroke-width="1" shape-rendering="auto"/>
<rect x="382" y="92" width="4" height="5" fill="#909090" />
<rect x="369" y="111" width="16" height="1" fill="#a00808" />
<circle cx="387.5" cy="111.5" r="3" fill="#fcfdea" stroke="#a00808" stroke-width="1" shape-rendering="auto"/>
<rect x="382" y="103" width="4" height="5" fill="#909090" />
<rect x="484" y="46" width="16" height="1" fill="#a00808" />
<circle cx="481.5" cy="46.5" r="3" fill="#fcfdea" stroke="#a00808" stroke-width="1" shape-rendering="auto"/>
<rect x="482" y="38" width="5" height="5" fill="#4040ff" />
<rect x="484" y="57" width="16" height="1" fill="#a00808" />
<circle cx="481.5" cy="57.5" r="3" fill="#fcfdea" stroke="#a00808" stroke-width="1" shape-rendering="auto"/>
<rect x="482" y="49" width="5" height="5" fill="#4040ff" />
<rect x="484" y="68" width="16" height="1" fill="#a00808" />
<circle cx="481.5" cy="68.5" r="3" fill="#fcfdea" stroke="#a00808" stroke-width="1" shape-rendering="auto"/>
<rect x="482" y="60" width="5" height="4" fill="#909090" />
<rect x="484" y="78" width="16" height="1" fill="#a00808" />
<circle cx="481.5" cy="78.5" r="3" fill="#fcfdea" stroke="#a00808" stroke-width="1" shape-rendering="auto"/>
<rect x="482" y="71" width="5" height="4" fill="#4040ff" />
<rect x="484" y="89" width="16" height="1" fill="#a00808" />
<circle cx="481.5" cy="89.5" r="3" fill="#fcfdea" stroke="#a00808" stroke-width="1" shape-rendering="auto"/>
<rect x="482" y="82" width="5" height="4" fill="#4040ff" />
<rect x="484" y="100" width="16" height="1" fill="#a00808" />
<circle cx="481.5" cy="100.5" r="3" fill="#fcfdea" stroke="#a00808" stroke-width="1" shape-rendering="auto"/>
<rect x="482" y="92" width="5" height="5" fill="#909090" />
<rect x="484" y="111" width="16" height="1" fill="#a00808" />
<circle cx="481.5" cy="111.5" r="3" fill="#fcfdea" stroke="#a00808" stroke-width="1" shape-rendering="auto"/>
<rect x="482" y="103" width="5" height="5" fill="#4040ff" />
<rect x="391.5" y="186.5" width="86" height="86" fill="#e2e2c4" stroke="#900808" stroke-width="1"/>
<rect x="369" y="197" width="23" height="1" fill="#a00808" />
<rect x="382" y="190" width="4" height="4" fill="#ff4848" />
<rect x="369" y="208" width="23" height="1" fill="#a00808" />
<rect x="382" y="200" width="4" height="5" fill="#ff4848" />
<rect x="369" y="219" width="23" height="1" fill="#a00808" />
<rect x="382" y="211" width="4" height="5" fill="#4040ff" />
<rect x="369" y="230" width="23" height="1" fill="#a00808" />
<rect x="382" y="222" width="4" height="4" fill="#4040ff" />
<rect x="369" y="240" width="16" height="1" fill="#a00808" />
<circle cx="387.5" cy="240.5" r="3" fill="#fcfdea" stroke="#a00808" stroke-width="1" shape-rendering="auto"/>
<rect x="382" y="233" width="4" height="4" fill="#909090" />
<rect x="369" y="250" width="16" height="1" fill="#a00808" />
<circle cx="387.5" cy="250.5" r="3" fill="#fcfdea" stroke="#a00808" stroke-width="1" shape-rendering="auto"/>
<rect x="382" y="243" width="4" height="4" fill="#909090" />
<rect x="369" y="261" width="16" height="1" fill="#a00808" />
<circle cx="387.5" cy="261.5" r="3" fill="#fcfdea" stroke="#a00808" stroke-width="1" shape-rendering="auto"/>
<rect x="382" y="253" width="4" height="5" fill="#909090" />
<rect x="484" y="197" width="16" height="1" fill="#a00808" />
<circle cx="481.5" cy="197.5" r="3" fill="#fcfdea" stroke="#a00808" stroke-width="1" shape-rendering="auto"/>
<rect x="482" y="190" width="5" height="4" fill="#4040ff" />
<rect x="484" y="208" width="16" height="1" fill="#a00808" />
<circle cx="481.5" cy="208.5" r="3" fill="#fcfdea" stroke="#a00808" stroke-width="1" shape-rendering="auto"/>
<rect x="482" y="200" width="5" height="5" fill="#4040ff" />
<rect x="484" y="219" width="16" height="1" fill="#a00808" />
<circle cx="481.5" cy="219.5" r="3" fill="#fcfdea" stroke="#a00808" stroke-width="1" shape-rendering="auto"/>
<rect x="482" y="211" width="5" height="5" fill="#4040ff" />
<rect x="484" y="230" width="16" height="1" fill="#a00808" />
<circle cx="481.5" cy="230.5" r="3" fill="#fcfdea" stroke="#a00808" stroke-width="1" shape-rendering="auto"/>
<rect x="482" y="222" width="5" height="4" fill="#4040ff" />
<rect x="484" y="240" width="16" height="1" fill="#a00808" />
<circle cx="481.5" cy="240.5" r="3" fill="#fcfdea" stroke="#a00808" stroke-width="1" shape-rendering="auto"/>
<rect x="482" y="233" width="5" height="4" fill="#909090" />
<rect x="484" y="250" width="16" height="1" fill="#a00808" />
<circle cx="481.5" cy="250.5" r="3" fill="#fcfdea" stroke="#a00808" stroke-width="1" shape-rendering="auto"/>
<rect x="482" y="243" width="5" height="4" fill="#909090" />
<rect x="484" y="261" width="16" height="1" fill="#a00808" />
<circle cx="481.5" cy="261.5" r="3" fill="#fcfdea" stroke="#a00808" stroke-width="1" shape-rendering="auto"/>
<rect x="482" y="253" width="5" height="5" fill="#4040ff" />
<rect x="391.5" y="337.5" width="86" height="86" fill="#e2e2c4" stroke="#900808" stroke-width="1"/>
<rect x="369" y="347" width="23" height="1" fill="#a00808" />
<rect x="382" y="340" width="4" height="4" fill="#ff4848" />
<rect x="369" y="358" width="23" height="1" fill="#a00808" />
<rect x="382" y="351" width="4" height="4" fill="#4040ff" />
<rect x="369" y="369" width="23" height="1" fill="#a00808" />
<rect x="382" y="361" width="4" height="5" fill="#4040ff" />
<rect x="369" y="380" width="23" height="1" fill="#a00808" />
<rect x="382" y="372" width="4" height="5" fill="#4040ff" />
<rect x="369" y="391" width="16" height="1" fill="#a00808" />
<circle cx="387.5" cy="391.5" r="3" fill="#fcfdea" stroke="#a00808" stroke-width="1" shape-rendering="auto"/>
<rect x="382" y="383" width="4" height="4" fill="#909090" />
<rect x="369" y="401" width="16" height="1" fill="#a00808" />
<circle cx="387.5" cy="401.5" r="3" fill="#fcfdea" stroke="#a00808" stroke-width="1" shape-rendering="auto"/>
<rect x="382" y="394" width="4" height="4" fill="#909090" />
<rect x="369" y="412" width="16" height="1" fill="#a00808" />
<circle cx="387.5" cy="412.5" r="3" fill="#fcfdea" stroke="#a00808" stroke-width="1" shape-rendering="auto"/>
<rect x="382" y="405" width="4" height="4" fill="#909090" />
<rect x="484" y="347" width="16" height="1" fill="#a00808" />
<circle cx="481.5" cy="347.5" r="3" fill="#fcfdea" stroke="#a00808" stroke-width="1" shape-rendering="auto"/>
<rect x="482" y="340" width="5" height="4" fill="#909090" />
<rect x="484" y="358" width="16" height="1" fill="#a00808" />
<circle cx="481.5" cy="358.5" r="3" fill="#fcfdea" stroke="#a00808" stroke-width="1" shape-rendering="auto"/>
<rect x="482" y="351" width="5" height="4" fill="#4040ff" />
<rect x="484" y="369" width="16" height="1" fill="#a00808" />
<circle cx="481.5" cy="369.5" r="3" fill="#fcfdea" stroke="#a00808" stroke-width="1" shape-rendering="auto"/>
<rect x="482" y="361" width="5" height="5" fill="#4040ff" />
<rect x="484" y="380" width="16" height="1" fill="#a00808" />
<circle cx="481.5" cy="380.5" r="3" fill="#fcfdea" stroke="#a00808" stroke-width="1" shape-rendering="auto"/>
<rect x="482" y="372" width="5" height="5" fill="#909090" />
<rect x="484" y="391" width="16" height="1" fill="#a00808" />
<circle cx="481.5" cy="391.5" r="3" fill="#fcfdea" stroke="#a00808" stroke-width="1" shape-rendering="auto"/>
<rect x="482" y="383" width="5" height="4" fill="#909090" />
<rect x="484" y="401" width="16" height="1" fill="#a00808" />
<circle cx="481.5" cy="401.5" r="3" fill="#fcfdea" stroke="#a00808" stroke-width="1" shape-rendering="auto"/>
<rect x="482" y="394" width="5" height="4" fill="#909090" />
<rect x="484" y="412" width="16" height="1" fill="#a00808" />
<circle cx="481.5" cy="412.5" r="3" fill="#fcfdea" stroke="#a00808" stroke-width="1" shape-rendering="auto"/>
<rect x="482" y="405" width="5" height="4" fill="#909090" />
<rect x="585.5" y="326.5" width="71" height="102" fill="#4a0000" stroke="#8a1515" stroke-width="1"/>
<rect x="575" y="347" width="10" height="1" fill="#a00808" />
<rect x="572" y="339" width="5" height="6" fill="#909090" />
<rect x="575" y="358" width="10" height="1" fill="#a00808" />
<rect x="572" y="350" width="5" height="6" fill="#4040ff" />
<rect x="575" y="369" width="10" height="1" fill="#a00808" />
<rect x="572" y="361" width="5" height="5" fill="#4040ff" />
<rect x="575" y="380" width="10" height="1" fill="#a00808" />
<rect x="572" y="372" width="5" height="5" fill="#909090" />
<rect x="575" y="391" width="10" height="1" fill="#a00808" />
<rect x="572" y="382" width="5" height="6" fill="#909090" />
<rect x="575" y="401" width="10" height="1" fill="#a00808" />
<rect x="572" y="393" width="5" height="6" fill="#909090" />
<rect x="575" y="412" width="10" height="1" fill="#a00808" />
<rect x="572" y="404" width="5" height="6" fill="#909090" />
<rect x="642" y="312" width="6" height="6" fill="#ff4848" />
<polygon points="603.4,341.0 607.1,344.8 605.9,372.2 602.1,376.0 598.4,372.2 599.6,344.8" fill="#6c0000" shape-rendering="auto"/>
<polygon points="602.1,377.2 605.8,380.9 604.5,409.8 600.8,413.5 597.0,409.8 598.3,380.9" fill="#6c0000" shape-rendering="auto"/>
<polygon points="602.6,376.6 606.3,372.9 635.5,372.9 639.2,376.6 635.5,380.3 606.3,380.3" fill="#6c0000" shape-rendering="auto"/>
<polygon points="603.9,340.4 607.4,336.9 637.0,336.9 640.5,340.4 637.0,343.9 607.4,343.9" fill="#6c0000" shape-rendering="auto"/>
<polygon points="601.2,414.1 605.2,410.1 633.8,410.1 637.8,414.1 633.8,418.1 605.2,418.1" fill="#6c0000" shape-rendering="auto"/>
<polygon points="641.0,341.0 644.7,344.8 643.5,372.2 639.7,376.0 636.0,372.2 637.2,344.8" fill="#ff0c0c" shape-rendering="auto"/>
<polygon points="639.7,377.2 643.4,380.9 642.1,409.8 638.4,413.5 634.6,409.8 635.9,380.9" fill="#ff0c0c" shape-rendering="auto"/>
<rect x="747.5" y="326.5" width="71" height="102" fill="#4a0000" stroke="#8a1515" stroke-width="1"/>
<rect x="737" y="347" width="10" height="1" fill="#a00808" />
<rect x="734" y="339" width="5" height="6" fill="#4040ff" />
<rect x="737" y="358" width="10" height="1" fill="#a00808" />
<rect x="734" y="350" width="5" height="6" fill="#4040ff" />
<rect x="737" y="369" width="10" height="1" fill="#a00808" />
<rect x="734" y="361" width="5" height="5" fill="#4040ff" />
<rect x="737" y="380" width="10" height="1" fill="#a00808" />
<rect x="734" y="372" width="5" height="5" fill="#4040ff" />
<rect x="737" y="391" width="10" height="1" fill="#a00808" />
<rect x="734" y="382" width="5" height="6" fill="#909090" />
<rect x="737" y="401" width="10" height="1" fill="#a00808" />
<rect x="734" y="393" width="5" height="6" fill="#909090" />
<rect x="737" y="412" width="10" height="1" fill="#a00808" />
<rect x="734" y="404" width="5" height="6" fill="#4040ff" />
<rect x="804" y="312" width="6" height="6" fill="#ff4848" />
<polygon points="765.4,341.0 769.1,344.8 767.9,372.2 764.1,376.0 760.4,372.2 761.6,344.8" fill="#6c0000" shape-rendering="auto"/>
<polygon points="764.1,377.2 767.8,380.9 766.5,409.8 762.8,413.5 759.0,409.8 760.3,380.9" fill="#6c0000" shape-rendering="auto"/>
<polygon points="764.6,376.6 768.3,372.9 797.5,372.9 801.2,376.6 797.5,380.3 768.3,380.3" fill="#ff0c0c" shape-rendering="auto"/>
<polygon points="765.9,340.4 769.4,336.9 799.0,336.9 802.5,340.4 799.0,343.9 769.4,343.9" fill="#ff0c0c" shape-rendering="auto"/>
<polygon points="763.2,414.1 767.2,410.1 795.8,410.1 799.8,414.1 795.8,418.1 767.2,418.1" fill="#ff0c0c" shape-rendering="auto"/>
<polygon points="803.0,341.0 806.7,344.8 805.5,372.2 801.7,376.0 798.0,372.2 799.2,344.8" fill="#ff0c0c" shape-rendering="auto"/>
<polygon points="801.7,377.2 805.4,380.9 804.1,409.8 800.4,413.5 796.6,409.8 797.9,380.9" fill="#ff0c0c" shape-rendering="auto"/>
<rect x="909.5" y="326.5" width="71" height="102" fill="#4a0000" stroke="#8a1515" stroke-width="1"/>
<rect x="899" y="347" width="10" height="1" fill="#a00808" />
<rect x="896" y="339" width="5" height="6" fill="#4040ff" />
<rect x="899" y="358" width="10" height="1" fill="#a00808" />
<rect x="896" y="350" width="5" height="6" fill="#4040ff" />
<rect x="899" y="369" width="10" height="1" fill="#a00808" />
<rect x="896" y="361" width="5" height="5" fill="#909090" />
<rect x="899" y="380" width="10" height="1" fill="#a00808" />
<rect x="896" y="372" width="5" height="5" fill="#4040ff" />
<rect x="899" y="391" width="10" height="1" fill="#a00808" />
<rect x="896" y="382" width="5" height="6" fill="#4040ff" />
<rect x="899" y="401" width="10" height="1" fill="#a00808" />
<rect x="896" y="393" width="5" height="6" fill="#909090" />
<rect x="899" y="412" width="10" height="1" fill="#a00808" />
<rect x="896" y="404" width="5" height="6" fill="#4040ff" />
<rect x="966" y="312" width="6" height="6" fill="#ff4848" />
<polygon points="927.4,341.0 931.1,344.8 929.9,372.2 926.1,376.0 922.4,372.2 923.6,344.8" fill="#6c0000" shape-rendering="auto"/>
<polygon points="963.7,377.2 967.4,380.9 966.1,409.8 962.4,413.5 958.6,409.8 959.9,380.9" fill="#6c0000" shape-rendering="auto"/>
<polygon points="926.1,377.2 929.8,380.9 928.5,409.8 924.8,413.5 921.0,409.8 922.3,380.9" fill="#ff0c0c" shape-rendering="auto"/>
<polygon points="926.6,376.6 930.3,372.9 959.5,372.9 963.2,376.6 959.5,380.3 930.3,380.3" fill="#ff0c0c" shape-rendering="auto"/>
<polygon points="927.9,340.4 931.4,336.9 961.0,336.9 964.5,340.4 961.0,343.9 931.4,343.9" fill="#ff0c0c" shape-rendering="auto"/>
<polygon points="925.2,414.1 929.2,410.1 957.8,410.1 961.8,414.1 957.8,418.1 929.2,418.1" fill="#ff0c0c" shape-rendering="auto"/>
<polygon points="965.0,341.0 968.7,344.8 967.5,372.2 963.7,376.0 960.0,372.2 961.2,344.8" fill="#ff0c0c" shape-rendering="auto"/>
<rect x="521" y="235" width="1" height="12" fill="#0000e0" />
<rect x="521" y="237" width="1" height="1" fill="#0000e0" />
<rect x="522" y="238" width="1" height="1" fill="#0000e0" />
<rect x="523" y="239" width="1" height="1" fill="#0000e0" />
<rect x="524" y="240" width="1" height="1" fill="#0000e0" />
<rect x="523" y="241" width="1" height="1" fill="#0000e0" />
<rect x="522" y="242" width="1" height="1" fill="#0000e0" />
<rect x="521" y="243" width="1" height="1" fill="#0000e0" />
<rect x="520" y="242" width="1" height="1" fill="#0000e0" />
<rect x="519" y="241" width="1" height="1" fill="#0000e0" />
<rect x="518" y="240" width="1" height="1" fill="#0000e0" />
<rect x="519" y="239" width="1" height="1" fill="#0000e0" />
<rect x="520" y="238" width="1" height="1" fill="#0000e0" />
<defs><filter id="th" x="0" y="0" width="100%" height="100%" filterUnits="userSpaceOnUse" color-interpolation-filters="sRGB"><feComponentTransfer><feFuncA type="linear" slope="3" intercept="-0.62"/></feComponentTransfer></filter></defs>
<g filter="url(#th)" shape-rendering="auto"><text transform="translate(186.5 45) scale(0.88 1.0)" font-size="10.2" fill="#000" text-anchor="end">14</text>
<text transform="translate(202.8 50) scale(0.875 1.0)" font-size="10.2" fill="#000" text-anchor="start" letter-spacing="0.4">CKA</text>
<text transform="translate(186.5 56) scale(0.88 1.0)" font-size="10.2" fill="#000" text-anchor="end">1</text>
<text transform="translate(202.8 61) scale(0.875 1.0)" font-size="10.2" fill="#000" text-anchor="start" letter-spacing="0.4">CKB</text>
<text transform="translate(186.5 88) scale(0.88 1.0)" font-size="10.2" fill="#000" text-anchor="end">2</text>
<text transform="translate(202.8 93) scale(0.875 1.0)" font-size="10.2" fill="#000" text-anchor="start">R0(1)</text>
<text transform="translate(186.5 99) scale(0.88 1.0)" font-size="10.2" fill="#000" text-anchor="end">3</text>
<text transform="translate(202.8 104) scale(0.875 1.0)" font-size="10.2" fill="#000" text-anchor="start">R0(2)</text>
<text transform="translate(186.5 110) scale(0.88 1.0)" font-size="10.2" fill="#000" text-anchor="end">6</text>
<text transform="translate(202.8 115) scale(0.875 1.0)" font-size="10.2" fill="#000" text-anchor="start">R9(1)</text>
<text transform="translate(186.5 121) scale(0.88 1.0)" font-size="10.2" fill="#000" text-anchor="end">7</text>
<text transform="translate(202.8 126) scale(0.875 1.0)" font-size="10.2" fill="#000" text-anchor="start">R9(2)</text>
<text transform="translate(295 45) scale(0.88 1.0)" font-size="10.2" fill="#000" text-anchor="start">12</text>
<text transform="translate(277 50) scale(0.82 1.0)" font-size="10.2" fill="#000" text-anchor="end">Q0</text>
<text transform="translate(295 56) scale(0.88 1.0)" font-size="10.2" fill="#000" text-anchor="start">9</text>
<text transform="translate(277 61) scale(0.82 1.0)" font-size="10.2" fill="#000" text-anchor="end">Q1</text>
<text transform="translate(295 67) scale(0.88 1.0)" font-size="10.2" fill="#000" text-anchor="start">8</text>
<text transform="translate(277 72) scale(0.82 1.0)" font-size="10.2" fill="#000" text-anchor="end">Q2</text>
<text transform="translate(295 77) scale(0.88 1.0)" font-size="10.2" fill="#000" text-anchor="start">11</text>
<text transform="translate(277 82) scale(0.82 1.0)" font-size="10.2" fill="#000" text-anchor="end">Q3</text>
<text transform="translate(196.5 141.5) scale(1.0 1.0)" font-size="8.7" fill="#000" text-anchor="start" textLength="30.00" lengthAdjust="spacingAndGlyphs">74LS90</text>
<text transform="translate(186.5 196) scale(0.88 1.0)" font-size="10.2" fill="#000" text-anchor="end">14</text>
<text transform="translate(202.8 201) scale(0.875 1.0)" font-size="10.2" fill="#000" text-anchor="start" letter-spacing="0.4">CKA</text>
<text transform="translate(186.5 207) scale(0.88 1.0)" font-size="10.2" fill="#000" text-anchor="end">1</text>
<text transform="translate(202.8 212) scale(0.875 1.0)" font-size="10.2" fill="#000" text-anchor="start" letter-spacing="0.4">CKB</text>
<text transform="translate(186.5 239) scale(0.88 1.0)" font-size="10.2" fill="#000" text-anchor="end">2</text>
<text transform="translate(202.8 244) scale(0.875 1.0)" font-size="10.2" fill="#000" text-anchor="start">R0(1)</text>
<text transform="translate(186.5 249) scale(0.88 1.0)" font-size="10.2" fill="#000" text-anchor="end">3</text>
<text transform="translate(202.8 254) scale(0.875 1.0)" font-size="10.2" fill="#000" text-anchor="start">R0(2)</text>
<text transform="translate(186.5 260) scale(0.88 1.0)" font-size="10.2" fill="#000" text-anchor="end">6</text>
<text transform="translate(202.8 265) scale(0.875 1.0)" font-size="10.2" fill="#000" text-anchor="start">R9(1)</text>
<text transform="translate(186.5 271) scale(0.88 1.0)" font-size="10.2" fill="#000" text-anchor="end">7</text>
<text transform="translate(202.8 276) scale(0.875 1.0)" font-size="10.2" fill="#000" text-anchor="start">R9(2)</text>
<text transform="translate(295 196) scale(0.88 1.0)" font-size="10.2" fill="#000" text-anchor="start">12</text>
<text transform="translate(277 201) scale(0.82 1.0)" font-size="10.2" fill="#000" text-anchor="end">Q0</text>
<text transform="translate(295 207) scale(0.88 1.0)" font-size="10.2" fill="#000" text-anchor="start">9</text>
<text transform="translate(277 212) scale(0.82 1.0)" font-size="10.2" fill="#000" text-anchor="end">Q1</text>
<text transform="translate(295 218) scale(0.88 1.0)" font-size="10.2" fill="#000" text-anchor="start">8</text>
<text transform="translate(277 223) scale(0.82 1.0)" font-size="10.2" fill="#000" text-anchor="end">Q2</text>
<text transform="translate(295 229) scale(0.88 1.0)" font-size="10.2" fill="#000" text-anchor="start">11</text>
<text transform="translate(277 234) scale(0.82 1.0)" font-size="10.2" fill="#000" text-anchor="end">Q3</text>
<text transform="translate(196.5 292.5) scale(1.0 1.0)" font-size="8.7" fill="#000" text-anchor="start" textLength="30.00" lengthAdjust="spacingAndGlyphs">74LS90</text>
<text transform="translate(186.5 346) scale(0.88 1.0)" font-size="10.2" fill="#000" text-anchor="end">14</text>
<text transform="translate(202.8 351) scale(0.875 1.0)" font-size="10.2" fill="#000" text-anchor="start" letter-spacing="0.4">CKA</text>
<text transform="translate(186.5 357) scale(0.88 1.0)" font-size="10.2" fill="#000" text-anchor="end">1</text>
<text transform="translate(202.8 362) scale(0.875 1.0)" font-size="10.2" fill="#000" text-anchor="start" letter-spacing="0.4">CKB</text>
<text transform="translate(186.5 390) scale(0.88 1.0)" font-size="10.2" fill="#000" text-anchor="end">2</text>
<text transform="translate(202.8 395) scale(0.875 1.0)" font-size="10.2" fill="#000" text-anchor="start">R0(1)</text>
<text transform="translate(186.5 400) scale(0.88 1.0)" font-size="10.2" fill="#000" text-anchor="end">3</text>
<text transform="translate(202.8 405) scale(0.875 1.0)" font-size="10.2" fill="#000" text-anchor="start">R0(2)</text>
<text transform="translate(186.5 411) scale(0.88 1.0)" font-size="10.2" fill="#000" text-anchor="end">6</text>
<text transform="translate(202.8 416) scale(0.875 1.0)" font-size="10.2" fill="#000" text-anchor="start">R9(1)</text>
<text transform="translate(186.5 422) scale(0.88 1.0)" font-size="10.2" fill="#000" text-anchor="end">7</text>
<text transform="translate(202.8 427) scale(0.875 1.0)" font-size="10.2" fill="#000" text-anchor="start">R9(2)</text>
<text transform="translate(295 346) scale(0.88 1.0)" font-size="10.2" fill="#000" text-anchor="start">12</text>
<text transform="translate(277 351) scale(0.82 1.0)" font-size="10.2" fill="#000" text-anchor="end">Q0</text>
<text transform="translate(295 357) scale(0.88 1.0)" font-size="10.2" fill="#000" text-anchor="start">9</text>
<text transform="translate(277 362) scale(0.82 1.0)" font-size="10.2" fill="#000" text-anchor="end">Q1</text>
<text transform="translate(295 368) scale(0.88 1.0)" font-size="10.2" fill="#000" text-anchor="start">8</text>
<text transform="translate(277 373) scale(0.82 1.0)" font-size="10.2" fill="#000" text-anchor="end">Q2</text>
<text transform="translate(295 379) scale(0.88 1.0)" font-size="10.2" fill="#000" text-anchor="start">11</text>
<text transform="translate(277 384) scale(0.82 1.0)" font-size="10.2" fill="#000" text-anchor="end">Q3</text>
<text transform="translate(196.5 443.5) scale(1.0 1.0)" font-size="8.7" fill="#000" text-anchor="start" textLength="30.00" lengthAdjust="spacingAndGlyphs">74LS90</text>
<text transform="translate(379.5 45) scale(0.88 1.0)" font-size="10.2" fill="#000" text-anchor="end">7</text>
<text transform="translate(396.5 50) scale(0.875 1.0)" font-size="10.2" fill="#000" text-anchor="start">A</text>
<text transform="translate(379.5 56) scale(0.88 1.0)" font-size="10.2" fill="#000" text-anchor="end">1</text>
<text transform="translate(396.5 61) scale(0.875 1.0)" font-size="10.2" fill="#000" text-anchor="start">B</text>
<text transform="translate(379.5 67) scale(0.88 1.0)" font-size="10.2" fill="#000" text-anchor="end">2</text>
<text transform="translate(396.5 72) scale(0.875 1.0)" font-size="10.2" fill="#000" text-anchor="start">C</text>
<text transform="translate(379.5 77) scale(0.88 1.0)" font-size="10.2" fill="#000" text-anchor="end">6</text>
<text transform="translate(396.5 82) scale(0.875 1.0)" font-size="10.2" fill="#000" text-anchor="start">D</text>
<text transform="translate(379.5 88) scale(0.88 1.0)" font-size="10.2" fill="#000" text-anchor="end">4</text>
<text transform="translate(396.5 93) scale(0.875 1.0)" font-size="10.2" fill="#000" text-anchor="start" letter-spacing="0.3">BI/RBO</text>
<text transform="translate(379.5 99) scale(0.88 1.0)" font-size="10.2" fill="#000" text-anchor="end">5</text>
<text transform="translate(396.5 104) scale(0.875 1.0)" font-size="10.2" fill="#000" text-anchor="start" letter-spacing="0.3">RBI</text>
<text transform="translate(379.5 110) scale(0.88 1.0)" font-size="10.2" fill="#000" text-anchor="end">3</text>
<text transform="translate(396.5 115) scale(0.875 1.0)" font-size="10.2" fill="#000" text-anchor="start" letter-spacing="0.3">LT</text>
<text transform="translate(488.5 45) scale(0.88 1.0)" font-size="10.2" fill="#000" text-anchor="start">13</text>
<text transform="translate(472.8 50) scale(0.875 1.0)" font-size="10.2" fill="#000" text-anchor="end" letter-spacing="0.5">QA</text>
<text transform="translate(488.5 56) scale(0.88 1.0)" font-size="10.2" fill="#000" text-anchor="start">12</text>
<text transform="translate(472.8 61) scale(0.875 1.0)" font-size="10.2" fill="#000" text-anchor="end" letter-spacing="0.5">QB</text>
<text transform="translate(488.5 67) scale(0.88 1.0)" font-size="10.2" fill="#000" text-anchor="start">11</text>
<text transform="translate(472.8 72) scale(0.875 1.0)" font-size="10.2" fill="#000" text-anchor="end" letter-spacing="0.5">QC</text>
<text transform="translate(488.5 77) scale(0.88 1.0)" font-size="10.2" fill="#000" text-anchor="start">10</text>
<text transform="translate(472.8 82) scale(0.875 1.0)" font-size="10.2" fill="#000" text-anchor="end" letter-spacing="0.5">QD</text>
<text transform="translate(488.5 88) scale(0.88 1.0)" font-size="10.2" fill="#000" text-anchor="start">9</text>
<text transform="translate(472.8 93) scale(0.875 1.0)" font-size="10.2" fill="#000" text-anchor="end" letter-spacing="0.5">QE</text>
<text transform="translate(488.5 99) scale(0.88 1.0)" font-size="10.2" fill="#000" text-anchor="start">15</text>
<text transform="translate(472.8 104) scale(0.875 1.0)" font-size="10.2" fill="#000" text-anchor="end" letter-spacing="0.5">QF</text>
<text transform="translate(488.5 110) scale(0.88 1.0)" font-size="10.2" fill="#000" text-anchor="start">14</text>
<text transform="translate(472.8 115) scale(0.875 1.0)" font-size="10.2" fill="#000" text-anchor="end" letter-spacing="0.5">QG</text>
<text transform="translate(390 131.5) scale(1.0 1.0)" font-size="8.7" fill="#000" text-anchor="start" textLength="34.50" lengthAdjust="spacingAndGlyphs">74LS247</text>
<text transform="translate(379.5 196) scale(0.88 1.0)" font-size="10.2" fill="#000" text-anchor="end">7</text>
<text transform="translate(396.5 201) scale(0.875 1.0)" font-size="10.2" fill="#000" text-anchor="start">A</text>
<text transform="translate(379.5 207) scale(0.88 1.0)" font-size="10.2" fill="#000" text-anchor="end">1</text>
<text transform="translate(396.5 212) scale(0.875 1.0)" font-size="10.2" fill="#000" text-anchor="start">B</text>
<text transform="translate(379.5 218) scale(0.88 1.0)" font-size="10.2" fill="#000" text-anchor="end">2</text>
<text transform="translate(396.5 223) scale(0.875 1.0)" font-size="10.2" fill="#000" text-anchor="start">C</text>
<text transform="translate(379.5 229) scale(0.88 1.0)" font-size="10.2" fill="#000" text-anchor="end">6</text>
<text transform="translate(396.5 234) scale(0.875 1.0)" font-size="10.2" fill="#000" text-anchor="start">D</text>
<text transform="translate(379.5 239) scale(0.88 1.0)" font-size="10.2" fill="#000" text-anchor="end">4</text>
<text transform="translate(396.5 244) scale(0.875 1.0)" font-size="10.2" fill="#000" text-anchor="start" letter-spacing="0.3">BI/RBO</text>
<text transform="translate(379.5 249) scale(0.88 1.0)" font-size="10.2" fill="#000" text-anchor="end">5</text>
<text transform="translate(396.5 254) scale(0.875 1.0)" font-size="10.2" fill="#000" text-anchor="start" letter-spacing="0.3">RBI</text>
<text transform="translate(379.5 260) scale(0.88 1.0)" font-size="10.2" fill="#000" text-anchor="end">3</text>
<text transform="translate(396.5 265) scale(0.875 1.0)" font-size="10.2" fill="#000" text-anchor="start" letter-spacing="0.3">LT</text>
<text transform="translate(488.5 196) scale(0.88 1.0)" font-size="10.2" fill="#000" text-anchor="start">13</text>
<text transform="translate(472.8 201) scale(0.875 1.0)" font-size="10.2" fill="#000" text-anchor="end" letter-spacing="0.5">QA</text>
<text transform="translate(488.5 207) scale(0.88 1.0)" font-size="10.2" fill="#000" text-anchor="start">12</text>
<text transform="translate(472.8 212) scale(0.875 1.0)" font-size="10.2" fill="#000" text-anchor="end" letter-spacing="0.5">QB</text>
<text transform="translate(488.5 218) scale(0.88 1.0)" font-size="10.2" fill="#000" text-anchor="start">11</text>
<text transform="translate(472.8 223) scale(0.875 1.0)" font-size="10.2" fill="#000" text-anchor="end" letter-spacing="0.5">QC</text>
<text transform="translate(488.5 229) scale(0.88 1.0)" font-size="10.2" fill="#000" text-anchor="start">10</text>
<text transform="translate(472.8 234) scale(0.875 1.0)" font-size="10.2" fill="#000" text-anchor="end" letter-spacing="0.5">QD</text>
<text transform="translate(488.5 239) scale(0.88 1.0)" font-size="10.2" fill="#000" text-anchor="start">9</text>
<text transform="translate(472.8 244) scale(0.875 1.0)" font-size="10.2" fill="#000" text-anchor="end" letter-spacing="0.5">QE</text>
<text transform="translate(488.5 249) scale(0.88 1.0)" font-size="10.2" fill="#000" text-anchor="start">15</text>
<text transform="translate(472.8 254) scale(0.875 1.0)" font-size="10.2" fill="#000" text-anchor="end" letter-spacing="0.5">QF</text>
<text transform="translate(488.5 260) scale(0.88 1.0)" font-size="10.2" fill="#000" text-anchor="start">14</text>
<text transform="translate(472.8 265) scale(0.875 1.0)" font-size="10.2" fill="#000" text-anchor="end" letter-spacing="0.5">QG</text>
<text transform="translate(390 281.5) scale(1.0 1.0)" font-size="8.7" fill="#000" text-anchor="start" textLength="34.50" lengthAdjust="spacingAndGlyphs">74LS247</text>
<text transform="translate(379.5 346) scale(0.88 1.0)" font-size="10.2" fill="#000" text-anchor="end">7</text>
<text transform="translate(396.5 351) scale(0.875 1.0)" font-size="10.2" fill="#000" text-anchor="start">A</text>
<text transform="translate(379.5 357) scale(0.88 1.0)" font-size="10.2" fill="#000" text-anchor="end">1</text>
<text transform="translate(396.5 362) scale(0.875 1.0)" font-size="10.2" fill="#000" text-anchor="start">B</text>
<text transform="translate(379.5 368) scale(0.88 1.0)" font-size="10.2" fill="#000" text-anchor="end">2</text>
<text transform="translate(396.5 373) scale(0.875 1.0)" font-size="10.2" fill="#000" text-anchor="start">C</text>
<text transform="translate(379.5 379) scale(0.88 1.0)" font-size="10.2" fill="#000" text-anchor="end">6</text>
<text transform="translate(396.5 384) scale(0.875 1.0)" font-size="10.2" fill="#000" text-anchor="start">D</text>
<text transform="translate(379.5 390) scale(0.88 1.0)" font-size="10.2" fill="#000" text-anchor="end">4</text>
<text transform="translate(396.5 395) scale(0.875 1.0)" font-size="10.2" fill="#000" text-anchor="start" letter-spacing="0.3">BI/RBO</text>
<text transform="translate(379.5 400) scale(0.88 1.0)" font-size="10.2" fill="#000" text-anchor="end">5</text>
<text transform="translate(396.5 405) scale(0.875 1.0)" font-size="10.2" fill="#000" text-anchor="start" letter-spacing="0.3">RBI</text>
<text transform="translate(379.5 411) scale(0.88 1.0)" font-size="10.2" fill="#000" text-anchor="end">3</text>
<text transform="translate(396.5 416) scale(0.875 1.0)" font-size="10.2" fill="#000" text-anchor="start" letter-spacing="0.3">LT</text>
<text transform="translate(488.5 346) scale(0.88 1.0)" font-size="10.2" fill="#000" text-anchor="start">13</text>
<text transform="translate(472.8 351) scale(0.875 1.0)" font-size="10.2" fill="#000" text-anchor="end" letter-spacing="0.5">QA</text>
<text transform="translate(488.5 357) scale(0.88 1.0)" font-size="10.2" fill="#000" text-anchor="start">12</text>
<text transform="translate(472.8 362) scale(0.875 1.0)" font-size="10.2" fill="#000" text-anchor="end" letter-spacing="0.5">QB</text>
<text transform="translate(488.5 368) scale(0.88 1.0)" font-size="10.2" fill="#000" text-anchor="start">11</text>
<text transform="translate(472.8 373) scale(0.875 1.0)" font-size="10.2" fill="#000" text-anchor="end" letter-spacing="0.5">QC</text>
<text transform="translate(488.5 379) scale(0.88 1.0)" font-size="10.2" fill="#000" text-anchor="start">10</text>
<text transform="translate(472.8 384) scale(0.875 1.0)" font-size="10.2" fill="#000" text-anchor="end" letter-spacing="0.5">QD</text>
<text transform="translate(488.5 390) scale(0.88 1.0)" font-size="10.2" fill="#000" text-anchor="start">9</text>
<text transform="translate(472.8 395) scale(0.875 1.0)" font-size="10.2" fill="#000" text-anchor="end" letter-spacing="0.5">QE</text>
<text transform="translate(488.5 400) scale(0.88 1.0)" font-size="10.2" fill="#000" text-anchor="start">15</text>
<text transform="translate(472.8 405) scale(0.875 1.0)" font-size="10.2" fill="#000" text-anchor="end" letter-spacing="0.5">QF</text>
<text transform="translate(488.5 411) scale(0.88 1.0)" font-size="10.2" fill="#000" text-anchor="start">14</text>
<text transform="translate(472.8 416) scale(0.875 1.0)" font-size="10.2" fill="#000" text-anchor="end" letter-spacing="0.5">QG</text>
<text transform="translate(390 432.5) scale(1.0 1.0)" font-size="8.7" fill="#000" text-anchor="start" textLength="34.50" lengthAdjust="spacingAndGlyphs">74LS247</text>
<text transform="translate(62.5 457.5) scale(1.0 1.0)" font-size="8.6" fill="#000" text-anchor="start" textLength="18.20" lengthAdjust="spacingAndGlyphs">100n</text>
<text transform="translate(57.5 544.8) scale(1.0 1.0)" font-size="8.6" fill="#000" text-anchor="start" textLength="13.50" lengthAdjust="spacingAndGlyphs">10k</text>
<text transform="translate(116.8 554.7) scale(1.0 1.0)" font-size="8.7" fill="#000" text-anchor="start" textLength="30.30" lengthAdjust="spacingAndGlyphs">1N4148</text></g>
<defs><filter id="th2" x="0" y="0" width="100%" height="100%" filterUnits="userSpaceOnUse" color-interpolation-filters="sRGB"><feComponentTransfer><feFuncA type="linear" slope="1.7" intercept="-0.2"/></feComponentTransfer></filter></defs>
<g filter="url(#th2)" shape-rendering="auto"><text transform="translate(196.5 32) scale(0.78 1.0)" font-size="13.5" fill="#000" text-anchor="start">U1</text>
<text transform="translate(196.5 183) scale(0.78 1.0)" font-size="13.5" fill="#000" text-anchor="start">U2</text>
<text transform="translate(196.5 334) scale(0.78 1.0)" font-size="13.5" fill="#000" text-anchor="start">U3</text>
<text transform="translate(390.5 32) scale(0.78 1.0)" font-size="13.5" fill="#000" text-anchor="start">U4</text>
<text transform="translate(390.5 183) scale(0.78 1.0)" font-size="13.5" fill="#000" text-anchor="start">U5</text>
<text transform="translate(390.5 334) scale(0.78 1.0)" font-size="13.5" fill="#000" text-anchor="start">U6</text>
<text transform="translate(62.5 445.8) scale(0.78 1.0)" font-size="13.5" fill="#000" text-anchor="start">C1</text>
<text transform="translate(57.3 532) scale(0.78 1.0)" font-size="13.5" fill="#000" text-anchor="start">R1</text>
<text transform="translate(116.5 542.7) scale(0.78 1.0)" font-size="13.5" fill="#000" text-anchor="start">D1</text></g>
<g shape-rendering="auto"><text transform="translate(197 152) scale(1.0 1.0)" font-size="8.5" fill="#8c8c8c" text-anchor="start" textLength="29.00" lengthAdjust="spacingAndGlyphs">&lt;TEXT&gt;</text>
<text transform="translate(197 303) scale(1.0 1.0)" font-size="8.5" fill="#8c8c8c" text-anchor="start" textLength="29.00" lengthAdjust="spacingAndGlyphs">&lt;TEXT&gt;</text>
<text transform="translate(197 454) scale(1.0 1.0)" font-size="8.5" fill="#8c8c8c" text-anchor="start" textLength="29.00" lengthAdjust="spacingAndGlyphs">&lt;TEXT&gt;</text>
<text transform="translate(390.5 142) scale(1.0 1.0)" font-size="8.5" fill="#8c8c8c" text-anchor="start" textLength="29.00" lengthAdjust="spacingAndGlyphs">&lt;TEXT&gt;</text>
<text transform="translate(390.5 292) scale(1.0 1.0)" font-size="8.5" fill="#8c8c8c" text-anchor="start" textLength="29.00" lengthAdjust="spacingAndGlyphs">&lt;TEXT&gt;</text>
<text transform="translate(390.5 443) scale(1.0 1.0)" font-size="8.5" fill="#8c8c8c" text-anchor="start" textLength="29.00" lengthAdjust="spacingAndGlyphs">&lt;TEXT&gt;</text>
<text transform="translate(62.5 468.2) scale(1.0 1.0)" font-size="8.5" fill="#8c8c8c" text-anchor="start" textLength="29.00" lengthAdjust="spacingAndGlyphs">&lt;TEXT&gt;</text>
<text transform="translate(57.5 554.7) scale(1.0 1.0)" font-size="8.5" fill="#8c8c8c" text-anchor="start" textLength="29.00" lengthAdjust="spacingAndGlyphs">&lt;TEXT&gt;</text>
<text transform="translate(116.8 565.5) scale(1.0 1.0)" font-size="8.5" fill="#8c8c8c" text-anchor="start" textLength="29.00" lengthAdjust="spacingAndGlyphs">&lt;TEXT&gt;</text></g>
</svg>
</body></html>
